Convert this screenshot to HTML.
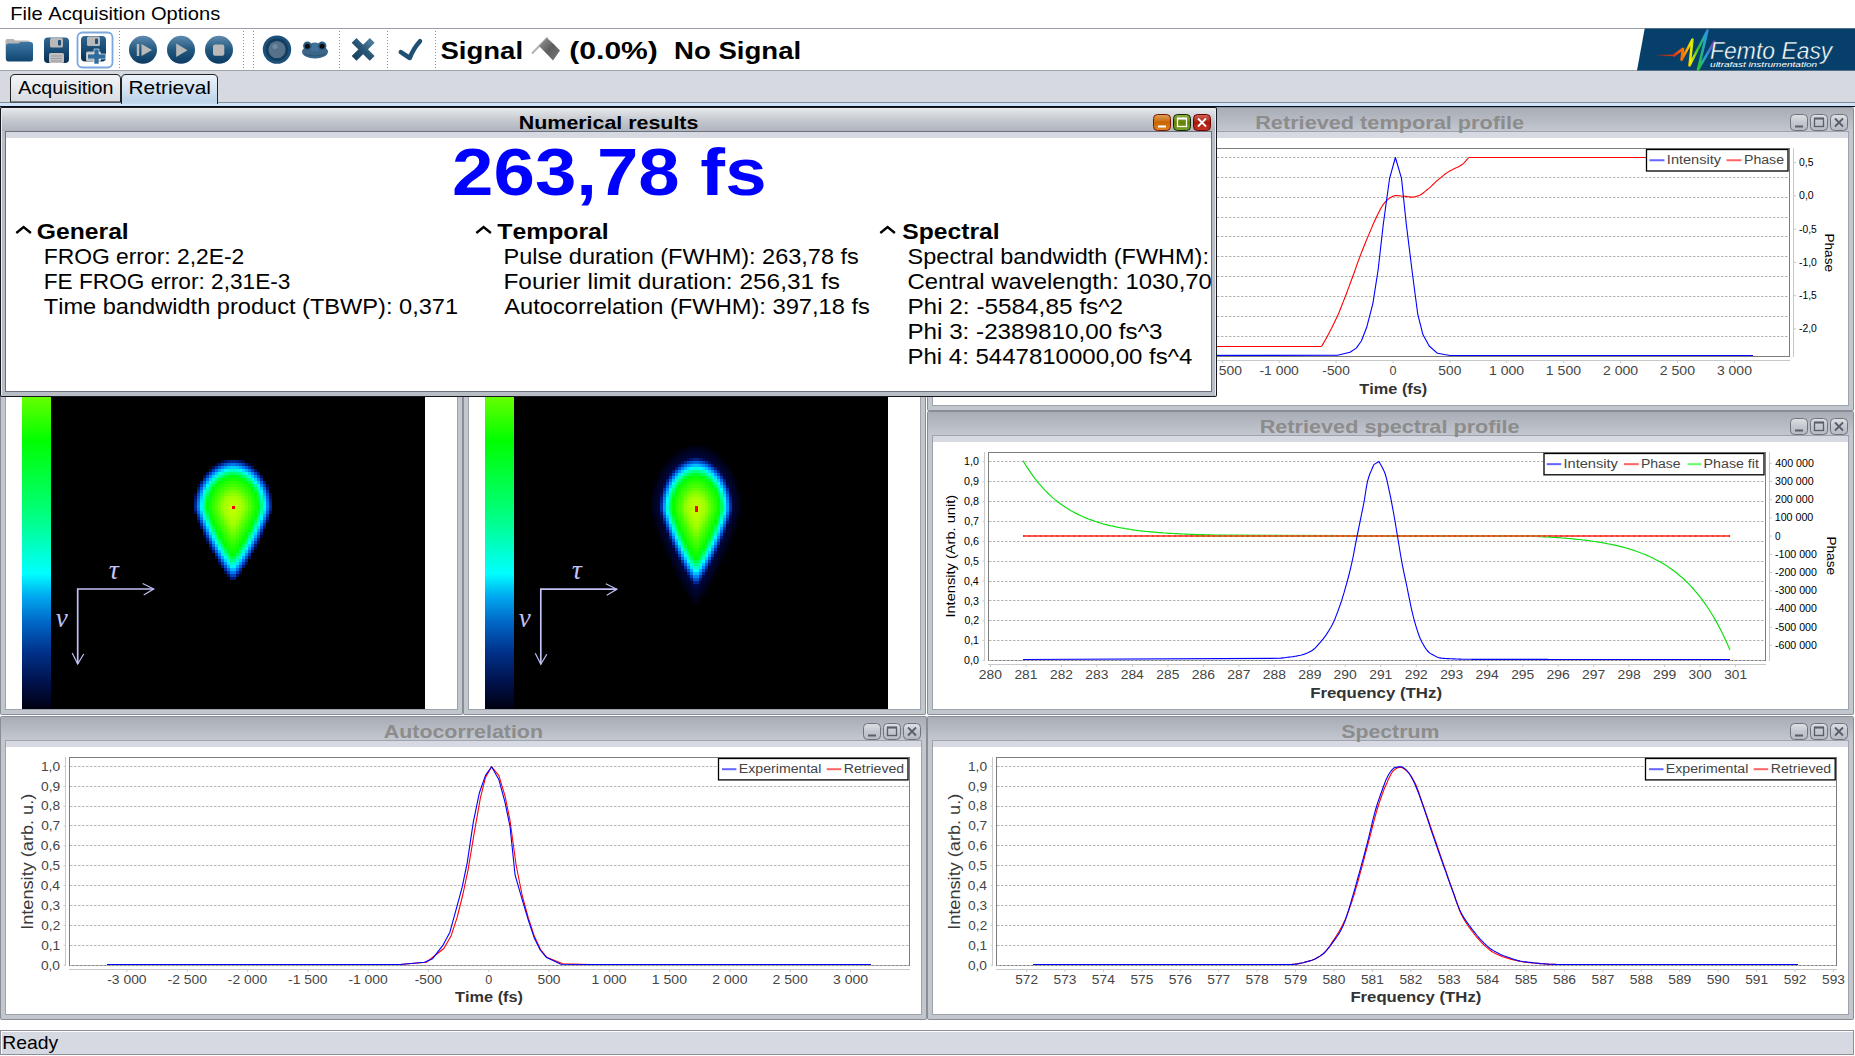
<!DOCTYPE html><html><head><meta charset="utf-8"><title>Femto Easy</title><style>html,body{margin:0;padding:0;background:#fff;overflow:hidden;}svg{display:block;font-family:"Liberation Sans",sans-serif;}text{font-kerning:none;}</style></head><body><svg width="1855" height="1056" viewBox="0 0 1855 1056" font-family="Liberation Sans, sans-serif"><defs><linearGradient id="tInact" x1="0" y1="0" x2="0" y2="1"><stop offset="0" stop-color="#a8adb6"/><stop offset="1" stop-color="#c3c7cf"/></linearGradient><linearGradient id="tAct" x1="0" y1="0" x2="0" y2="1"><stop offset="0" stop-color="#e4e6ea"/><stop offset="0.55" stop-color="#c2c6cd"/><stop offset="1" stop-color="#b0b4bd"/></linearGradient><linearGradient id="btnIn" x1="0" y1="0" x2="0" y2="1"><stop offset="0" stop-color="#dfe1e5"/><stop offset="0.5" stop-color="#c3c7ce"/><stop offset="1" stop-color="#b6bbc3"/></linearGradient><linearGradient id="bOr" x1="0" y1="0" x2="0" y2="1"><stop offset="0" stop-color="#dfa060"/><stop offset="0.5" stop-color="#c96500"/><stop offset="1" stop-color="#e2822a"/></linearGradient><linearGradient id="bGr" x1="0" y1="0" x2="0" y2="1"><stop offset="0" stop-color="#93ae48"/><stop offset="0.5" stop-color="#628204"/><stop offset="1" stop-color="#7f9e2a"/></linearGradient><linearGradient id="bRd" x1="0" y1="0" x2="0" y2="1"><stop offset="0" stop-color="#d2665a"/><stop offset="0.5" stop-color="#a8190a"/><stop offset="1" stop-color="#c8352a"/></linearGradient><linearGradient id="tabU" x1="0" y1="0" x2="0" y2="1"><stop offset="0" stop-color="#f4f5f7"/><stop offset="1" stop-color="#d8dbe1"/></linearGradient><linearGradient id="tabS" x1="0" y1="0" x2="0" y2="1"><stop offset="0" stop-color="#eef4fa"/><stop offset="1" stop-color="#b9d1e8"/></linearGradient><linearGradient id="icoB" x1="0" y1="0" x2="0" y2="1"><stop offset="0" stop-color="#5f8aad"/><stop offset="0.5" stop-color="#22587f"/><stop offset="1" stop-color="#0b3a62"/></linearGradient><linearGradient id="icoF" x1="0" y1="0" x2="0" y2="1"><stop offset="0" stop-color="#3d77a3"/><stop offset="1" stop-color="#0e4670"/></linearGradient><linearGradient id="icoS" x1="0" y1="0" x2="0" y2="1"><stop offset="0" stop-color="#2f6590"/><stop offset="0.5" stop-color="#184c75"/><stop offset="1" stop-color="#062f52"/></linearGradient><linearGradient id="cbar" x1="0" y1="0" x2="0" y2="1"><stop offset="0" stop-color="#66ff00"/><stop offset="0.14" stop-color="#00ff00"/><stop offset="0.38" stop-color="#00ff80"/><stop offset="0.565" stop-color="#00ffff"/><stop offset="0.64" stop-color="#00a8f0"/><stop offset="0.72" stop-color="#0068c8"/><stop offset="0.82" stop-color="#003088"/><stop offset="0.92" stop-color="#001048"/><stop offset="1" stop-color="#000010"/></linearGradient><linearGradient id="xg" x1="1" y1="0" x2="0" y2="1"><stop offset="0" stop-color="#4a7896"/><stop offset="0.5" stop-color="#2a5676"/><stop offset="1" stop-color="#1c4563"/></linearGradient><linearGradient id="flagg" x1="0" y1="0" x2="1" y2="1"><stop offset="0" stop-color="#9a9a9a"/><stop offset="0.5" stop-color="#5e5e5e"/><stop offset="1" stop-color="#7a7a7a"/></linearGradient><linearGradient id="rainbow" x1="0" y1="0" x2="1" y2="0"><stop offset="0" stop-color="#e03010"/><stop offset="0.25" stop-color="#ff8000"/><stop offset="0.42" stop-color="#f0f000"/><stop offset="0.6" stop-color="#30c030"/><stop offset="0.78" stop-color="#20a0e0"/><stop offset="1" stop-color="#9030b0"/></linearGradient><linearGradient id="lead" gradientUnits="userSpaceOnUse" x1="1655" y1="0" x2="1675" y2="0"><stop offset="0" stop-color="#063f69"/><stop offset="0.5" stop-color="#a03020"/><stop offset="1" stop-color="#e04020"/></linearGradient><clipPath id="numclip"><rect x="6" y="138" width="1205" height="253"/></clipPath></defs><rect x="0" y="0" width="1855" height="28" fill="#ffffff"/>
<text x="10.35" y="19.80" font-size="19.08" fill="#000" textLength="209.87" lengthAdjust="spacingAndGlyphs">File Acquisition Options</text>
<rect x="0" y="28" width="1855" height="1" fill="#9b9fa7"/>
<rect x="0" y="29" width="1855" height="41" fill="#ffffff"/>
<rect x="0" y="70" width="1855" height="1" fill="#9ea2aa"/>
<line x1="119.5" y1="31" x2="119.5" y2="68" stroke="#8a8e96" stroke-width="1" stroke-dasharray="1,2"/>
<line x1="243.5" y1="31" x2="243.5" y2="68" stroke="#8a8e96" stroke-width="1" stroke-dasharray="1,2"/>
<line x1="253.5" y1="31" x2="253.5" y2="68" stroke="#8a8e96" stroke-width="1" stroke-dasharray="1,2"/>
<line x1="339.5" y1="31" x2="339.5" y2="68" stroke="#8a8e96" stroke-width="1" stroke-dasharray="1,2"/>
<line x1="387.5" y1="31" x2="387.5" y2="68" stroke="#8a8e96" stroke-width="1" stroke-dasharray="1,2"/>
<line x1="435.5" y1="31" x2="435.5" y2="68" stroke="#8a8e96" stroke-width="1" stroke-dasharray="1,2"/>
<path d="M5.5,41 q0,-2 2,-2 h6 l1.5,1.5 h13 q2,0 2,2 v16 h-24.5 z" fill="#b4b4b4"/>
<path d="M6,46 q0,-2.5 2.5,-2.5 h10 l2,-1.5 h10 q2.5,0 2.5,2.5 v14.5 q0,2.5 -2.5,2.5 h-22 q-2.5,0 -2.5,-2.5 z" fill="url(#icoF)"/>
<rect x="44" y="37.5" width="25" height="25.5" rx="4" fill="url(#icoS)"/>
<rect x="50" y="38.0" width="13" height="9.5" rx="1.5" fill="#b9b9b9"/>
<rect x="58" y="40.0" width="3" height="5.5" rx="1" fill="#1d4f78"/>
<rect x="49" y="53.0" width="15" height="10" rx="1.5" fill="#c0c0c0"/>
<rect x="51" y="55.5" width="11" height="1" fill="#9a9a9a"/>
<rect x="51" y="58.0" width="11" height="1" fill="#9a9a9a"/>
<rect x="51" y="60.5" width="11" height="1" fill="#9a9a9a"/>
<rect x="77.5" y="32.5" width="35" height="35" rx="5" fill="none" stroke="#7aa7dc" stroke-width="1.8"/>
<rect x="81" y="36" width="25" height="25.5" rx="4" fill="url(#icoS)"/>
<rect x="87" y="36.5" width="13" height="9.5" rx="1.5" fill="#b9b9b9"/>
<rect x="95" y="38.5" width="3" height="5.5" rx="1" fill="#1d4f78"/>
<rect x="86" y="51.5" width="15" height="10" rx="1.5" fill="#c0c0c0"/>
<rect x="88" y="54.0" width="11" height="1" fill="#9a9a9a"/>
<rect x="88" y="56.5" width="11" height="1" fill="#9a9a9a"/>
<rect x="88" y="59.0" width="11" height="1" fill="#9a9a9a"/>
<path d="M99,49 v5 h6.5 v5 h-6.5 v5 h-5 v-5 h-6.5 v-5 h6.5 v-5 z" fill="#2f6c9c" stroke="#ffffff" stroke-width="0.6"/>
<circle cx="143" cy="49.8" r="14" fill="url(#icoB)"/>
<circle cx="181" cy="49.8" r="14" fill="url(#icoB)"/>
<circle cx="219" cy="49.8" r="14" fill="url(#icoB)"/>
<rect x="136.8" y="44" width="2.4" height="12" fill="#b9b9b9"/>
<path d="M141.5,44 L152,50 L141.5,56 z" fill="#b9b9b9"/>
<path d="M176.2,43.6 L187.5,50.3 L176.2,57 z" fill="#b9b9b9"/>
<rect x="213" y="44.5" width="11.3" height="11.3" rx="2" fill="#b9b9b9"/>
<circle cx="277" cy="49.6" r="14.2" fill="#1d5078"/>
<circle cx="277" cy="49.6" r="11.2" fill="#123d5e"/>
<circle cx="277" cy="49.6" r="8.6" fill="#56728a"/>
<circle cx="275" cy="46.5" r="2.6" fill="#7f9bb0" opacity="0.6"/>
<ellipse cx="315" cy="51.8" rx="13" ry="6.8" fill="#3b6688"/>
<ellipse cx="314.8" cy="47" rx="6" ry="4.6" fill="#44719a"/>
<circle cx="307.4" cy="45.8" r="4.3" fill="#2c5a7e"/>
<circle cx="322.1" cy="45.8" r="4.3" fill="#2c5a7e"/>
<circle cx="307.4" cy="46.2" r="2.5" fill="#0c0c0c"/>
<circle cx="322.1" cy="46.2" r="2.5" fill="#0c0c0c"/>
<path d="M305,54.5 Q315,57.5 325,54.5" stroke="#2a4f6c" stroke-width="0.8" fill="none"/>
<path d="M356.5,42.8 L369.8,56 M369.8,42.8 L356.5,56" stroke="url(#xg)" stroke-width="6.8" stroke-linecap="square"/>
<path d="M400.8,52.2 L409.8,58 Q413,49 420,41.2" stroke="#1f4f72" stroke-width="4.5" fill="none" stroke-linecap="round" stroke-linejoin="round"/>
<text x="440.51" y="58.50" font-size="24.80" font-weight="bold" fill="#000" textLength="82.54" lengthAdjust="spacingAndGlyphs">Signal</text>
<path d="M532.5,53 L547,38" stroke="#b0b0b0" stroke-width="1.8" stroke-linecap="round"/>
<path d="M539,46 L547,38 Q553,43 560,50.5 L553,60.5 Q547,54 539,46 z" fill="url(#flagg)"/>
<text x="569.30" y="58.60" font-size="24.80" font-weight="bold" fill="#000" textLength="88.60" lengthAdjust="spacingAndGlyphs">(0.0%)</text>
<text x="674.06" y="58.60" font-size="24.80" font-weight="bold" fill="#000" textLength="127.10" lengthAdjust="spacingAndGlyphs">No Signal</text>
<path d="M1644.7,28.5 L1855,28.5 L1855,70.5 L1637,70.5 z" fill="#063f69"/>
<path d="M1655,55.4 L1675,55.4" stroke="url(#lead)" stroke-width="1.4" fill="none"/>
<path d="M1674,55.4 L1683,48.8 L1681.5,59.8 L1692.5,39.5 L1689.5,65.5 L1707.5,30.5 L1698,69.7 L1714.6,41.5" stroke="url(#rainbow)" stroke-width="2.6" fill="none" stroke-linejoin="round" stroke-linecap="round"/>
<text x="1710.12" y="59.20" font-size="23.32" fill="#ffffff" textLength="122.22" lengthAdjust="spacingAndGlyphs" font-style="italic" stroke="#063f69" stroke-width="0.4">Femto Easy</text>
<text x="1710.05" y="67.40" font-size="7.42" fill="#ffffff" textLength="107.10" lengthAdjust="spacingAndGlyphs" font-style="italic">ultrafast instrumentation</text>
<rect x="0" y="71" width="1855" height="31" fill="#d6d9e0"/>
<rect x="0" y="102" width="1855" height="1" fill="#7f8a93"/>
<rect x="0" y="103" width="1855" height="3" fill="#d0e5f9"/>
<rect x="0" y="106" width="1855" height="1" fill="#0a0e1a"/>
<path d="M10.5,102 V79 q0,-4.5 4.5,-4.5 H116 q4.5,0 4.5,4.5 V102 z" fill="url(#tabU)" stroke="#222" stroke-width="1"/>
<path d="M121.5,104 V79 q0,-4.5 4.5,-4.5 H213 q4.5,0 4.5,4.5 V104" fill="url(#tabS)" stroke="#222" stroke-width="1"/>
<rect x="122" y="102" width="95" height="2" fill="#c4d9ee"/>
<text x="18.36" y="94.00" font-size="18.55" fill="#000" textLength="95.12" lengthAdjust="spacingAndGlyphs">Acquisition</text>
<text x="128.49" y="94.00" font-size="18.55" fill="#000" textLength="82.41" lengthAdjust="spacingAndGlyphs">Retrieval</text>
<rect x="0" y="107" width="463" height="608" fill="#888d96" rx="2"/>
<rect x="1" y="108" width="461" height="606" fill="#c2c6cd" rx="1"/>
<rect x="1" y="108" width="461" height="23" fill="url(#tInact)"/>
<rect x="5" y="131" width="453" height="579" fill="#9da2ab"/>
<rect x="6" y="132" width="451" height="6" fill="#d6d9e1"/>
<rect x="6" y="138" width="451" height="571" fill="#ffffff"/>
<rect x="399.5" y="114.5" width="17" height="16" rx="4" fill="url(#btnIn)" stroke="#6e737c" stroke-width="1"/>
<rect x="404" y="125.5" width="8" height="2" fill="#5a5e66"/>
<rect x="419.5" y="114.5" width="17" height="16" rx="4" fill="url(#btnIn)" stroke="#6e737c" stroke-width="1"/>
<rect x="423.5" y="118.5" width="9" height="8" fill="none" stroke="#5a5e66" stroke-width="1.3"/>
<rect x="423" y="117.5" width="10" height="2" fill="#5a5e66"/>
<rect x="439.5" y="114.5" width="17" height="16" rx="4" fill="url(#btnIn)" stroke="#6e737c" stroke-width="1"/>
<path d="M444,118.5 L452,126.5 M452,118.5 L444,126.5" stroke="#5a5e66" stroke-width="1.8" fill="none"/>
<rect x="463" y="107" width="463" height="608" fill="#888d96" rx="2"/>
<rect x="464" y="108" width="461" height="606" fill="#c2c6cd" rx="1"/>
<rect x="464" y="108" width="461" height="23" fill="url(#tInact)"/>
<rect x="468" y="131" width="453" height="579" fill="#9da2ab"/>
<rect x="469" y="132" width="451" height="6" fill="#d6d9e1"/>
<rect x="469" y="138" width="451" height="571" fill="#ffffff"/>
<rect x="862.5" y="114.5" width="17" height="16" rx="4" fill="url(#btnIn)" stroke="#6e737c" stroke-width="1"/>
<rect x="867" y="125.5" width="8" height="2" fill="#5a5e66"/>
<rect x="882.5" y="114.5" width="17" height="16" rx="4" fill="url(#btnIn)" stroke="#6e737c" stroke-width="1"/>
<rect x="886.5" y="118.5" width="9" height="8" fill="none" stroke="#5a5e66" stroke-width="1.3"/>
<rect x="886" y="117.5" width="10" height="2" fill="#5a5e66"/>
<rect x="902.5" y="114.5" width="17" height="16" rx="4" fill="url(#btnIn)" stroke="#6e737c" stroke-width="1"/>
<path d="M907,118.5 L915,126.5 M915,118.5 L907,126.5" stroke="#5a5e66" stroke-width="1.8" fill="none"/>
<rect x="22" y="397" width="29" height="312" fill="url(#cbar)"/>
<rect x="51" y="138" width="374" height="571" fill="#000000"/>
<g shape-rendering="crispEdges"><rect x="221.4" y="459.5" width="3" height="3" fill="#000844"/><rect x="224.4" y="459.5" width="3" height="3" fill="#001266"/><rect x="227.4" y="459.5" width="3" height="3" fill="#001f81"/><rect x="230.4" y="459.5" width="3" height="3" fill="#002790"/><rect x="233.4" y="459.5" width="3" height="3" fill="#002790"/><rect x="236.4" y="459.5" width="3" height="3" fill="#001f81"/><rect x="239.4" y="459.5" width="3" height="3" fill="#001266"/><rect x="242.4" y="459.5" width="3" height="3" fill="#000844"/><rect x="215.4" y="462.5" width="3" height="3" fill="#000742"/><rect x="218.4" y="462.5" width="3" height="3" fill="#001a78"/><rect x="221.4" y="462.5" width="3" height="3" fill="#0035a8"/><rect x="224.4" y="462.5" width="3" height="3" fill="#0050c7"/><rect x="227.4" y="462.5" width="3" height="3" fill="#0066db"/><rect x="230.4" y="462.5" width="3" height="3" fill="#0072e7"/><rect x="233.4" y="462.5" width="3" height="3" fill="#0072e7"/><rect x="236.4" y="462.5" width="3" height="3" fill="#0066db"/><rect x="239.4" y="462.5" width="3" height="3" fill="#0050c7"/><rect x="242.4" y="462.5" width="3" height="3" fill="#0035a8"/><rect x="245.4" y="462.5" width="3" height="3" fill="#001a78"/><rect x="248.4" y="462.5" width="3" height="3" fill="#000742"/><rect x="212.4" y="465.5" width="3" height="3" fill="#000f5e"/><rect x="215.4" y="465.5" width="3" height="3" fill="#0031a0"/><rect x="218.4" y="465.5" width="3" height="3" fill="#005ad0"/><rect x="221.4" y="465.5" width="3" height="3" fill="#0081f4"/><rect x="224.4" y="465.5" width="3" height="3" fill="#00a4ff"/><rect x="227.4" y="465.5" width="3" height="3" fill="#00beff"/><rect x="230.4" y="465.5" width="3" height="3" fill="#00cdff"/><rect x="233.4" y="465.5" width="3" height="3" fill="#00cdff"/><rect x="236.4" y="465.5" width="3" height="3" fill="#00beff"/><rect x="239.4" y="465.5" width="3" height="3" fill="#00a4ff"/><rect x="242.4" y="465.5" width="3" height="3" fill="#0081f4"/><rect x="245.4" y="465.5" width="3" height="3" fill="#005ad0"/><rect x="248.4" y="465.5" width="3" height="3" fill="#0031a0"/><rect x="251.4" y="465.5" width="3" height="3" fill="#000f5e"/><rect x="209.4" y="468.5" width="3" height="3" fill="#00136c"/><rect x="212.4" y="468.5" width="3" height="3" fill="#0040b7"/><rect x="215.4" y="468.5" width="3" height="3" fill="#0076ea"/><rect x="218.4" y="468.5" width="3" height="3" fill="#00aaff"/><rect x="221.4" y="468.5" width="3" height="3" fill="#00daff"/><rect x="224.4" y="468.5" width="3" height="3" fill="#00faf7"/><rect x="227.4" y="468.5" width="3" height="3" fill="#00fbd9"/><rect x="230.4" y="468.5" width="3" height="3" fill="#00fcc8"/><rect x="233.4" y="468.5" width="3" height="3" fill="#00fcc8"/><rect x="236.4" y="468.5" width="3" height="3" fill="#00fbd9"/><rect x="239.4" y="468.5" width="3" height="3" fill="#00faf7"/><rect x="242.4" y="468.5" width="3" height="3" fill="#00daff"/><rect x="245.4" y="468.5" width="3" height="3" fill="#00aaff"/><rect x="248.4" y="468.5" width="3" height="3" fill="#0076ea"/><rect x="251.4" y="468.5" width="3" height="3" fill="#0040b7"/><rect x="254.4" y="468.5" width="3" height="3" fill="#00136c"/><rect x="206.4" y="471.5" width="3" height="3" fill="#00136a"/><rect x="209.4" y="471.5" width="3" height="3" fill="#0046be"/><rect x="212.4" y="471.5" width="3" height="3" fill="#0084f8"/><rect x="215.4" y="471.5" width="3" height="3" fill="#00c6ff"/><rect x="218.4" y="471.5" width="3" height="3" fill="#00faf6"/><rect x="221.4" y="471.5" width="3" height="3" fill="#00fcc1"/><rect x="224.4" y="471.5" width="3" height="3" fill="#00fe96"/><rect x="227.4" y="471.5" width="3" height="3" fill="#00ff77"/><rect x="230.4" y="471.5" width="3" height="3" fill="#00ff66"/><rect x="233.4" y="471.5" width="3" height="3" fill="#00ff66"/><rect x="236.4" y="471.5" width="3" height="3" fill="#00ff77"/><rect x="239.4" y="471.5" width="3" height="3" fill="#00fe96"/><rect x="242.4" y="471.5" width="3" height="3" fill="#00fcc1"/><rect x="245.4" y="471.5" width="3" height="3" fill="#00faf6"/><rect x="248.4" y="471.5" width="3" height="3" fill="#00c6ff"/><rect x="251.4" y="471.5" width="3" height="3" fill="#0084f8"/><rect x="254.4" y="471.5" width="3" height="3" fill="#0046be"/><rect x="257.4" y="471.5" width="3" height="3" fill="#00136a"/><rect x="203.4" y="474.5" width="3" height="3" fill="#000e5a"/><rect x="206.4" y="474.5" width="3" height="3" fill="#0040b8"/><rect x="209.4" y="474.5" width="3" height="3" fill="#0086f9"/><rect x="212.4" y="474.5" width="3" height="3" fill="#00d2ff"/><rect x="215.4" y="474.5" width="3" height="3" fill="#00fbde"/><rect x="218.4" y="474.5" width="3" height="3" fill="#00fe9c"/><rect x="221.4" y="474.5" width="3" height="3" fill="#00ff65"/><rect x="224.4" y="474.5" width="3" height="3" fill="#00ff39"/><rect x="227.4" y="474.5" width="3" height="3" fill="#00ff19"/><rect x="230.4" y="474.5" width="3" height="3" fill="#00ff07"/><rect x="233.4" y="474.5" width="3" height="3" fill="#00ff07"/><rect x="236.4" y="474.5" width="3" height="3" fill="#00ff19"/><rect x="239.4" y="474.5" width="3" height="3" fill="#00ff39"/><rect x="242.4" y="474.5" width="3" height="3" fill="#00ff65"/><rect x="245.4" y="474.5" width="3" height="3" fill="#00fe9c"/><rect x="248.4" y="474.5" width="3" height="3" fill="#00fbde"/><rect x="251.4" y="474.5" width="3" height="3" fill="#00d2ff"/><rect x="254.4" y="474.5" width="3" height="3" fill="#0086f9"/><rect x="257.4" y="474.5" width="3" height="3" fill="#0040b8"/><rect x="260.4" y="474.5" width="3" height="3" fill="#000e5a"/><rect x="203.4" y="477.5" width="3" height="3" fill="#0031a1"/><rect x="206.4" y="477.5" width="3" height="3" fill="#007aee"/><rect x="209.4" y="477.5" width="3" height="3" fill="#00cdff"/><rect x="212.4" y="477.5" width="3" height="3" fill="#00fbd8"/><rect x="215.4" y="477.5" width="3" height="3" fill="#00ff8a"/><rect x="218.4" y="477.5" width="3" height="3" fill="#00ff47"/><rect x="221.4" y="477.5" width="3" height="3" fill="#00ff0e"/><rect x="224.4" y="477.5" width="3" height="3" fill="#07ff00"/><rect x="227.4" y="477.5" width="3" height="3" fill="#10ff00"/><rect x="230.4" y="477.5" width="3" height="3" fill="#14ff00"/><rect x="233.4" y="477.5" width="3" height="3" fill="#14ff00"/><rect x="236.4" y="477.5" width="3" height="3" fill="#10ff00"/><rect x="239.4" y="477.5" width="3" height="3" fill="#07ff00"/><rect x="242.4" y="477.5" width="3" height="3" fill="#00ff0e"/><rect x="245.4" y="477.5" width="3" height="3" fill="#00ff47"/><rect x="248.4" y="477.5" width="3" height="3" fill="#00ff8a"/><rect x="251.4" y="477.5" width="3" height="3" fill="#00fbd8"/><rect x="254.4" y="477.5" width="3" height="3" fill="#00cdff"/><rect x="257.4" y="477.5" width="3" height="3" fill="#007aee"/><rect x="260.4" y="477.5" width="3" height="3" fill="#0031a1"/><rect x="200.4" y="480.5" width="3" height="3" fill="#001a78"/><rect x="203.4" y="480.5" width="3" height="3" fill="#0061d7"/><rect x="206.4" y="480.5" width="3" height="3" fill="#00b8ff"/><rect x="209.4" y="480.5" width="3" height="3" fill="#00fbe4"/><rect x="212.4" y="480.5" width="3" height="3" fill="#00ff8b"/><rect x="215.4" y="480.5" width="3" height="3" fill="#00ff3d"/><rect x="218.4" y="480.5" width="3" height="3" fill="#02ff00"/><rect x="221.4" y="480.5" width="3" height="3" fill="#11ff00"/><rect x="224.4" y="480.5" width="3" height="3" fill="#1dff00"/><rect x="227.4" y="480.5" width="3" height="3" fill="#26ff00"/><rect x="230.4" y="480.5" width="3" height="3" fill="#2bff00"/><rect x="233.4" y="480.5" width="3" height="3" fill="#2bff00"/><rect x="236.4" y="480.5" width="3" height="3" fill="#26ff00"/><rect x="239.4" y="480.5" width="3" height="3" fill="#1dff00"/><rect x="242.4" y="480.5" width="3" height="3" fill="#11ff00"/><rect x="245.4" y="480.5" width="3" height="3" fill="#02ff00"/><rect x="248.4" y="480.5" width="3" height="3" fill="#00ff3d"/><rect x="251.4" y="480.5" width="3" height="3" fill="#00ff8b"/><rect x="254.4" y="480.5" width="3" height="3" fill="#00fbe4"/><rect x="257.4" y="480.5" width="3" height="3" fill="#00b8ff"/><rect x="260.4" y="480.5" width="3" height="3" fill="#0061d7"/><rect x="263.4" y="480.5" width="3" height="3" fill="#001a78"/><rect x="197.4" y="483.5" width="3" height="3" fill="#000742"/><rect x="200.4" y="483.5" width="3" height="3" fill="#003cb4"/><rect x="203.4" y="483.5" width="3" height="3" fill="#0093ff"/><rect x="206.4" y="483.5" width="3" height="3" fill="#00f5ff"/><rect x="209.4" y="483.5" width="3" height="3" fill="#00fea0"/><rect x="212.4" y="483.5" width="3" height="3" fill="#00ff46"/><rect x="215.4" y="483.5" width="3" height="3" fill="#03ff00"/><rect x="218.4" y="483.5" width="3" height="3" fill="#15ff00"/><rect x="221.4" y="483.5" width="3" height="3" fill="#24ff00"/><rect x="224.4" y="483.5" width="3" height="3" fill="#32ff00"/><rect x="227.4" y="483.5" width="3" height="3" fill="#3bff00"/><rect x="230.4" y="483.5" width="3" height="3" fill="#41ff00"/><rect x="233.4" y="483.5" width="3" height="3" fill="#41ff00"/><rect x="236.4" y="483.5" width="3" height="3" fill="#3bff00"/><rect x="239.4" y="483.5" width="3" height="3" fill="#32ff00"/><rect x="242.4" y="483.5" width="3" height="3" fill="#24ff00"/><rect x="245.4" y="483.5" width="3" height="3" fill="#15ff00"/><rect x="248.4" y="483.5" width="3" height="3" fill="#03ff00"/><rect x="251.4" y="483.5" width="3" height="3" fill="#00ff46"/><rect x="254.4" y="483.5" width="3" height="3" fill="#00fea0"/><rect x="257.4" y="483.5" width="3" height="3" fill="#00f5ff"/><rect x="260.4" y="483.5" width="3" height="3" fill="#0093ff"/><rect x="263.4" y="483.5" width="3" height="3" fill="#003cb4"/><rect x="266.4" y="483.5" width="3" height="3" fill="#000742"/><rect x="197.4" y="486.5" width="3" height="3" fill="#001672"/><rect x="200.4" y="486.5" width="3" height="3" fill="#0065da"/><rect x="203.4" y="486.5" width="3" height="3" fill="#00c7ff"/><rect x="206.4" y="486.5" width="3" height="3" fill="#00fcc8"/><rect x="209.4" y="486.5" width="3" height="3" fill="#00ff63"/><rect x="212.4" y="486.5" width="3" height="3" fill="#00ff05"/><rect x="215.4" y="486.5" width="3" height="3" fill="#13ff00"/><rect x="218.4" y="486.5" width="3" height="3" fill="#27ff00"/><rect x="221.4" y="486.5" width="3" height="3" fill="#38ff00"/><rect x="224.4" y="486.5" width="3" height="3" fill="#46ff00"/><rect x="227.4" y="486.5" width="3" height="3" fill="#54ff00"/><rect x="230.4" y="486.5" width="3" height="3" fill="#5cff00"/><rect x="233.4" y="486.5" width="3" height="3" fill="#5cff00"/><rect x="236.4" y="486.5" width="3" height="3" fill="#54ff00"/><rect x="239.4" y="486.5" width="3" height="3" fill="#46ff00"/><rect x="242.4" y="486.5" width="3" height="3" fill="#38ff00"/><rect x="245.4" y="486.5" width="3" height="3" fill="#27ff00"/><rect x="248.4" y="486.5" width="3" height="3" fill="#13ff00"/><rect x="251.4" y="486.5" width="3" height="3" fill="#00ff05"/><rect x="254.4" y="486.5" width="3" height="3" fill="#00ff63"/><rect x="257.4" y="486.5" width="3" height="3" fill="#00fcc8"/><rect x="260.4" y="486.5" width="3" height="3" fill="#00c7ff"/><rect x="263.4" y="486.5" width="3" height="3" fill="#0065da"/><rect x="266.4" y="486.5" width="3" height="3" fill="#001672"/><rect x="197.4" y="489.5" width="3" height="3" fill="#00309f"/><rect x="200.4" y="489.5" width="3" height="3" fill="#0089fc"/><rect x="203.4" y="489.5" width="3" height="3" fill="#00f5ff"/><rect x="206.4" y="489.5" width="3" height="3" fill="#00fe94"/><rect x="209.4" y="489.5" width="3" height="3" fill="#00ff2d"/><rect x="212.4" y="489.5" width="3" height="3" fill="#0cff00"/><rect x="215.4" y="489.5" width="3" height="3" fill="#23ff00"/><rect x="218.4" y="489.5" width="3" height="3" fill="#38ff00"/><rect x="221.4" y="489.5" width="3" height="3" fill="#4bff00"/><rect x="224.4" y="489.5" width="3" height="3" fill="#5fff00"/><rect x="227.4" y="489.5" width="3" height="3" fill="#6eff00"/><rect x="230.4" y="489.5" width="3" height="3" fill="#77ff00"/><rect x="233.4" y="489.5" width="3" height="3" fill="#77ff00"/><rect x="236.4" y="489.5" width="3" height="3" fill="#6eff00"/><rect x="239.4" y="489.5" width="3" height="3" fill="#5fff00"/><rect x="242.4" y="489.5" width="3" height="3" fill="#4bff00"/><rect x="245.4" y="489.5" width="3" height="3" fill="#38ff00"/><rect x="248.4" y="489.5" width="3" height="3" fill="#23ff00"/><rect x="251.4" y="489.5" width="3" height="3" fill="#0cff00"/><rect x="254.4" y="489.5" width="3" height="3" fill="#00ff2d"/><rect x="257.4" y="489.5" width="3" height="3" fill="#00fe94"/><rect x="260.4" y="489.5" width="3" height="3" fill="#00f5ff"/><rect x="263.4" y="489.5" width="3" height="3" fill="#0089fc"/><rect x="266.4" y="489.5" width="3" height="3" fill="#00309f"/><rect x="194.4" y="492.5" width="3" height="3" fill="#000948"/><rect x="197.4" y="492.5" width="3" height="3" fill="#0049c0"/><rect x="200.4" y="492.5" width="3" height="3" fill="#00aeff"/><rect x="203.4" y="492.5" width="3" height="3" fill="#00fbd9"/><rect x="206.4" y="492.5" width="3" height="3" fill="#00ff67"/><rect x="209.4" y="492.5" width="3" height="3" fill="#00ff00"/><rect x="212.4" y="492.5" width="3" height="3" fill="#19ff00"/><rect x="215.4" y="492.5" width="3" height="3" fill="#31ff00"/><rect x="218.4" y="492.5" width="3" height="3" fill="#48ff00"/><rect x="221.4" y="492.5" width="3" height="3" fill="#61ff00"/><rect x="224.4" y="492.5" width="3" height="3" fill="#77ff00"/><rect x="227.4" y="492.5" width="3" height="3" fill="#88ff00"/><rect x="230.4" y="492.5" width="3" height="3" fill="#92ff00"/><rect x="233.4" y="492.5" width="3" height="3" fill="#92ff00"/><rect x="236.4" y="492.5" width="3" height="3" fill="#88ff00"/><rect x="239.4" y="492.5" width="3" height="3" fill="#77ff00"/><rect x="242.4" y="492.5" width="3" height="3" fill="#61ff00"/><rect x="245.4" y="492.5" width="3" height="3" fill="#48ff00"/><rect x="248.4" y="492.5" width="3" height="3" fill="#31ff00"/><rect x="251.4" y="492.5" width="3" height="3" fill="#19ff00"/><rect x="254.4" y="492.5" width="3" height="3" fill="#00ff00"/><rect x="257.4" y="492.5" width="3" height="3" fill="#00ff67"/><rect x="260.4" y="492.5" width="3" height="3" fill="#00fbd9"/><rect x="263.4" y="492.5" width="3" height="3" fill="#00aeff"/><rect x="266.4" y="492.5" width="3" height="3" fill="#0049c0"/><rect x="269.4" y="492.5" width="3" height="3" fill="#000948"/><rect x="194.4" y="495.5" width="3" height="3" fill="#001164"/><rect x="197.4" y="495.5" width="3" height="3" fill="#0061d7"/><rect x="200.4" y="495.5" width="3" height="3" fill="#00cdff"/><rect x="203.4" y="495.5" width="3" height="3" fill="#00fdb6"/><rect x="206.4" y="495.5" width="3" height="3" fill="#00ff43"/><rect x="209.4" y="495.5" width="3" height="3" fill="#0aff00"/><rect x="212.4" y="495.5" width="3" height="3" fill="#24ff00"/><rect x="215.4" y="495.5" width="3" height="3" fill="#3dff00"/><rect x="218.4" y="495.5" width="3" height="3" fill="#58ff00"/><rect x="221.4" y="495.5" width="3" height="3" fill="#74ff00"/><rect x="224.4" y="495.5" width="3" height="3" fill="#8dff00"/><rect x="227.4" y="495.5" width="3" height="3" fill="#a0ff00"/><rect x="230.4" y="495.5" width="3" height="3" fill="#a5ff00"/><rect x="233.4" y="495.5" width="3" height="3" fill="#a5ff00"/><rect x="236.4" y="495.5" width="3" height="3" fill="#a0ff00"/><rect x="239.4" y="495.5" width="3" height="3" fill="#8dff00"/><rect x="242.4" y="495.5" width="3" height="3" fill="#74ff00"/><rect x="245.4" y="495.5" width="3" height="3" fill="#58ff00"/><rect x="248.4" y="495.5" width="3" height="3" fill="#3dff00"/><rect x="251.4" y="495.5" width="3" height="3" fill="#24ff00"/><rect x="254.4" y="495.5" width="3" height="3" fill="#0aff00"/><rect x="257.4" y="495.5" width="3" height="3" fill="#00ff43"/><rect x="260.4" y="495.5" width="3" height="3" fill="#00fdb6"/><rect x="263.4" y="495.5" width="3" height="3" fill="#00cdff"/><rect x="266.4" y="495.5" width="3" height="3" fill="#0061d7"/><rect x="269.4" y="495.5" width="3" height="3" fill="#001164"/><rect x="194.4" y="498.5" width="3" height="3" fill="#001b7a"/><rect x="197.4" y="498.5" width="3" height="3" fill="#0073e8"/><rect x="200.4" y="498.5" width="3" height="3" fill="#00e4ff"/><rect x="203.4" y="498.5" width="3" height="3" fill="#00fe9a"/><rect x="206.4" y="498.5" width="3" height="3" fill="#00ff27"/><rect x="209.4" y="498.5" width="3" height="3" fill="#11ff00"/><rect x="212.4" y="498.5" width="3" height="3" fill="#2cff00"/><rect x="215.4" y="498.5" width="3" height="3" fill="#47ff00"/><rect x="218.4" y="498.5" width="3" height="3" fill="#66ff00"/><rect x="221.4" y="498.5" width="3" height="3" fill="#85ff00"/><rect x="224.4" y="498.5" width="3" height="3" fill="#a0ff00"/><rect x="227.4" y="498.5" width="3" height="3" fill="#aaff00"/><rect x="230.4" y="498.5" width="3" height="3" fill="#b0ff00"/><rect x="233.4" y="498.5" width="3" height="3" fill="#b0ff00"/><rect x="236.4" y="498.5" width="3" height="3" fill="#aaff00"/><rect x="239.4" y="498.5" width="3" height="3" fill="#a0ff00"/><rect x="242.4" y="498.5" width="3" height="3" fill="#85ff00"/><rect x="245.4" y="498.5" width="3" height="3" fill="#66ff00"/><rect x="248.4" y="498.5" width="3" height="3" fill="#47ff00"/><rect x="251.4" y="498.5" width="3" height="3" fill="#2cff00"/><rect x="254.4" y="498.5" width="3" height="3" fill="#11ff00"/><rect x="257.4" y="498.5" width="3" height="3" fill="#00ff27"/><rect x="260.4" y="498.5" width="3" height="3" fill="#00fe9a"/><rect x="263.4" y="498.5" width="3" height="3" fill="#00e4ff"/><rect x="266.4" y="498.5" width="3" height="3" fill="#0073e8"/><rect x="269.4" y="498.5" width="3" height="3" fill="#001b7a"/><rect x="194.4" y="501.5" width="3" height="3" fill="#002389"/><rect x="197.4" y="501.5" width="3" height="3" fill="#0080f4"/><rect x="200.4" y="501.5" width="3" height="3" fill="#00f4ff"/><rect x="203.4" y="501.5" width="3" height="3" fill="#00ff88"/><rect x="206.4" y="501.5" width="3" height="3" fill="#00ff13"/><rect x="209.4" y="501.5" width="3" height="3" fill="#16ff00"/><rect x="212.4" y="501.5" width="3" height="3" fill="#32ff00"/><rect x="215.4" y="501.5" width="3" height="3" fill="#4fff00"/><rect x="218.4" y="501.5" width="3" height="3" fill="#70ff00"/><rect x="221.4" y="501.5" width="3" height="3" fill="#91ff00"/><rect x="224.4" y="501.5" width="3" height="3" fill="#a6ff00"/><rect x="227.4" y="501.5" width="3" height="3" fill="#b2ff00"/><rect x="230.4" y="501.5" width="3" height="3" fill="#baff00"/><rect x="233.4" y="501.5" width="3" height="3" fill="#baff00"/><rect x="236.4" y="501.5" width="3" height="3" fill="#b2ff00"/><rect x="239.4" y="501.5" width="3" height="3" fill="#a6ff00"/><rect x="242.4" y="501.5" width="3" height="3" fill="#91ff00"/><rect x="245.4" y="501.5" width="3" height="3" fill="#70ff00"/><rect x="248.4" y="501.5" width="3" height="3" fill="#4fff00"/><rect x="251.4" y="501.5" width="3" height="3" fill="#32ff00"/><rect x="254.4" y="501.5" width="3" height="3" fill="#16ff00"/><rect x="257.4" y="501.5" width="3" height="3" fill="#00ff13"/><rect x="260.4" y="501.5" width="3" height="3" fill="#00ff88"/><rect x="263.4" y="501.5" width="3" height="3" fill="#00f4ff"/><rect x="266.4" y="501.5" width="3" height="3" fill="#0080f4"/><rect x="269.4" y="501.5" width="3" height="3" fill="#002389"/><rect x="194.4" y="504.5" width="3" height="3" fill="#002891"/><rect x="197.4" y="504.5" width="3" height="3" fill="#0086f9"/><rect x="200.4" y="504.5" width="3" height="3" fill="#00fafb"/><rect x="203.4" y="504.5" width="3" height="3" fill="#00ff7f"/><rect x="206.4" y="504.5" width="3" height="3" fill="#00ff09"/><rect x="209.4" y="504.5" width="3" height="3" fill="#19ff00"/><rect x="212.4" y="504.5" width="3" height="3" fill="#35ff00"/><rect x="215.4" y="504.5" width="3" height="3" fill="#53ff00"/><rect x="218.4" y="504.5" width="3" height="3" fill="#76ff00"/><rect x="221.4" y="504.5" width="3" height="3" fill="#98ff00"/><rect x="224.4" y="504.5" width="3" height="3" fill="#aaff00"/><rect x="227.4" y="504.5" width="3" height="3" fill="#b7ff00"/><rect x="230.4" y="504.5" width="3" height="3" fill="#c4ff00"/><rect x="233.4" y="504.5" width="3" height="3" fill="#c4ff00"/><rect x="236.4" y="504.5" width="3" height="3" fill="#b7ff00"/><rect x="239.4" y="504.5" width="3" height="3" fill="#aaff00"/><rect x="242.4" y="504.5" width="3" height="3" fill="#98ff00"/><rect x="245.4" y="504.5" width="3" height="3" fill="#76ff00"/><rect x="248.4" y="504.5" width="3" height="3" fill="#53ff00"/><rect x="251.4" y="504.5" width="3" height="3" fill="#35ff00"/><rect x="254.4" y="504.5" width="3" height="3" fill="#19ff00"/><rect x="257.4" y="504.5" width="3" height="3" fill="#00ff09"/><rect x="260.4" y="504.5" width="3" height="3" fill="#00ff7f"/><rect x="263.4" y="504.5" width="3" height="3" fill="#00fafb"/><rect x="266.4" y="504.5" width="3" height="3" fill="#0086f9"/><rect x="269.4" y="504.5" width="3" height="3" fill="#002891"/><rect x="194.4" y="507.5" width="3" height="3" fill="#002084"/><rect x="197.4" y="507.5" width="3" height="3" fill="#007cf0"/><rect x="200.4" y="507.5" width="3" height="3" fill="#00f1ff"/><rect x="203.4" y="507.5" width="3" height="3" fill="#00ff8b"/><rect x="206.4" y="507.5" width="3" height="3" fill="#00ff15"/><rect x="209.4" y="507.5" width="3" height="3" fill="#16ff00"/><rect x="212.4" y="507.5" width="3" height="3" fill="#32ff00"/><rect x="215.4" y="507.5" width="3" height="3" fill="#50ff00"/><rect x="218.4" y="507.5" width="3" height="3" fill="#72ff00"/><rect x="221.4" y="507.5" width="3" height="3" fill="#94ff00"/><rect x="224.4" y="507.5" width="3" height="3" fill="#a8ff00"/><rect x="227.4" y="507.5" width="3" height="3" fill="#b6ff00"/><rect x="230.4" y="507.5" width="3" height="3" fill="#c3ff00"/><rect x="233.4" y="507.5" width="3" height="3" fill="#c3ff00"/><rect x="236.4" y="507.5" width="3" height="3" fill="#b6ff00"/><rect x="239.4" y="507.5" width="3" height="3" fill="#a8ff00"/><rect x="242.4" y="507.5" width="3" height="3" fill="#94ff00"/><rect x="245.4" y="507.5" width="3" height="3" fill="#72ff00"/><rect x="248.4" y="507.5" width="3" height="3" fill="#50ff00"/><rect x="251.4" y="507.5" width="3" height="3" fill="#32ff00"/><rect x="254.4" y="507.5" width="3" height="3" fill="#16ff00"/><rect x="257.4" y="507.5" width="3" height="3" fill="#00ff15"/><rect x="260.4" y="507.5" width="3" height="3" fill="#00ff8b"/><rect x="263.4" y="507.5" width="3" height="3" fill="#00f1ff"/><rect x="266.4" y="507.5" width="3" height="3" fill="#007cf0"/><rect x="269.4" y="507.5" width="3" height="3" fill="#002084"/><rect x="194.4" y="510.5" width="3" height="3" fill="#000f5f"/><rect x="197.4" y="510.5" width="3" height="3" fill="#005fd5"/><rect x="200.4" y="510.5" width="3" height="3" fill="#00ceff"/><rect x="203.4" y="510.5" width="3" height="3" fill="#00fdb1"/><rect x="206.4" y="510.5" width="3" height="3" fill="#00ff3a"/><rect x="209.4" y="510.5" width="3" height="3" fill="#0dff00"/><rect x="212.4" y="510.5" width="3" height="3" fill="#29ff00"/><rect x="215.4" y="510.5" width="3" height="3" fill="#45ff00"/><rect x="218.4" y="510.5" width="3" height="3" fill="#66ff00"/><rect x="221.4" y="510.5" width="3" height="3" fill="#87ff00"/><rect x="224.4" y="510.5" width="3" height="3" fill="#a3ff00"/><rect x="227.4" y="510.5" width="3" height="3" fill="#b0ff00"/><rect x="230.4" y="510.5" width="3" height="3" fill="#bdff00"/><rect x="233.4" y="510.5" width="3" height="3" fill="#bdff00"/><rect x="236.4" y="510.5" width="3" height="3" fill="#b0ff00"/><rect x="239.4" y="510.5" width="3" height="3" fill="#a3ff00"/><rect x="242.4" y="510.5" width="3" height="3" fill="#87ff00"/><rect x="245.4" y="510.5" width="3" height="3" fill="#66ff00"/><rect x="248.4" y="510.5" width="3" height="3" fill="#45ff00"/><rect x="251.4" y="510.5" width="3" height="3" fill="#29ff00"/><rect x="254.4" y="510.5" width="3" height="3" fill="#0dff00"/><rect x="257.4" y="510.5" width="3" height="3" fill="#00ff3a"/><rect x="260.4" y="510.5" width="3" height="3" fill="#00fdb1"/><rect x="263.4" y="510.5" width="3" height="3" fill="#00ceff"/><rect x="266.4" y="510.5" width="3" height="3" fill="#005fd5"/><rect x="269.4" y="510.5" width="3" height="3" fill="#000f5f"/><rect x="197.4" y="513.5" width="3" height="3" fill="#003db5"/><rect x="200.4" y="513.5" width="3" height="3" fill="#00a5ff"/><rect x="203.4" y="513.5" width="3" height="3" fill="#00fbdc"/><rect x="206.4" y="513.5" width="3" height="3" fill="#00ff63"/><rect x="209.4" y="513.5" width="3" height="3" fill="#03ff00"/><rect x="212.4" y="513.5" width="3" height="3" fill="#1fff00"/><rect x="215.4" y="513.5" width="3" height="3" fill="#3aff00"/><rect x="218.4" y="513.5" width="3" height="3" fill="#59ff00"/><rect x="221.4" y="513.5" width="3" height="3" fill="#79ff00"/><rect x="224.4" y="513.5" width="3" height="3" fill="#9aff00"/><rect x="227.4" y="513.5" width="3" height="3" fill="#aaff00"/><rect x="230.4" y="513.5" width="3" height="3" fill="#b6ff00"/><rect x="233.4" y="513.5" width="3" height="3" fill="#b6ff00"/><rect x="236.4" y="513.5" width="3" height="3" fill="#aaff00"/><rect x="239.4" y="513.5" width="3" height="3" fill="#9aff00"/><rect x="242.4" y="513.5" width="3" height="3" fill="#79ff00"/><rect x="245.4" y="513.5" width="3" height="3" fill="#59ff00"/><rect x="248.4" y="513.5" width="3" height="3" fill="#3aff00"/><rect x="251.4" y="513.5" width="3" height="3" fill="#1fff00"/><rect x="254.4" y="513.5" width="3" height="3" fill="#03ff00"/><rect x="257.4" y="513.5" width="3" height="3" fill="#00ff63"/><rect x="260.4" y="513.5" width="3" height="3" fill="#00fbdc"/><rect x="263.4" y="513.5" width="3" height="3" fill="#00a5ff"/><rect x="266.4" y="513.5" width="3" height="3" fill="#003db5"/><rect x="197.4" y="516.5" width="3" height="3" fill="#002286"/><rect x="200.4" y="516.5" width="3" height="3" fill="#007df0"/><rect x="203.4" y="516.5" width="3" height="3" fill="#00efff"/><rect x="206.4" y="516.5" width="3" height="3" fill="#00fe90"/><rect x="209.4" y="516.5" width="3" height="3" fill="#00ff1d"/><rect x="212.4" y="516.5" width="3" height="3" fill="#14ff00"/><rect x="215.4" y="516.5" width="3" height="3" fill="#2fff00"/><rect x="218.4" y="516.5" width="3" height="3" fill="#4aff00"/><rect x="221.4" y="516.5" width="3" height="3" fill="#6bff00"/><rect x="224.4" y="516.5" width="3" height="3" fill="#8aff00"/><rect x="227.4" y="516.5" width="3" height="3" fill="#a3ff00"/><rect x="230.4" y="516.5" width="3" height="3" fill="#afff00"/><rect x="233.4" y="516.5" width="3" height="3" fill="#afff00"/><rect x="236.4" y="516.5" width="3" height="3" fill="#a3ff00"/><rect x="239.4" y="516.5" width="3" height="3" fill="#8aff00"/><rect x="242.4" y="516.5" width="3" height="3" fill="#6bff00"/><rect x="245.4" y="516.5" width="3" height="3" fill="#4aff00"/><rect x="248.4" y="516.5" width="3" height="3" fill="#2fff00"/><rect x="251.4" y="516.5" width="3" height="3" fill="#14ff00"/><rect x="254.4" y="516.5" width="3" height="3" fill="#00ff1d"/><rect x="257.4" y="516.5" width="3" height="3" fill="#00fe90"/><rect x="260.4" y="516.5" width="3" height="3" fill="#00efff"/><rect x="263.4" y="516.5" width="3" height="3" fill="#007df0"/><rect x="266.4" y="516.5" width="3" height="3" fill="#002286"/><rect x="197.4" y="519.5" width="3" height="3" fill="#000d56"/><rect x="200.4" y="519.5" width="3" height="3" fill="#0056cc"/><rect x="203.4" y="519.5" width="3" height="3" fill="#00c0ff"/><rect x="206.4" y="519.5" width="3" height="3" fill="#00fcc1"/><rect x="209.4" y="519.5" width="3" height="3" fill="#00ff4c"/><rect x="212.4" y="519.5" width="3" height="3" fill="#08ff00"/><rect x="215.4" y="519.5" width="3" height="3" fill="#23ff00"/><rect x="218.4" y="519.5" width="3" height="3" fill="#3dff00"/><rect x="221.4" y="519.5" width="3" height="3" fill="#5bff00"/><rect x="224.4" y="519.5" width="3" height="3" fill="#7aff00"/><rect x="227.4" y="519.5" width="3" height="3" fill="#98ff00"/><rect x="230.4" y="519.5" width="3" height="3" fill="#a8ff00"/><rect x="233.4" y="519.5" width="3" height="3" fill="#a8ff00"/><rect x="236.4" y="519.5" width="3" height="3" fill="#98ff00"/><rect x="239.4" y="519.5" width="3" height="3" fill="#7aff00"/><rect x="242.4" y="519.5" width="3" height="3" fill="#5bff00"/><rect x="245.4" y="519.5" width="3" height="3" fill="#3dff00"/><rect x="248.4" y="519.5" width="3" height="3" fill="#23ff00"/><rect x="251.4" y="519.5" width="3" height="3" fill="#08ff00"/><rect x="254.4" y="519.5" width="3" height="3" fill="#00ff4c"/><rect x="257.4" y="519.5" width="3" height="3" fill="#00fcc1"/><rect x="260.4" y="519.5" width="3" height="3" fill="#00c0ff"/><rect x="263.4" y="519.5" width="3" height="3" fill="#0056cc"/><rect x="266.4" y="519.5" width="3" height="3" fill="#000d56"/><rect x="200.4" y="522.5" width="3" height="3" fill="#0031a1"/><rect x="203.4" y="522.5" width="3" height="3" fill="#0090ff"/><rect x="206.4" y="522.5" width="3" height="3" fill="#00faf5"/><rect x="209.4" y="522.5" width="3" height="3" fill="#00ff7e"/><rect x="212.4" y="522.5" width="3" height="3" fill="#00ff0e"/><rect x="215.4" y="522.5" width="3" height="3" fill="#17ff00"/><rect x="218.4" y="522.5" width="3" height="3" fill="#31ff00"/><rect x="221.4" y="522.5" width="3" height="3" fill="#4bff00"/><rect x="224.4" y="522.5" width="3" height="3" fill="#6aff00"/><rect x="227.4" y="522.5" width="3" height="3" fill="#87ff00"/><rect x="230.4" y="522.5" width="3" height="3" fill="#a0ff00"/><rect x="233.4" y="522.5" width="3" height="3" fill="#a0ff00"/><rect x="236.4" y="522.5" width="3" height="3" fill="#87ff00"/><rect x="239.4" y="522.5" width="3" height="3" fill="#6aff00"/><rect x="242.4" y="522.5" width="3" height="3" fill="#4bff00"/><rect x="245.4" y="522.5" width="3" height="3" fill="#31ff00"/><rect x="248.4" y="522.5" width="3" height="3" fill="#17ff00"/><rect x="251.4" y="522.5" width="3" height="3" fill="#00ff0e"/><rect x="254.4" y="522.5" width="3" height="3" fill="#00ff7e"/><rect x="257.4" y="522.5" width="3" height="3" fill="#00faf5"/><rect x="260.4" y="522.5" width="3" height="3" fill="#0090ff"/><rect x="263.4" y="522.5" width="3" height="3" fill="#0031a1"/><rect x="200.4" y="525.5" width="3" height="3" fill="#00136b"/><rect x="203.4" y="525.5" width="3" height="3" fill="#0065db"/><rect x="206.4" y="525.5" width="3" height="3" fill="#00d1ff"/><rect x="209.4" y="525.5" width="3" height="3" fill="#00fdb3"/><rect x="212.4" y="525.5" width="3" height="3" fill="#00ff41"/><rect x="215.4" y="525.5" width="3" height="3" fill="#0aff00"/><rect x="218.4" y="525.5" width="3" height="3" fill="#24ff00"/><rect x="221.4" y="525.5" width="3" height="3" fill="#3dff00"/><rect x="224.4" y="525.5" width="3" height="3" fill="#59ff00"/><rect x="227.4" y="525.5" width="3" height="3" fill="#76ff00"/><rect x="230.4" y="525.5" width="3" height="3" fill="#90ff00"/><rect x="233.4" y="525.5" width="3" height="3" fill="#90ff00"/><rect x="236.4" y="525.5" width="3" height="3" fill="#76ff00"/><rect x="239.4" y="525.5" width="3" height="3" fill="#59ff00"/><rect x="242.4" y="525.5" width="3" height="3" fill="#3dff00"/><rect x="245.4" y="525.5" width="3" height="3" fill="#24ff00"/><rect x="248.4" y="525.5" width="3" height="3" fill="#0aff00"/><rect x="251.4" y="525.5" width="3" height="3" fill="#00ff41"/><rect x="254.4" y="525.5" width="3" height="3" fill="#00fdb3"/><rect x="257.4" y="525.5" width="3" height="3" fill="#00d1ff"/><rect x="260.4" y="525.5" width="3" height="3" fill="#0065db"/><rect x="263.4" y="525.5" width="3" height="3" fill="#00136b"/><rect x="203.4" y="528.5" width="3" height="3" fill="#003bb2"/><rect x="206.4" y="528.5" width="3" height="3" fill="#009dff"/><rect x="209.4" y="528.5" width="3" height="3" fill="#00faea"/><rect x="212.4" y="528.5" width="3" height="3" fill="#00ff76"/><rect x="215.4" y="528.5" width="3" height="3" fill="#00ff09"/><rect x="218.4" y="528.5" width="3" height="3" fill="#17ff00"/><rect x="221.4" y="528.5" width="3" height="3" fill="#30ff00"/><rect x="224.4" y="528.5" width="3" height="3" fill="#49ff00"/><rect x="227.4" y="528.5" width="3" height="3" fill="#65ff00"/><rect x="230.4" y="528.5" width="3" height="3" fill="#7eff00"/><rect x="233.4" y="528.5" width="3" height="3" fill="#7eff00"/><rect x="236.4" y="528.5" width="3" height="3" fill="#65ff00"/><rect x="239.4" y="528.5" width="3" height="3" fill="#49ff00"/><rect x="242.4" y="528.5" width="3" height="3" fill="#30ff00"/><rect x="245.4" y="528.5" width="3" height="3" fill="#17ff00"/><rect x="248.4" y="528.5" width="3" height="3" fill="#00ff09"/><rect x="251.4" y="528.5" width="3" height="3" fill="#00ff76"/><rect x="254.4" y="528.5" width="3" height="3" fill="#00faea"/><rect x="257.4" y="528.5" width="3" height="3" fill="#009dff"/><rect x="260.4" y="528.5" width="3" height="3" fill="#003bb2"/><rect x="203.4" y="531.5" width="3" height="3" fill="#001a78"/><rect x="206.4" y="531.5" width="3" height="3" fill="#006ee3"/><rect x="209.4" y="531.5" width="3" height="3" fill="#00d8ff"/><rect x="212.4" y="531.5" width="3" height="3" fill="#00fdae"/><rect x="215.4" y="531.5" width="3" height="3" fill="#00ff40"/><rect x="218.4" y="531.5" width="3" height="3" fill="#09ff00"/><rect x="221.4" y="531.5" width="3" height="3" fill="#22ff00"/><rect x="224.4" y="531.5" width="3" height="3" fill="#3aff00"/><rect x="227.4" y="531.5" width="3" height="3" fill="#53ff00"/><rect x="230.4" y="531.5" width="3" height="3" fill="#6cff00"/><rect x="233.4" y="531.5" width="3" height="3" fill="#6cff00"/><rect x="236.4" y="531.5" width="3" height="3" fill="#53ff00"/><rect x="239.4" y="531.5" width="3" height="3" fill="#3aff00"/><rect x="242.4" y="531.5" width="3" height="3" fill="#22ff00"/><rect x="245.4" y="531.5" width="3" height="3" fill="#09ff00"/><rect x="248.4" y="531.5" width="3" height="3" fill="#00ff40"/><rect x="251.4" y="531.5" width="3" height="3" fill="#00fdae"/><rect x="254.4" y="531.5" width="3" height="3" fill="#00d8ff"/><rect x="257.4" y="531.5" width="3" height="3" fill="#006ee3"/><rect x="260.4" y="531.5" width="3" height="3" fill="#001a78"/><rect x="203.4" y="534.5" width="3" height="3" fill="#000740"/><rect x="206.4" y="534.5" width="3" height="3" fill="#0040b8"/><rect x="209.4" y="534.5" width="3" height="3" fill="#00a2ff"/><rect x="212.4" y="534.5" width="3" height="3" fill="#00fae8"/><rect x="215.4" y="534.5" width="3" height="3" fill="#00ff77"/><rect x="218.4" y="534.5" width="3" height="3" fill="#00ff0e"/><rect x="221.4" y="534.5" width="3" height="3" fill="#14ff00"/><rect x="224.4" y="534.5" width="3" height="3" fill="#2cff00"/><rect x="227.4" y="534.5" width="3" height="3" fill="#43ff00"/><rect x="230.4" y="534.5" width="3" height="3" fill="#5aff00"/><rect x="233.4" y="534.5" width="3" height="3" fill="#5aff00"/><rect x="236.4" y="534.5" width="3" height="3" fill="#43ff00"/><rect x="239.4" y="534.5" width="3" height="3" fill="#2cff00"/><rect x="242.4" y="534.5" width="3" height="3" fill="#14ff00"/><rect x="245.4" y="534.5" width="3" height="3" fill="#00ff0e"/><rect x="248.4" y="534.5" width="3" height="3" fill="#00ff77"/><rect x="251.4" y="534.5" width="3" height="3" fill="#00fae8"/><rect x="254.4" y="534.5" width="3" height="3" fill="#00a2ff"/><rect x="257.4" y="534.5" width="3" height="3" fill="#0040b8"/><rect x="260.4" y="534.5" width="3" height="3" fill="#000740"/><rect x="206.4" y="537.5" width="3" height="3" fill="#001d7e"/><rect x="209.4" y="537.5" width="3" height="3" fill="#0070e5"/><rect x="212.4" y="537.5" width="3" height="3" fill="#00d8ff"/><rect x="215.4" y="537.5" width="3" height="3" fill="#00fdb2"/><rect x="218.4" y="537.5" width="3" height="3" fill="#00ff47"/><rect x="221.4" y="537.5" width="3" height="3" fill="#07ff00"/><rect x="224.4" y="537.5" width="3" height="3" fill="#1eff00"/><rect x="227.4" y="537.5" width="3" height="3" fill="#34ff00"/><rect x="230.4" y="537.5" width="3" height="3" fill="#48ff00"/><rect x="233.4" y="537.5" width="3" height="3" fill="#48ff00"/><rect x="236.4" y="537.5" width="3" height="3" fill="#34ff00"/><rect x="239.4" y="537.5" width="3" height="3" fill="#1eff00"/><rect x="242.4" y="537.5" width="3" height="3" fill="#07ff00"/><rect x="245.4" y="537.5" width="3" height="3" fill="#00ff47"/><rect x="248.4" y="537.5" width="3" height="3" fill="#00fdb2"/><rect x="251.4" y="537.5" width="3" height="3" fill="#00d8ff"/><rect x="254.4" y="537.5" width="3" height="3" fill="#0070e5"/><rect x="257.4" y="537.5" width="3" height="3" fill="#001d7e"/><rect x="206.4" y="540.5" width="3" height="3" fill="#000843"/><rect x="209.4" y="540.5" width="3" height="3" fill="#0041b9"/><rect x="212.4" y="540.5" width="3" height="3" fill="#009fff"/><rect x="215.4" y="540.5" width="3" height="3" fill="#00faed"/><rect x="218.4" y="540.5" width="3" height="3" fill="#00ff81"/><rect x="221.4" y="540.5" width="3" height="3" fill="#00ff1c"/><rect x="224.4" y="540.5" width="3" height="3" fill="#10ff00"/><rect x="227.4" y="540.5" width="3" height="3" fill="#26ff00"/><rect x="230.4" y="540.5" width="3" height="3" fill="#39ff00"/><rect x="233.4" y="540.5" width="3" height="3" fill="#39ff00"/><rect x="236.4" y="540.5" width="3" height="3" fill="#26ff00"/><rect x="239.4" y="540.5" width="3" height="3" fill="#10ff00"/><rect x="242.4" y="540.5" width="3" height="3" fill="#00ff1c"/><rect x="245.4" y="540.5" width="3" height="3" fill="#00ff81"/><rect x="248.4" y="540.5" width="3" height="3" fill="#00faed"/><rect x="251.4" y="540.5" width="3" height="3" fill="#009fff"/><rect x="254.4" y="540.5" width="3" height="3" fill="#0041b9"/><rect x="257.4" y="540.5" width="3" height="3" fill="#000843"/><rect x="209.4" y="543.5" width="3" height="3" fill="#001c7c"/><rect x="212.4" y="543.5" width="3" height="3" fill="#006ce1"/><rect x="215.4" y="543.5" width="3" height="3" fill="#00d0ff"/><rect x="218.4" y="543.5" width="3" height="3" fill="#00fcbd"/><rect x="221.4" y="543.5" width="3" height="3" fill="#00ff57"/><rect x="224.4" y="543.5" width="3" height="3" fill="#02ff00"/><rect x="227.4" y="543.5" width="3" height="3" fill="#17ff00"/><rect x="230.4" y="543.5" width="3" height="3" fill="#2aff00"/><rect x="233.4" y="543.5" width="3" height="3" fill="#2aff00"/><rect x="236.4" y="543.5" width="3" height="3" fill="#17ff00"/><rect x="239.4" y="543.5" width="3" height="3" fill="#02ff00"/><rect x="242.4" y="543.5" width="3" height="3" fill="#00ff57"/><rect x="245.4" y="543.5" width="3" height="3" fill="#00fcbd"/><rect x="248.4" y="543.5" width="3" height="3" fill="#00d0ff"/><rect x="251.4" y="543.5" width="3" height="3" fill="#006ce1"/><rect x="254.4" y="543.5" width="3" height="3" fill="#001c7c"/><rect x="209.4" y="546.5" width="3" height="3" fill="#000740"/><rect x="212.4" y="546.5" width="3" height="3" fill="#003cb4"/><rect x="215.4" y="546.5" width="3" height="3" fill="#0096ff"/><rect x="218.4" y="546.5" width="3" height="3" fill="#00fafb"/><rect x="221.4" y="546.5" width="3" height="3" fill="#00fe92"/><rect x="224.4" y="546.5" width="3" height="3" fill="#00ff33"/><rect x="227.4" y="546.5" width="3" height="3" fill="#09ff00"/><rect x="230.4" y="546.5" width="3" height="3" fill="#1cff00"/><rect x="233.4" y="546.5" width="3" height="3" fill="#1cff00"/><rect x="236.4" y="546.5" width="3" height="3" fill="#09ff00"/><rect x="239.4" y="546.5" width="3" height="3" fill="#00ff33"/><rect x="242.4" y="546.5" width="3" height="3" fill="#00fe92"/><rect x="245.4" y="546.5" width="3" height="3" fill="#00fafb"/><rect x="248.4" y="546.5" width="3" height="3" fill="#0096ff"/><rect x="251.4" y="546.5" width="3" height="3" fill="#003cb4"/><rect x="254.4" y="546.5" width="3" height="3" fill="#000740"/><rect x="212.4" y="549.5" width="3" height="3" fill="#001774"/><rect x="215.4" y="549.5" width="3" height="3" fill="#0063d9"/><rect x="218.4" y="549.5" width="3" height="3" fill="#00c2ff"/><rect x="221.4" y="549.5" width="3" height="3" fill="#00fbd1"/><rect x="224.4" y="549.5" width="3" height="3" fill="#00ff6f"/><rect x="227.4" y="549.5" width="3" height="3" fill="#00ff16"/><rect x="230.4" y="549.5" width="3" height="3" fill="#0dff00"/><rect x="233.4" y="549.5" width="3" height="3" fill="#0dff00"/><rect x="236.4" y="549.5" width="3" height="3" fill="#00ff16"/><rect x="239.4" y="549.5" width="3" height="3" fill="#00ff6f"/><rect x="242.4" y="549.5" width="3" height="3" fill="#00fbd1"/><rect x="245.4" y="549.5" width="3" height="3" fill="#00c2ff"/><rect x="248.4" y="549.5" width="3" height="3" fill="#0063d9"/><rect x="251.4" y="549.5" width="3" height="3" fill="#001774"/><rect x="215.4" y="552.5" width="3" height="3" fill="#0034a6"/><rect x="218.4" y="552.5" width="3" height="3" fill="#0087fa"/><rect x="221.4" y="552.5" width="3" height="3" fill="#00e9ff"/><rect x="224.4" y="552.5" width="3" height="3" fill="#00fdad"/><rect x="227.4" y="552.5" width="3" height="3" fill="#00ff53"/><rect x="230.4" y="552.5" width="3" height="3" fill="#00ff05"/><rect x="233.4" y="552.5" width="3" height="3" fill="#00ff05"/><rect x="236.4" y="552.5" width="3" height="3" fill="#00ff53"/><rect x="239.4" y="552.5" width="3" height="3" fill="#00fdad"/><rect x="242.4" y="552.5" width="3" height="3" fill="#00e9ff"/><rect x="245.4" y="552.5" width="3" height="3" fill="#0087fa"/><rect x="248.4" y="552.5" width="3" height="3" fill="#0034a6"/><rect x="215.4" y="555.5" width="3" height="3" fill="#001165"/><rect x="218.4" y="555.5" width="3" height="3" fill="#0055cb"/><rect x="221.4" y="555.5" width="3" height="3" fill="#00acff"/><rect x="224.4" y="555.5" width="3" height="3" fill="#00faed"/><rect x="227.4" y="555.5" width="3" height="3" fill="#00fe91"/><rect x="230.4" y="555.5" width="3" height="3" fill="#00ff43"/><rect x="233.4" y="555.5" width="3" height="3" fill="#00ff43"/><rect x="236.4" y="555.5" width="3" height="3" fill="#00fe91"/><rect x="239.4" y="555.5" width="3" height="3" fill="#00faed"/><rect x="242.4" y="555.5" width="3" height="3" fill="#00acff"/><rect x="245.4" y="555.5" width="3" height="3" fill="#0055cb"/><rect x="248.4" y="555.5" width="3" height="3" fill="#001165"/><rect x="218.4" y="558.5" width="3" height="3" fill="#002892"/><rect x="221.4" y="558.5" width="3" height="3" fill="#0074e8"/><rect x="224.4" y="558.5" width="3" height="3" fill="#00cdff"/><rect x="227.4" y="558.5" width="3" height="3" fill="#00fbd2"/><rect x="230.4" y="558.5" width="3" height="3" fill="#00ff81"/><rect x="233.4" y="558.5" width="3" height="3" fill="#00ff81"/><rect x="236.4" y="558.5" width="3" height="3" fill="#00fbd2"/><rect x="239.4" y="558.5" width="3" height="3" fill="#00cdff"/><rect x="242.4" y="558.5" width="3" height="3" fill="#0074e8"/><rect x="245.4" y="558.5" width="3" height="3" fill="#002892"/><rect x="218.4" y="561.5" width="3" height="3" fill="#000b50"/><rect x="221.4" y="561.5" width="3" height="3" fill="#0040b8"/><rect x="224.4" y="561.5" width="3" height="3" fill="#008fff"/><rect x="227.4" y="561.5" width="3" height="3" fill="#00e6ff"/><rect x="230.4" y="561.5" width="3" height="3" fill="#00fcc3"/><rect x="233.4" y="561.5" width="3" height="3" fill="#00fcc3"/><rect x="236.4" y="561.5" width="3" height="3" fill="#00e6ff"/><rect x="239.4" y="561.5" width="3" height="3" fill="#008fff"/><rect x="242.4" y="561.5" width="3" height="3" fill="#0040b8"/><rect x="245.4" y="561.5" width="3" height="3" fill="#000b50"/><rect x="221.4" y="564.5" width="3" height="3" fill="#001876"/><rect x="224.4" y="564.5" width="3" height="3" fill="#005ad0"/><rect x="227.4" y="564.5" width="3" height="3" fill="#00a7ff"/><rect x="230.4" y="564.5" width="3" height="3" fill="#00f4ff"/><rect x="233.4" y="564.5" width="3" height="3" fill="#00f4ff"/><rect x="236.4" y="564.5" width="3" height="3" fill="#00a7ff"/><rect x="239.4" y="564.5" width="3" height="3" fill="#005ad0"/><rect x="242.4" y="564.5" width="3" height="3" fill="#001876"/><rect x="224.4" y="567.5" width="3" height="3" fill="#002b97"/><rect x="227.4" y="567.5" width="3" height="3" fill="#006ee3"/><rect x="230.4" y="567.5" width="3" height="3" fill="#00b5ff"/><rect x="233.4" y="567.5" width="3" height="3" fill="#00b5ff"/><rect x="236.4" y="567.5" width="3" height="3" fill="#006ee3"/><rect x="239.4" y="567.5" width="3" height="3" fill="#002b97"/><rect x="224.4" y="570.5" width="3" height="3" fill="#000c53"/><rect x="227.4" y="570.5" width="3" height="3" fill="#003ab0"/><rect x="230.4" y="570.5" width="3" height="3" fill="#0079ed"/><rect x="233.4" y="570.5" width="3" height="3" fill="#0079ed"/><rect x="236.4" y="570.5" width="3" height="3" fill="#003ab0"/><rect x="239.4" y="570.5" width="3" height="3" fill="#000c53"/><rect x="227.4" y="573.5" width="3" height="3" fill="#00136b"/><rect x="230.4" y="573.5" width="3" height="3" fill="#0043bb"/><rect x="233.4" y="573.5" width="3" height="3" fill="#0043bb"/><rect x="236.4" y="573.5" width="3" height="3" fill="#00136b"/><rect x="230.4" y="576.5" width="3" height="3" fill="#001978"/><rect x="233.4" y="576.5" width="3" height="3" fill="#001978"/></g>
<rect x="232" y="506" width="3" height="3" fill="#ff0000"/>
<path d="M77.7,664 V589 H153.7" stroke="#c2c2f6" stroke-width="1.7" fill="none"/>
<path d="M142.7,583.5 L153.7,589 L143.7,595" stroke="#c2c2f6" stroke-width="1.2" fill="none"/>
<path d="M72.2,653 L77.7,664 L83.7,654" stroke="#c2c2f6" stroke-width="1.2" fill="none"/>
<text x="108.7" y="578.5" font-family="Liberation Serif" font-style="italic" font-size="28" fill="#c2c2f6">τ</text>
<text x="55.7" y="626.5" font-family="Liberation Serif" font-style="italic" font-size="27" fill="#c2c2f6">ν</text>
<rect x="485" y="397" width="29" height="312" fill="url(#cbar)"/>
<rect x="514" y="138" width="374" height="571" fill="#000000"/>
<g shape-rendering="crispEdges"><rect x="684.4" y="445.9" width="3" height="3" fill="#00000c"/><rect x="687.4" y="445.9" width="3" height="3" fill="#000110"/><rect x="690.4" y="445.9" width="3" height="3" fill="#000113"/><rect x="693.4" y="445.9" width="3" height="3" fill="#000115"/><rect x="696.4" y="445.9" width="3" height="3" fill="#000115"/><rect x="699.4" y="445.9" width="3" height="3" fill="#000113"/><rect x="702.4" y="445.9" width="3" height="3" fill="#000110"/><rect x="705.4" y="445.9" width="3" height="3" fill="#00000c"/><rect x="678.4" y="448.9" width="3" height="3" fill="#00000c"/><rect x="681.4" y="448.9" width="3" height="3" fill="#000112"/><rect x="684.4" y="448.9" width="3" height="3" fill="#000118"/><rect x="687.4" y="448.9" width="3" height="3" fill="#00021c"/><rect x="690.4" y="448.9" width="3" height="3" fill="#00021f"/><rect x="693.4" y="448.9" width="3" height="3" fill="#000221"/><rect x="696.4" y="448.9" width="3" height="3" fill="#000221"/><rect x="699.4" y="448.9" width="3" height="3" fill="#00021f"/><rect x="702.4" y="448.9" width="3" height="3" fill="#00021c"/><rect x="705.4" y="448.9" width="3" height="3" fill="#000118"/><rect x="708.4" y="448.9" width="3" height="3" fill="#000112"/><rect x="711.4" y="448.9" width="3" height="3" fill="#00000c"/><rect x="675.4" y="451.9" width="3" height="3" fill="#00000f"/><rect x="678.4" y="451.9" width="3" height="3" fill="#000117"/><rect x="681.4" y="451.9" width="3" height="3" fill="#00021e"/><rect x="684.4" y="451.9" width="3" height="3" fill="#000323"/><rect x="687.4" y="451.9" width="3" height="3" fill="#000328"/><rect x="690.4" y="451.9" width="3" height="3" fill="#00042b"/><rect x="693.4" y="451.9" width="3" height="3" fill="#00042d"/><rect x="696.4" y="451.9" width="3" height="3" fill="#00042d"/><rect x="699.4" y="451.9" width="3" height="3" fill="#00042b"/><rect x="702.4" y="451.9" width="3" height="3" fill="#000328"/><rect x="705.4" y="451.9" width="3" height="3" fill="#000323"/><rect x="708.4" y="451.9" width="3" height="3" fill="#00021e"/><rect x="711.4" y="451.9" width="3" height="3" fill="#000117"/><rect x="714.4" y="451.9" width="3" height="3" fill="#00000f"/><rect x="672.4" y="454.9" width="3" height="3" fill="#000111"/><rect x="675.4" y="454.9" width="3" height="3" fill="#00021a"/><rect x="678.4" y="454.9" width="3" height="3" fill="#000322"/><rect x="681.4" y="454.9" width="3" height="3" fill="#000329"/><rect x="684.4" y="454.9" width="3" height="3" fill="#00042f"/><rect x="687.4" y="454.9" width="3" height="3" fill="#000534"/><rect x="690.4" y="454.9" width="3" height="3" fill="#000537"/><rect x="693.4" y="454.9" width="3" height="3" fill="#000539"/><rect x="696.4" y="454.9" width="3" height="3" fill="#000539"/><rect x="699.4" y="454.9" width="3" height="3" fill="#000537"/><rect x="702.4" y="454.9" width="3" height="3" fill="#000534"/><rect x="705.4" y="454.9" width="3" height="3" fill="#00042f"/><rect x="708.4" y="454.9" width="3" height="3" fill="#000329"/><rect x="711.4" y="454.9" width="3" height="3" fill="#000322"/><rect x="714.4" y="454.9" width="3" height="3" fill="#00021a"/><rect x="717.4" y="454.9" width="3" height="3" fill="#000111"/><rect x="669.4" y="457.9" width="3" height="3" fill="#000112"/><rect x="672.4" y="457.9" width="3" height="3" fill="#00021c"/><rect x="675.4" y="457.9" width="3" height="3" fill="#000325"/><rect x="678.4" y="457.9" width="3" height="3" fill="#00042d"/><rect x="681.4" y="457.9" width="3" height="3" fill="#000534"/><rect x="684.4" y="457.9" width="3" height="3" fill="#00053a"/><rect x="687.4" y="457.9" width="3" height="3" fill="#000e5a"/><rect x="690.4" y="457.9" width="3" height="3" fill="#001977"/><rect x="693.4" y="457.9" width="3" height="3" fill="#002388"/><rect x="696.4" y="457.9" width="3" height="3" fill="#002388"/><rect x="699.4" y="457.9" width="3" height="3" fill="#001977"/><rect x="702.4" y="457.9" width="3" height="3" fill="#000e5a"/><rect x="705.4" y="457.9" width="3" height="3" fill="#00053a"/><rect x="708.4" y="457.9" width="3" height="3" fill="#000534"/><rect x="711.4" y="457.9" width="3" height="3" fill="#00042d"/><rect x="714.4" y="457.9" width="3" height="3" fill="#000325"/><rect x="717.4" y="457.9" width="3" height="3" fill="#00021c"/><rect x="720.4" y="457.9" width="3" height="3" fill="#000112"/><rect x="666.4" y="460.9" width="3" height="3" fill="#000111"/><rect x="669.4" y="460.9" width="3" height="3" fill="#00021c"/><rect x="672.4" y="460.9" width="3" height="3" fill="#000326"/><rect x="675.4" y="460.9" width="3" height="3" fill="#00042f"/><rect x="678.4" y="460.9" width="3" height="3" fill="#000538"/><rect x="681.4" y="460.9" width="3" height="3" fill="#000e5b"/><rect x="684.4" y="460.9" width="3" height="3" fill="#002790"/><rect x="687.4" y="460.9" width="3" height="3" fill="#0042b9"/><rect x="690.4" y="460.9" width="3" height="3" fill="#005ad0"/><rect x="693.4" y="460.9" width="3" height="3" fill="#0068dd"/><rect x="696.4" y="460.9" width="3" height="3" fill="#0068dd"/><rect x="699.4" y="460.9" width="3" height="3" fill="#005ad0"/><rect x="702.4" y="460.9" width="3" height="3" fill="#0042b9"/><rect x="705.4" y="460.9" width="3" height="3" fill="#002790"/><rect x="708.4" y="460.9" width="3" height="3" fill="#000e5b"/><rect x="711.4" y="460.9" width="3" height="3" fill="#000538"/><rect x="714.4" y="460.9" width="3" height="3" fill="#00042f"/><rect x="717.4" y="460.9" width="3" height="3" fill="#000326"/><rect x="720.4" y="460.9" width="3" height="3" fill="#00021c"/><rect x="723.4" y="460.9" width="3" height="3" fill="#000111"/><rect x="663.4" y="463.9" width="3" height="3" fill="#00000e"/><rect x="666.4" y="463.9" width="3" height="3" fill="#00021a"/><rect x="669.4" y="463.9" width="3" height="3" fill="#000325"/><rect x="672.4" y="463.9" width="3" height="3" fill="#000430"/><rect x="675.4" y="463.9" width="3" height="3" fill="#00053a"/><rect x="678.4" y="463.9" width="3" height="3" fill="#001774"/><rect x="681.4" y="463.9" width="3" height="3" fill="#003eb6"/><rect x="684.4" y="463.9" width="3" height="3" fill="#0069df"/><rect x="687.4" y="463.9" width="3" height="3" fill="#008dff"/><rect x="690.4" y="463.9" width="3" height="3" fill="#00abff"/><rect x="693.4" y="463.9" width="3" height="3" fill="#00bcff"/><rect x="696.4" y="463.9" width="3" height="3" fill="#00bcff"/><rect x="699.4" y="463.9" width="3" height="3" fill="#00abff"/><rect x="702.4" y="463.9" width="3" height="3" fill="#008dff"/><rect x="705.4" y="463.9" width="3" height="3" fill="#0069df"/><rect x="708.4" y="463.9" width="3" height="3" fill="#003eb6"/><rect x="711.4" y="463.9" width="3" height="3" fill="#001774"/><rect x="714.4" y="463.9" width="3" height="3" fill="#00053a"/><rect x="717.4" y="463.9" width="3" height="3" fill="#000430"/><rect x="720.4" y="463.9" width="3" height="3" fill="#000325"/><rect x="723.4" y="463.9" width="3" height="3" fill="#00021a"/><rect x="726.4" y="463.9" width="3" height="3" fill="#00000e"/><rect x="660.4" y="466.9" width="3" height="3" fill="#00000a"/><rect x="663.4" y="466.9" width="3" height="3" fill="#000117"/><rect x="666.4" y="466.9" width="3" height="3" fill="#000323"/><rect x="669.4" y="466.9" width="3" height="3" fill="#00042f"/><rect x="672.4" y="466.9" width="3" height="3" fill="#00053a"/><rect x="675.4" y="466.9" width="3" height="3" fill="#001d7f"/><rect x="678.4" y="466.9" width="3" height="3" fill="#004fc6"/><rect x="681.4" y="466.9" width="3" height="3" fill="#0084f8"/><rect x="684.4" y="466.9" width="3" height="3" fill="#00b9ff"/><rect x="687.4" y="466.9" width="3" height="3" fill="#00e4ff"/><rect x="690.4" y="466.9" width="3" height="3" fill="#00faf3"/><rect x="693.4" y="466.9" width="3" height="3" fill="#00fbe0"/><rect x="696.4" y="466.9" width="3" height="3" fill="#00fbe0"/><rect x="699.4" y="466.9" width="3" height="3" fill="#00faf3"/><rect x="702.4" y="466.9" width="3" height="3" fill="#00e4ff"/><rect x="705.4" y="466.9" width="3" height="3" fill="#00b9ff"/><rect x="708.4" y="466.9" width="3" height="3" fill="#0084f8"/><rect x="711.4" y="466.9" width="3" height="3" fill="#004fc6"/><rect x="714.4" y="466.9" width="3" height="3" fill="#001d7f"/><rect x="717.4" y="466.9" width="3" height="3" fill="#00053a"/><rect x="720.4" y="466.9" width="3" height="3" fill="#00042f"/><rect x="723.4" y="466.9" width="3" height="3" fill="#000323"/><rect x="726.4" y="466.9" width="3" height="3" fill="#000117"/><rect x="729.4" y="466.9" width="3" height="3" fill="#00000a"/><rect x="660.4" y="469.9" width="3" height="3" fill="#000112"/><rect x="663.4" y="469.9" width="3" height="3" fill="#00021f"/><rect x="666.4" y="469.9" width="3" height="3" fill="#00042b"/><rect x="669.4" y="469.9" width="3" height="3" fill="#000538"/><rect x="672.4" y="469.9" width="3" height="3" fill="#001a79"/><rect x="675.4" y="469.9" width="3" height="3" fill="#0053ca"/><rect x="678.4" y="469.9" width="3" height="3" fill="#0093ff"/><rect x="681.4" y="469.9" width="3" height="3" fill="#00d5ff"/><rect x="684.4" y="469.9" width="3" height="3" fill="#00fae9"/><rect x="687.4" y="469.9" width="3" height="3" fill="#00fdb9"/><rect x="690.4" y="469.9" width="3" height="3" fill="#00fe96"/><rect x="693.4" y="469.9" width="3" height="3" fill="#00ff82"/><rect x="696.4" y="469.9" width="3" height="3" fill="#00ff82"/><rect x="699.4" y="469.9" width="3" height="3" fill="#00fe96"/><rect x="702.4" y="469.9" width="3" height="3" fill="#00fdb9"/><rect x="705.4" y="469.9" width="3" height="3" fill="#00fae9"/><rect x="708.4" y="469.9" width="3" height="3" fill="#00d5ff"/><rect x="711.4" y="469.9" width="3" height="3" fill="#0093ff"/><rect x="714.4" y="469.9" width="3" height="3" fill="#0053ca"/><rect x="717.4" y="469.9" width="3" height="3" fill="#001a79"/><rect x="720.4" y="469.9" width="3" height="3" fill="#000538"/><rect x="723.4" y="469.9" width="3" height="3" fill="#00042b"/><rect x="726.4" y="469.9" width="3" height="3" fill="#00021f"/><rect x="729.4" y="469.9" width="3" height="3" fill="#000112"/><rect x="657.4" y="472.9" width="3" height="3" fill="#00000b"/><rect x="660.4" y="472.9" width="3" height="3" fill="#000219"/><rect x="663.4" y="472.9" width="3" height="3" fill="#000327"/><rect x="666.4" y="472.9" width="3" height="3" fill="#000534"/><rect x="669.4" y="472.9" width="3" height="3" fill="#001062"/><rect x="672.4" y="472.9" width="3" height="3" fill="#004ac1"/><rect x="675.4" y="472.9" width="3" height="3" fill="#0092ff"/><rect x="678.4" y="472.9" width="3" height="3" fill="#00e0ff"/><rect x="681.4" y="472.9" width="3" height="3" fill="#00fcd0"/><rect x="684.4" y="472.9" width="3" height="3" fill="#00fe91"/><rect x="687.4" y="472.9" width="3" height="3" fill="#00ff61"/><rect x="690.4" y="472.9" width="3" height="3" fill="#00ff3d"/><rect x="693.4" y="472.9" width="3" height="3" fill="#00ff28"/><rect x="696.4" y="472.9" width="3" height="3" fill="#00ff28"/><rect x="699.4" y="472.9" width="3" height="3" fill="#00ff3d"/><rect x="702.4" y="472.9" width="3" height="3" fill="#00ff61"/><rect x="705.4" y="472.9" width="3" height="3" fill="#00fe91"/><rect x="708.4" y="472.9" width="3" height="3" fill="#00fcd0"/><rect x="711.4" y="472.9" width="3" height="3" fill="#00e0ff"/><rect x="714.4" y="472.9" width="3" height="3" fill="#0092ff"/><rect x="717.4" y="472.9" width="3" height="3" fill="#004ac1"/><rect x="720.4" y="472.9" width="3" height="3" fill="#001062"/><rect x="723.4" y="472.9" width="3" height="3" fill="#000534"/><rect x="726.4" y="472.9" width="3" height="3" fill="#000327"/><rect x="729.4" y="472.9" width="3" height="3" fill="#000219"/><rect x="732.4" y="472.9" width="3" height="3" fill="#00000b"/><rect x="657.4" y="475.9" width="3" height="3" fill="#000112"/><rect x="660.4" y="475.9" width="3" height="3" fill="#000220"/><rect x="663.4" y="475.9" width="3" height="3" fill="#00042e"/><rect x="666.4" y="475.9" width="3" height="3" fill="#00063d"/><rect x="669.4" y="475.9" width="3" height="3" fill="#0035a9"/><rect x="672.4" y="475.9" width="3" height="3" fill="#0083f6"/><rect x="675.4" y="475.9" width="3" height="3" fill="#00daff"/><rect x="678.4" y="475.9" width="3" height="3" fill="#00fcca"/><rect x="681.4" y="475.9" width="3" height="3" fill="#00ff7e"/><rect x="684.4" y="475.9" width="3" height="3" fill="#00ff3f"/><rect x="687.4" y="475.9" width="3" height="3" fill="#00ff0b"/><rect x="690.4" y="475.9" width="3" height="3" fill="#06ff00"/><rect x="693.4" y="475.9" width="3" height="3" fill="#0bff00"/><rect x="696.4" y="475.9" width="3" height="3" fill="#0bff00"/><rect x="699.4" y="475.9" width="3" height="3" fill="#06ff00"/><rect x="702.4" y="475.9" width="3" height="3" fill="#00ff0b"/><rect x="705.4" y="475.9" width="3" height="3" fill="#00ff3f"/><rect x="708.4" y="475.9" width="3" height="3" fill="#00ff7e"/><rect x="711.4" y="475.9" width="3" height="3" fill="#00fcca"/><rect x="714.4" y="475.9" width="3" height="3" fill="#00daff"/><rect x="717.4" y="475.9" width="3" height="3" fill="#0083f6"/><rect x="720.4" y="475.9" width="3" height="3" fill="#0035a9"/><rect x="723.4" y="475.9" width="3" height="3" fill="#00063d"/><rect x="726.4" y="475.9" width="3" height="3" fill="#00042e"/><rect x="729.4" y="475.9" width="3" height="3" fill="#000220"/><rect x="732.4" y="475.9" width="3" height="3" fill="#000112"/><rect x="657.4" y="478.9" width="3" height="3" fill="#000118"/><rect x="660.4" y="478.9" width="3" height="3" fill="#000327"/><rect x="663.4" y="478.9" width="3" height="3" fill="#000535"/><rect x="666.4" y="478.9" width="3" height="3" fill="#001b7a"/><rect x="669.4" y="478.9" width="3" height="3" fill="#0066dc"/><rect x="672.4" y="478.9" width="3" height="3" fill="#00c2ff"/><rect x="675.4" y="478.9" width="3" height="3" fill="#00fbd8"/><rect x="678.4" y="478.9" width="3" height="3" fill="#00ff7f"/><rect x="681.4" y="478.9" width="3" height="3" fill="#00ff32"/><rect x="684.4" y="478.9" width="3" height="3" fill="#04ff00"/><rect x="687.4" y="478.9" width="3" height="3" fill="#11ff00"/><rect x="690.4" y="478.9" width="3" height="3" fill="#1bff00"/><rect x="693.4" y="478.9" width="3" height="3" fill="#20ff00"/><rect x="696.4" y="478.9" width="3" height="3" fill="#20ff00"/><rect x="699.4" y="478.9" width="3" height="3" fill="#1bff00"/><rect x="702.4" y="478.9" width="3" height="3" fill="#11ff00"/><rect x="705.4" y="478.9" width="3" height="3" fill="#04ff00"/><rect x="708.4" y="478.9" width="3" height="3" fill="#00ff32"/><rect x="711.4" y="478.9" width="3" height="3" fill="#00ff7f"/><rect x="714.4" y="478.9" width="3" height="3" fill="#00fbd8"/><rect x="717.4" y="478.9" width="3" height="3" fill="#00c2ff"/><rect x="720.4" y="478.9" width="3" height="3" fill="#0066dc"/><rect x="723.4" y="478.9" width="3" height="3" fill="#001b7a"/><rect x="726.4" y="478.9" width="3" height="3" fill="#000535"/><rect x="729.4" y="478.9" width="3" height="3" fill="#000327"/><rect x="732.4" y="478.9" width="3" height="3" fill="#000118"/><rect x="654.4" y="481.9" width="3" height="3" fill="#00000f"/><rect x="657.4" y="481.9" width="3" height="3" fill="#00021e"/><rect x="660.4" y="481.9" width="3" height="3" fill="#00042d"/><rect x="663.4" y="481.9" width="3" height="3" fill="#00063e"/><rect x="666.4" y="481.9" width="3" height="3" fill="#003db5"/><rect x="669.4" y="481.9" width="3" height="3" fill="#0099ff"/><rect x="672.4" y="481.9" width="3" height="3" fill="#00faf9"/><rect x="675.4" y="481.9" width="3" height="3" fill="#00fe93"/><rect x="678.4" y="481.9" width="3" height="3" fill="#00ff39"/><rect x="681.4" y="481.9" width="3" height="3" fill="#05ff00"/><rect x="684.4" y="481.9" width="3" height="3" fill="#16ff00"/><rect x="687.4" y="481.9" width="3" height="3" fill="#25ff00"/><rect x="690.4" y="481.9" width="3" height="3" fill="#2fff00"/><rect x="693.4" y="481.9" width="3" height="3" fill="#35ff00"/><rect x="696.4" y="481.9" width="3" height="3" fill="#35ff00"/><rect x="699.4" y="481.9" width="3" height="3" fill="#2fff00"/><rect x="702.4" y="481.9" width="3" height="3" fill="#25ff00"/><rect x="705.4" y="481.9" width="3" height="3" fill="#16ff00"/><rect x="708.4" y="481.9" width="3" height="3" fill="#05ff00"/><rect x="711.4" y="481.9" width="3" height="3" fill="#00ff39"/><rect x="714.4" y="481.9" width="3" height="3" fill="#00fe93"/><rect x="717.4" y="481.9" width="3" height="3" fill="#00faf9"/><rect x="720.4" y="481.9" width="3" height="3" fill="#0099ff"/><rect x="723.4" y="481.9" width="3" height="3" fill="#003db5"/><rect x="726.4" y="481.9" width="3" height="3" fill="#00063e"/><rect x="729.4" y="481.9" width="3" height="3" fill="#00042d"/><rect x="732.4" y="481.9" width="3" height="3" fill="#00021e"/><rect x="735.4" y="481.9" width="3" height="3" fill="#00000f"/><rect x="654.4" y="484.9" width="3" height="3" fill="#000114"/><rect x="657.4" y="484.9" width="3" height="3" fill="#000323"/><rect x="660.4" y="484.9" width="3" height="3" fill="#000433"/><rect x="663.4" y="484.9" width="3" height="3" fill="#00146f"/><rect x="666.4" y="484.9" width="3" height="3" fill="#0067dc"/><rect x="669.4" y="484.9" width="3" height="3" fill="#00ceff"/><rect x="672.4" y="484.9" width="3" height="3" fill="#00fcbd"/><rect x="675.4" y="484.9" width="3" height="3" fill="#00ff56"/><rect x="678.4" y="484.9" width="3" height="3" fill="#02ff00"/><rect x="681.4" y="484.9" width="3" height="3" fill="#16ff00"/><rect x="684.4" y="484.9" width="3" height="3" fill="#29ff00"/><rect x="687.4" y="484.9" width="3" height="3" fill="#38ff00"/><rect x="690.4" y="484.9" width="3" height="3" fill="#44ff00"/><rect x="693.4" y="484.9" width="3" height="3" fill="#4cff00"/><rect x="696.4" y="484.9" width="3" height="3" fill="#4cff00"/><rect x="699.4" y="484.9" width="3" height="3" fill="#44ff00"/><rect x="702.4" y="484.9" width="3" height="3" fill="#38ff00"/><rect x="705.4" y="484.9" width="3" height="3" fill="#29ff00"/><rect x="708.4" y="484.9" width="3" height="3" fill="#16ff00"/><rect x="711.4" y="484.9" width="3" height="3" fill="#02ff00"/><rect x="714.4" y="484.9" width="3" height="3" fill="#00ff56"/><rect x="717.4" y="484.9" width="3" height="3" fill="#00fcbd"/><rect x="720.4" y="484.9" width="3" height="3" fill="#00ceff"/><rect x="723.4" y="484.9" width="3" height="3" fill="#0067dc"/><rect x="726.4" y="484.9" width="3" height="3" fill="#00146f"/><rect x="729.4" y="484.9" width="3" height="3" fill="#000433"/><rect x="732.4" y="484.9" width="3" height="3" fill="#000323"/><rect x="735.4" y="484.9" width="3" height="3" fill="#000114"/><rect x="654.4" y="487.9" width="3" height="3" fill="#000118"/><rect x="657.4" y="487.9" width="3" height="3" fill="#000328"/><rect x="660.4" y="487.9" width="3" height="3" fill="#000538"/><rect x="663.4" y="487.9" width="3" height="3" fill="#002f9d"/><rect x="666.4" y="487.9" width="3" height="3" fill="#008dff"/><rect x="669.4" y="487.9" width="3" height="3" fill="#00faf9"/><rect x="672.4" y="487.9" width="3" height="3" fill="#00ff86"/><rect x="675.4" y="487.9" width="3" height="3" fill="#00ff1d"/><rect x="678.4" y="487.9" width="3" height="3" fill="#10ff00"/><rect x="681.4" y="487.9" width="3" height="3" fill="#26ff00"/><rect x="684.4" y="487.9" width="3" height="3" fill="#3aff00"/><rect x="687.4" y="487.9" width="3" height="3" fill="#4cff00"/><rect x="690.4" y="487.9" width="3" height="3" fill="#5cff00"/><rect x="693.4" y="487.9" width="3" height="3" fill="#66ff00"/><rect x="696.4" y="487.9" width="3" height="3" fill="#66ff00"/><rect x="699.4" y="487.9" width="3" height="3" fill="#5cff00"/><rect x="702.4" y="487.9" width="3" height="3" fill="#4cff00"/><rect x="705.4" y="487.9" width="3" height="3" fill="#3aff00"/><rect x="708.4" y="487.9" width="3" height="3" fill="#26ff00"/><rect x="711.4" y="487.9" width="3" height="3" fill="#10ff00"/><rect x="714.4" y="487.9" width="3" height="3" fill="#00ff1d"/><rect x="717.4" y="487.9" width="3" height="3" fill="#00ff86"/><rect x="720.4" y="487.9" width="3" height="3" fill="#00faf9"/><rect x="723.4" y="487.9" width="3" height="3" fill="#008dff"/><rect x="726.4" y="487.9" width="3" height="3" fill="#002f9d"/><rect x="729.4" y="487.9" width="3" height="3" fill="#000538"/><rect x="732.4" y="487.9" width="3" height="3" fill="#000328"/><rect x="735.4" y="487.9" width="3" height="3" fill="#000118"/><rect x="651.4" y="490.9" width="3" height="3" fill="#00000c"/><rect x="654.4" y="490.9" width="3" height="3" fill="#00021c"/><rect x="657.4" y="490.9" width="3" height="3" fill="#00042c"/><rect x="660.4" y="490.9" width="3" height="3" fill="#000742"/><rect x="663.4" y="490.9" width="3" height="3" fill="#0049c1"/><rect x="666.4" y="490.9" width="3" height="3" fill="#00b5ff"/><rect x="669.4" y="490.9" width="3" height="3" fill="#00fccc"/><rect x="672.4" y="490.9" width="3" height="3" fill="#00ff57"/><rect x="675.4" y="490.9" width="3" height="3" fill="#05ff00"/><rect x="678.4" y="490.9" width="3" height="3" fill="#1eff00"/><rect x="681.4" y="490.9" width="3" height="3" fill="#36ff00"/><rect x="684.4" y="490.9" width="3" height="3" fill="#4cff00"/><rect x="687.4" y="490.9" width="3" height="3" fill="#63ff00"/><rect x="690.4" y="490.9" width="3" height="3" fill="#75ff00"/><rect x="693.4" y="490.9" width="3" height="3" fill="#7fff00"/><rect x="696.4" y="490.9" width="3" height="3" fill="#7fff00"/><rect x="699.4" y="490.9" width="3" height="3" fill="#75ff00"/><rect x="702.4" y="490.9" width="3" height="3" fill="#63ff00"/><rect x="705.4" y="490.9" width="3" height="3" fill="#4cff00"/><rect x="708.4" y="490.9" width="3" height="3" fill="#36ff00"/><rect x="711.4" y="490.9" width="3" height="3" fill="#1eff00"/><rect x="714.4" y="490.9" width="3" height="3" fill="#05ff00"/><rect x="717.4" y="490.9" width="3" height="3" fill="#00ff57"/><rect x="720.4" y="490.9" width="3" height="3" fill="#00fccc"/><rect x="723.4" y="490.9" width="3" height="3" fill="#00b5ff"/><rect x="726.4" y="490.9" width="3" height="3" fill="#0049c1"/><rect x="729.4" y="490.9" width="3" height="3" fill="#000742"/><rect x="732.4" y="490.9" width="3" height="3" fill="#00042c"/><rect x="735.4" y="490.9" width="3" height="3" fill="#00021c"/><rect x="738.4" y="490.9" width="3" height="3" fill="#00000c"/><rect x="651.4" y="493.9" width="3" height="3" fill="#00000f"/><rect x="654.4" y="493.9" width="3" height="3" fill="#00021f"/><rect x="657.4" y="493.9" width="3" height="3" fill="#000430"/><rect x="660.4" y="493.9" width="3" height="3" fill="#001061"/><rect x="663.4" y="493.9" width="3" height="3" fill="#0064d9"/><rect x="666.4" y="493.9" width="3" height="3" fill="#00d7ff"/><rect x="669.4" y="493.9" width="3" height="3" fill="#00fda5"/><rect x="672.4" y="493.9" width="3" height="3" fill="#00ff2e"/><rect x="675.4" y="493.9" width="3" height="3" fill="#10ff00"/><rect x="678.4" y="493.9" width="3" height="3" fill="#2aff00"/><rect x="681.4" y="493.9" width="3" height="3" fill="#43ff00"/><rect x="684.4" y="493.9" width="3" height="3" fill="#5fff00"/><rect x="687.4" y="493.9" width="3" height="3" fill="#79ff00"/><rect x="690.4" y="493.9" width="3" height="3" fill="#8dff00"/><rect x="693.4" y="493.9" width="3" height="3" fill="#99ff00"/><rect x="696.4" y="493.9" width="3" height="3" fill="#99ff00"/><rect x="699.4" y="493.9" width="3" height="3" fill="#8dff00"/><rect x="702.4" y="493.9" width="3" height="3" fill="#79ff00"/><rect x="705.4" y="493.9" width="3" height="3" fill="#5fff00"/><rect x="708.4" y="493.9" width="3" height="3" fill="#43ff00"/><rect x="711.4" y="493.9" width="3" height="3" fill="#2aff00"/><rect x="714.4" y="493.9" width="3" height="3" fill="#10ff00"/><rect x="717.4" y="493.9" width="3" height="3" fill="#00ff2e"/><rect x="720.4" y="493.9" width="3" height="3" fill="#00fda5"/><rect x="723.4" y="493.9" width="3" height="3" fill="#00d7ff"/><rect x="726.4" y="493.9" width="3" height="3" fill="#0064d9"/><rect x="729.4" y="493.9" width="3" height="3" fill="#001061"/><rect x="732.4" y="493.9" width="3" height="3" fill="#000430"/><rect x="735.4" y="493.9" width="3" height="3" fill="#00021f"/><rect x="738.4" y="493.9" width="3" height="3" fill="#00000f"/><rect x="651.4" y="496.9" width="3" height="3" fill="#000111"/><rect x="654.4" y="496.9" width="3" height="3" fill="#000322"/><rect x="657.4" y="496.9" width="3" height="3" fill="#000433"/><rect x="660.4" y="496.9" width="3" height="3" fill="#001b7a"/><rect x="663.4" y="496.9" width="3" height="3" fill="#007aee"/><rect x="666.4" y="496.9" width="3" height="3" fill="#00f3ff"/><rect x="669.4" y="496.9" width="3" height="3" fill="#00ff85"/><rect x="672.4" y="496.9" width="3" height="3" fill="#00ff0c"/><rect x="675.4" y="496.9" width="3" height="3" fill="#19ff00"/><rect x="678.4" y="496.9" width="3" height="3" fill="#34ff00"/><rect x="681.4" y="496.9" width="3" height="3" fill="#51ff00"/><rect x="684.4" y="496.9" width="3" height="3" fill="#70ff00"/><rect x="687.4" y="496.9" width="3" height="3" fill="#8dff00"/><rect x="690.4" y="496.9" width="3" height="3" fill="#a1ff00"/><rect x="693.4" y="496.9" width="3" height="3" fill="#a7ff00"/><rect x="696.4" y="496.9" width="3" height="3" fill="#a7ff00"/><rect x="699.4" y="496.9" width="3" height="3" fill="#a1ff00"/><rect x="702.4" y="496.9" width="3" height="3" fill="#8dff00"/><rect x="705.4" y="496.9" width="3" height="3" fill="#70ff00"/><rect x="708.4" y="496.9" width="3" height="3" fill="#51ff00"/><rect x="711.4" y="496.9" width="3" height="3" fill="#34ff00"/><rect x="714.4" y="496.9" width="3" height="3" fill="#19ff00"/><rect x="717.4" y="496.9" width="3" height="3" fill="#00ff0c"/><rect x="720.4" y="496.9" width="3" height="3" fill="#00ff85"/><rect x="723.4" y="496.9" width="3" height="3" fill="#00f3ff"/><rect x="726.4" y="496.9" width="3" height="3" fill="#007aee"/><rect x="729.4" y="496.9" width="3" height="3" fill="#001b7a"/><rect x="732.4" y="496.9" width="3" height="3" fill="#000433"/><rect x="735.4" y="496.9" width="3" height="3" fill="#000322"/><rect x="738.4" y="496.9" width="3" height="3" fill="#000111"/><rect x="651.4" y="499.9" width="3" height="3" fill="#000113"/><rect x="654.4" y="499.9" width="3" height="3" fill="#000324"/><rect x="657.4" y="499.9" width="3" height="3" fill="#000535"/><rect x="660.4" y="499.9" width="3" height="3" fill="#00268e"/><rect x="663.4" y="499.9" width="3" height="3" fill="#008bfe"/><rect x="666.4" y="499.9" width="3" height="3" fill="#00faef"/><rect x="669.4" y="499.9" width="3" height="3" fill="#00ff6d"/><rect x="672.4" y="499.9" width="3" height="3" fill="#03ff00"/><rect x="675.4" y="499.9" width="3" height="3" fill="#20ff00"/><rect x="678.4" y="499.9" width="3" height="3" fill="#3dff00"/><rect x="681.4" y="499.9" width="3" height="3" fill="#5dff00"/><rect x="684.4" y="499.9" width="3" height="3" fill="#7fff00"/><rect x="687.4" y="499.9" width="3" height="3" fill="#9eff00"/><rect x="690.4" y="499.9" width="3" height="3" fill="#aaff00"/><rect x="693.4" y="499.9" width="3" height="3" fill="#b1ff00"/><rect x="696.4" y="499.9" width="3" height="3" fill="#b1ff00"/><rect x="699.4" y="499.9" width="3" height="3" fill="#aaff00"/><rect x="702.4" y="499.9" width="3" height="3" fill="#9eff00"/><rect x="705.4" y="499.9" width="3" height="3" fill="#7fff00"/><rect x="708.4" y="499.9" width="3" height="3" fill="#5dff00"/><rect x="711.4" y="499.9" width="3" height="3" fill="#3dff00"/><rect x="714.4" y="499.9" width="3" height="3" fill="#20ff00"/><rect x="717.4" y="499.9" width="3" height="3" fill="#03ff00"/><rect x="720.4" y="499.9" width="3" height="3" fill="#00ff6d"/><rect x="723.4" y="499.9" width="3" height="3" fill="#00faef"/><rect x="726.4" y="499.9" width="3" height="3" fill="#008bfe"/><rect x="729.4" y="499.9" width="3" height="3" fill="#00268e"/><rect x="732.4" y="499.9" width="3" height="3" fill="#000535"/><rect x="735.4" y="499.9" width="3" height="3" fill="#000324"/><rect x="738.4" y="499.9" width="3" height="3" fill="#000113"/><rect x="651.4" y="502.9" width="3" height="3" fill="#000114"/><rect x="654.4" y="502.9" width="3" height="3" fill="#000325"/><rect x="657.4" y="502.9" width="3" height="3" fill="#000536"/><rect x="660.4" y="502.9" width="3" height="3" fill="#002e9c"/><rect x="663.4" y="502.9" width="3" height="3" fill="#0098ff"/><rect x="666.4" y="502.9" width="3" height="3" fill="#00fbdf"/><rect x="669.4" y="502.9" width="3" height="3" fill="#00ff5d"/><rect x="672.4" y="502.9" width="3" height="3" fill="#07ff00"/><rect x="675.4" y="502.9" width="3" height="3" fill="#25ff00"/><rect x="678.4" y="502.9" width="3" height="3" fill="#42ff00"/><rect x="681.4" y="502.9" width="3" height="3" fill="#66ff00"/><rect x="684.4" y="502.9" width="3" height="3" fill="#89ff00"/><rect x="687.4" y="502.9" width="3" height="3" fill="#a4ff00"/><rect x="690.4" y="502.9" width="3" height="3" fill="#b1ff00"/><rect x="693.4" y="502.9" width="3" height="3" fill="#bbff00"/><rect x="696.4" y="502.9" width="3" height="3" fill="#bbff00"/><rect x="699.4" y="502.9" width="3" height="3" fill="#b1ff00"/><rect x="702.4" y="502.9" width="3" height="3" fill="#a4ff00"/><rect x="705.4" y="502.9" width="3" height="3" fill="#89ff00"/><rect x="708.4" y="502.9" width="3" height="3" fill="#66ff00"/><rect x="711.4" y="502.9" width="3" height="3" fill="#42ff00"/><rect x="714.4" y="502.9" width="3" height="3" fill="#25ff00"/><rect x="717.4" y="502.9" width="3" height="3" fill="#07ff00"/><rect x="720.4" y="502.9" width="3" height="3" fill="#00ff5d"/><rect x="723.4" y="502.9" width="3" height="3" fill="#00fbdf"/><rect x="726.4" y="502.9" width="3" height="3" fill="#0098ff"/><rect x="729.4" y="502.9" width="3" height="3" fill="#002e9c"/><rect x="732.4" y="502.9" width="3" height="3" fill="#000536"/><rect x="735.4" y="502.9" width="3" height="3" fill="#000325"/><rect x="738.4" y="502.9" width="3" height="3" fill="#000114"/><rect x="651.4" y="505.9" width="3" height="3" fill="#000115"/><rect x="654.4" y="505.9" width="3" height="3" fill="#000326"/><rect x="657.4" y="505.9" width="3" height="3" fill="#000537"/><rect x="660.4" y="505.9" width="3" height="3" fill="#0032a3"/><rect x="663.4" y="505.9" width="3" height="3" fill="#009eff"/><rect x="666.4" y="505.9" width="3" height="3" fill="#00fbd8"/><rect x="669.4" y="505.9" width="3" height="3" fill="#00ff55"/><rect x="672.4" y="505.9" width="3" height="3" fill="#09ff00"/><rect x="675.4" y="505.9" width="3" height="3" fill="#27ff00"/><rect x="678.4" y="505.9" width="3" height="3" fill="#45ff00"/><rect x="681.4" y="505.9" width="3" height="3" fill="#6aff00"/><rect x="684.4" y="505.9" width="3" height="3" fill="#8fff00"/><rect x="687.4" y="505.9" width="3" height="3" fill="#a7ff00"/><rect x="690.4" y="505.9" width="3" height="3" fill="#b6ff00"/><rect x="693.4" y="505.9" width="3" height="3" fill="#c3ff00"/><rect x="696.4" y="505.9" width="3" height="3" fill="#c3ff00"/><rect x="699.4" y="505.9" width="3" height="3" fill="#b6ff00"/><rect x="702.4" y="505.9" width="3" height="3" fill="#a7ff00"/><rect x="705.4" y="505.9" width="3" height="3" fill="#8fff00"/><rect x="708.4" y="505.9" width="3" height="3" fill="#6aff00"/><rect x="711.4" y="505.9" width="3" height="3" fill="#45ff00"/><rect x="714.4" y="505.9" width="3" height="3" fill="#27ff00"/><rect x="717.4" y="505.9" width="3" height="3" fill="#09ff00"/><rect x="720.4" y="505.9" width="3" height="3" fill="#00ff55"/><rect x="723.4" y="505.9" width="3" height="3" fill="#00fbd8"/><rect x="726.4" y="505.9" width="3" height="3" fill="#009eff"/><rect x="729.4" y="505.9" width="3" height="3" fill="#0032a3"/><rect x="732.4" y="505.9" width="3" height="3" fill="#000537"/><rect x="735.4" y="505.9" width="3" height="3" fill="#000326"/><rect x="738.4" y="505.9" width="3" height="3" fill="#000115"/><rect x="651.4" y="508.9" width="3" height="3" fill="#000114"/><rect x="654.4" y="508.9" width="3" height="3" fill="#000325"/><rect x="657.4" y="508.9" width="3" height="3" fill="#000536"/><rect x="660.4" y="508.9" width="3" height="3" fill="#002b97"/><rect x="663.4" y="508.9" width="3" height="3" fill="#0093ff"/><rect x="666.4" y="508.9" width="3" height="3" fill="#00fbe3"/><rect x="669.4" y="508.9" width="3" height="3" fill="#00ff60"/><rect x="672.4" y="508.9" width="3" height="3" fill="#07ff00"/><rect x="675.4" y="508.9" width="3" height="3" fill="#25ff00"/><rect x="678.4" y="508.9" width="3" height="3" fill="#43ff00"/><rect x="681.4" y="508.9" width="3" height="3" fill="#67ff00"/><rect x="684.4" y="508.9" width="3" height="3" fill="#8bff00"/><rect x="687.4" y="508.9" width="3" height="3" fill="#a6ff00"/><rect x="690.4" y="508.9" width="3" height="3" fill="#b4ff00"/><rect x="693.4" y="508.9" width="3" height="3" fill="#c3ff00"/><rect x="696.4" y="508.9" width="3" height="3" fill="#c3ff00"/><rect x="699.4" y="508.9" width="3" height="3" fill="#b4ff00"/><rect x="702.4" y="508.9" width="3" height="3" fill="#a6ff00"/><rect x="705.4" y="508.9" width="3" height="3" fill="#8bff00"/><rect x="708.4" y="508.9" width="3" height="3" fill="#67ff00"/><rect x="711.4" y="508.9" width="3" height="3" fill="#43ff00"/><rect x="714.4" y="508.9" width="3" height="3" fill="#25ff00"/><rect x="717.4" y="508.9" width="3" height="3" fill="#07ff00"/><rect x="720.4" y="508.9" width="3" height="3" fill="#00ff60"/><rect x="723.4" y="508.9" width="3" height="3" fill="#00fbe3"/><rect x="726.4" y="508.9" width="3" height="3" fill="#0093ff"/><rect x="729.4" y="508.9" width="3" height="3" fill="#002b97"/><rect x="732.4" y="508.9" width="3" height="3" fill="#000536"/><rect x="735.4" y="508.9" width="3" height="3" fill="#000325"/><rect x="738.4" y="508.9" width="3" height="3" fill="#000114"/><rect x="651.4" y="511.9" width="3" height="3" fill="#000010"/><rect x="654.4" y="511.9" width="3" height="3" fill="#000221"/><rect x="657.4" y="511.9" width="3" height="3" fill="#000432"/><rect x="660.4" y="511.9" width="3" height="3" fill="#001773"/><rect x="663.4" y="511.9" width="3" height="3" fill="#0077eb"/><rect x="666.4" y="511.9" width="3" height="3" fill="#00f3ff"/><rect x="669.4" y="511.9" width="3" height="3" fill="#00ff81"/><rect x="672.4" y="511.9" width="3" height="3" fill="#00ff03"/><rect x="675.4" y="511.9" width="3" height="3" fill="#1cff00"/><rect x="678.4" y="511.9" width="3" height="3" fill="#3aff00"/><rect x="681.4" y="511.9" width="3" height="3" fill="#5cff00"/><rect x="684.4" y="511.9" width="3" height="3" fill="#80ff00"/><rect x="687.4" y="511.9" width="3" height="3" fill="#a1ff00"/><rect x="690.4" y="511.9" width="3" height="3" fill="#afff00"/><rect x="693.4" y="511.9" width="3" height="3" fill="#bdff00"/><rect x="696.4" y="511.9" width="3" height="3" fill="#bdff00"/><rect x="699.4" y="511.9" width="3" height="3" fill="#afff00"/><rect x="702.4" y="511.9" width="3" height="3" fill="#a1ff00"/><rect x="705.4" y="511.9" width="3" height="3" fill="#80ff00"/><rect x="708.4" y="511.9" width="3" height="3" fill="#5cff00"/><rect x="711.4" y="511.9" width="3" height="3" fill="#3aff00"/><rect x="714.4" y="511.9" width="3" height="3" fill="#1cff00"/><rect x="717.4" y="511.9" width="3" height="3" fill="#00ff03"/><rect x="720.4" y="511.9" width="3" height="3" fill="#00ff81"/><rect x="723.4" y="511.9" width="3" height="3" fill="#00f3ff"/><rect x="726.4" y="511.9" width="3" height="3" fill="#0077eb"/><rect x="729.4" y="511.9" width="3" height="3" fill="#001773"/><rect x="732.4" y="511.9" width="3" height="3" fill="#000432"/><rect x="735.4" y="511.9" width="3" height="3" fill="#000221"/><rect x="738.4" y="511.9" width="3" height="3" fill="#000010"/><rect x="651.4" y="514.9" width="3" height="3" fill="#00000b"/><rect x="654.4" y="514.9" width="3" height="3" fill="#00021c"/><rect x="657.4" y="514.9" width="3" height="3" fill="#00042d"/><rect x="660.4" y="514.9" width="3" height="3" fill="#000a4c"/><rect x="663.4" y="514.9" width="3" height="3" fill="#0057ce"/><rect x="666.4" y="514.9" width="3" height="3" fill="#00cdff"/><rect x="669.4" y="514.9" width="3" height="3" fill="#00fda9"/><rect x="672.4" y="514.9" width="3" height="3" fill="#00ff2a"/><rect x="675.4" y="514.9" width="3" height="3" fill="#13ff00"/><rect x="678.4" y="514.9" width="3" height="3" fill="#30ff00"/><rect x="681.4" y="514.9" width="3" height="3" fill="#4fff00"/><rect x="684.4" y="514.9" width="3" height="3" fill="#73ff00"/><rect x="687.4" y="514.9" width="3" height="3" fill="#96ff00"/><rect x="690.4" y="514.9" width="3" height="3" fill="#a9ff00"/><rect x="693.4" y="514.9" width="3" height="3" fill="#b6ff00"/><rect x="696.4" y="514.9" width="3" height="3" fill="#b6ff00"/><rect x="699.4" y="514.9" width="3" height="3" fill="#a9ff00"/><rect x="702.4" y="514.9" width="3" height="3" fill="#96ff00"/><rect x="705.4" y="514.9" width="3" height="3" fill="#73ff00"/><rect x="708.4" y="514.9" width="3" height="3" fill="#4fff00"/><rect x="711.4" y="514.9" width="3" height="3" fill="#30ff00"/><rect x="714.4" y="514.9" width="3" height="3" fill="#13ff00"/><rect x="717.4" y="514.9" width="3" height="3" fill="#00ff2a"/><rect x="720.4" y="514.9" width="3" height="3" fill="#00fda9"/><rect x="723.4" y="514.9" width="3" height="3" fill="#00cdff"/><rect x="726.4" y="514.9" width="3" height="3" fill="#0057ce"/><rect x="729.4" y="514.9" width="3" height="3" fill="#000a4c"/><rect x="732.4" y="514.9" width="3" height="3" fill="#00042d"/><rect x="735.4" y="514.9" width="3" height="3" fill="#00021c"/><rect x="738.4" y="514.9" width="3" height="3" fill="#00000b"/><rect x="654.4" y="517.9" width="3" height="3" fill="#000117"/><rect x="657.4" y="517.9" width="3" height="3" fill="#000328"/><rect x="660.4" y="517.9" width="3" height="3" fill="#000538"/><rect x="663.4" y="517.9" width="3" height="3" fill="#0037ab"/><rect x="666.4" y="517.9" width="3" height="3" fill="#00a4ff"/><rect x="669.4" y="517.9" width="3" height="3" fill="#00fbd4"/><rect x="672.4" y="517.9" width="3" height="3" fill="#00ff54"/><rect x="675.4" y="517.9" width="3" height="3" fill="#09ff00"/><rect x="678.4" y="517.9" width="3" height="3" fill="#26ff00"/><rect x="681.4" y="517.9" width="3" height="3" fill="#43ff00"/><rect x="684.4" y="517.9" width="3" height="3" fill="#65ff00"/><rect x="687.4" y="517.9" width="3" height="3" fill="#88ff00"/><rect x="690.4" y="517.9" width="3" height="3" fill="#a3ff00"/><rect x="693.4" y="517.9" width="3" height="3" fill="#b0ff00"/><rect x="696.4" y="517.9" width="3" height="3" fill="#b0ff00"/><rect x="699.4" y="517.9" width="3" height="3" fill="#a3ff00"/><rect x="702.4" y="517.9" width="3" height="3" fill="#88ff00"/><rect x="705.4" y="517.9" width="3" height="3" fill="#65ff00"/><rect x="708.4" y="517.9" width="3" height="3" fill="#43ff00"/><rect x="711.4" y="517.9" width="3" height="3" fill="#26ff00"/><rect x="714.4" y="517.9" width="3" height="3" fill="#09ff00"/><rect x="717.4" y="517.9" width="3" height="3" fill="#00ff54"/><rect x="720.4" y="517.9" width="3" height="3" fill="#00fbd4"/><rect x="723.4" y="517.9" width="3" height="3" fill="#00a4ff"/><rect x="726.4" y="517.9" width="3" height="3" fill="#0037ab"/><rect x="729.4" y="517.9" width="3" height="3" fill="#000538"/><rect x="732.4" y="517.9" width="3" height="3" fill="#000328"/><rect x="735.4" y="517.9" width="3" height="3" fill="#000117"/><rect x="654.4" y="520.9" width="3" height="3" fill="#000112"/><rect x="657.4" y="520.9" width="3" height="3" fill="#000322"/><rect x="660.4" y="520.9" width="3" height="3" fill="#000533"/><rect x="663.4" y="520.9" width="3" height="3" fill="#001c7d"/><rect x="666.4" y="520.9" width="3" height="3" fill="#007cf0"/><rect x="669.4" y="520.9" width="3" height="3" fill="#00f6ff"/><rect x="672.4" y="520.9" width="3" height="3" fill="#00ff81"/><rect x="675.4" y="520.9" width="3" height="3" fill="#00ff06"/><rect x="678.4" y="520.9" width="3" height="3" fill="#1bff00"/><rect x="681.4" y="520.9" width="3" height="3" fill="#37ff00"/><rect x="684.4" y="520.9" width="3" height="3" fill="#57ff00"/><rect x="687.4" y="520.9" width="3" height="3" fill="#79ff00"/><rect x="690.4" y="520.9" width="3" height="3" fill="#99ff00"/><rect x="693.4" y="520.9" width="3" height="3" fill="#a9ff00"/><rect x="696.4" y="520.9" width="3" height="3" fill="#a9ff00"/><rect x="699.4" y="520.9" width="3" height="3" fill="#99ff00"/><rect x="702.4" y="520.9" width="3" height="3" fill="#79ff00"/><rect x="705.4" y="520.9" width="3" height="3" fill="#57ff00"/><rect x="708.4" y="520.9" width="3" height="3" fill="#37ff00"/><rect x="711.4" y="520.9" width="3" height="3" fill="#1bff00"/><rect x="714.4" y="520.9" width="3" height="3" fill="#00ff06"/><rect x="717.4" y="520.9" width="3" height="3" fill="#00ff81"/><rect x="720.4" y="520.9" width="3" height="3" fill="#00f6ff"/><rect x="723.4" y="520.9" width="3" height="3" fill="#007cf0"/><rect x="726.4" y="520.9" width="3" height="3" fill="#001c7d"/><rect x="729.4" y="520.9" width="3" height="3" fill="#000533"/><rect x="732.4" y="520.9" width="3" height="3" fill="#000322"/><rect x="735.4" y="520.9" width="3" height="3" fill="#000112"/><rect x="654.4" y="523.9" width="3" height="3" fill="#00000c"/><rect x="657.4" y="523.9" width="3" height="3" fill="#00021d"/><rect x="660.4" y="523.9" width="3" height="3" fill="#00042d"/><rect x="663.4" y="523.9" width="3" height="3" fill="#000b4d"/><rect x="666.4" y="523.9" width="3" height="3" fill="#0056cd"/><rect x="669.4" y="523.9" width="3" height="3" fill="#00c9ff"/><rect x="672.4" y="523.9" width="3" height="3" fill="#00fdb0"/><rect x="675.4" y="523.9" width="3" height="3" fill="#00ff35"/><rect x="678.4" y="523.9" width="3" height="3" fill="#0fff00"/><rect x="681.4" y="523.9" width="3" height="3" fill="#2cff00"/><rect x="684.4" y="523.9" width="3" height="3" fill="#48ff00"/><rect x="687.4" y="523.9" width="3" height="3" fill="#69ff00"/><rect x="690.4" y="523.9" width="3" height="3" fill="#89ff00"/><rect x="693.4" y="523.9" width="3" height="3" fill="#a2ff00"/><rect x="696.4" y="523.9" width="3" height="3" fill="#a2ff00"/><rect x="699.4" y="523.9" width="3" height="3" fill="#89ff00"/><rect x="702.4" y="523.9" width="3" height="3" fill="#69ff00"/><rect x="705.4" y="523.9" width="3" height="3" fill="#48ff00"/><rect x="708.4" y="523.9" width="3" height="3" fill="#2cff00"/><rect x="711.4" y="523.9" width="3" height="3" fill="#0fff00"/><rect x="714.4" y="523.9" width="3" height="3" fill="#00ff35"/><rect x="717.4" y="523.9" width="3" height="3" fill="#00fdb0"/><rect x="720.4" y="523.9" width="3" height="3" fill="#00c9ff"/><rect x="723.4" y="523.9" width="3" height="3" fill="#0056cd"/><rect x="726.4" y="523.9" width="3" height="3" fill="#000b4d"/><rect x="729.4" y="523.9" width="3" height="3" fill="#00042d"/><rect x="732.4" y="523.9" width="3" height="3" fill="#00021d"/><rect x="735.4" y="523.9" width="3" height="3" fill="#00000c"/><rect x="657.4" y="526.9" width="3" height="3" fill="#000117"/><rect x="660.4" y="526.9" width="3" height="3" fill="#000327"/><rect x="663.4" y="526.9" width="3" height="3" fill="#000538"/><rect x="666.4" y="526.9" width="3" height="3" fill="#0032a4"/><rect x="669.4" y="526.9" width="3" height="3" fill="#009aff"/><rect x="672.4" y="526.9" width="3" height="3" fill="#00fbe2"/><rect x="675.4" y="526.9" width="3" height="3" fill="#00ff65"/><rect x="678.4" y="526.9" width="3" height="3" fill="#04ff00"/><rect x="681.4" y="526.9" width="3" height="3" fill="#20ff00"/><rect x="684.4" y="526.9" width="3" height="3" fill="#3bff00"/><rect x="687.4" y="526.9" width="3" height="3" fill="#5aff00"/><rect x="690.4" y="526.9" width="3" height="3" fill="#79ff00"/><rect x="693.4" y="526.9" width="3" height="3" fill="#96ff00"/><rect x="696.4" y="526.9" width="3" height="3" fill="#96ff00"/><rect x="699.4" y="526.9" width="3" height="3" fill="#79ff00"/><rect x="702.4" y="526.9" width="3" height="3" fill="#5aff00"/><rect x="705.4" y="526.9" width="3" height="3" fill="#3bff00"/><rect x="708.4" y="526.9" width="3" height="3" fill="#20ff00"/><rect x="711.4" y="526.9" width="3" height="3" fill="#04ff00"/><rect x="714.4" y="526.9" width="3" height="3" fill="#00ff65"/><rect x="717.4" y="526.9" width="3" height="3" fill="#00fbe2"/><rect x="720.4" y="526.9" width="3" height="3" fill="#009aff"/><rect x="723.4" y="526.9" width="3" height="3" fill="#0032a4"/><rect x="726.4" y="526.9" width="3" height="3" fill="#000538"/><rect x="729.4" y="526.9" width="3" height="3" fill="#000327"/><rect x="732.4" y="526.9" width="3" height="3" fill="#000117"/><rect x="657.4" y="529.9" width="3" height="3" fill="#000111"/><rect x="660.4" y="529.9" width="3" height="3" fill="#000221"/><rect x="663.4" y="529.9" width="3" height="3" fill="#000432"/><rect x="666.4" y="529.9" width="3" height="3" fill="#00146f"/><rect x="669.4" y="529.9" width="3" height="3" fill="#006fe4"/><rect x="672.4" y="529.9" width="3" height="3" fill="#00e4ff"/><rect x="675.4" y="529.9" width="3" height="3" fill="#00fe96"/><rect x="678.4" y="529.9" width="3" height="3" fill="#00ff1f"/><rect x="681.4" y="529.9" width="3" height="3" fill="#14ff00"/><rect x="684.4" y="529.9" width="3" height="3" fill="#2fff00"/><rect x="687.4" y="529.9" width="3" height="3" fill="#4aff00"/><rect x="690.4" y="529.9" width="3" height="3" fill="#69ff00"/><rect x="693.4" y="529.9" width="3" height="3" fill="#85ff00"/><rect x="696.4" y="529.9" width="3" height="3" fill="#85ff00"/><rect x="699.4" y="529.9" width="3" height="3" fill="#69ff00"/><rect x="702.4" y="529.9" width="3" height="3" fill="#4aff00"/><rect x="705.4" y="529.9" width="3" height="3" fill="#2fff00"/><rect x="708.4" y="529.9" width="3" height="3" fill="#14ff00"/><rect x="711.4" y="529.9" width="3" height="3" fill="#00ff1f"/><rect x="714.4" y="529.9" width="3" height="3" fill="#00fe96"/><rect x="717.4" y="529.9" width="3" height="3" fill="#00e4ff"/><rect x="720.4" y="529.9" width="3" height="3" fill="#006fe4"/><rect x="723.4" y="529.9" width="3" height="3" fill="#00146f"/><rect x="726.4" y="529.9" width="3" height="3" fill="#000432"/><rect x="729.4" y="529.9" width="3" height="3" fill="#000221"/><rect x="732.4" y="529.9" width="3" height="3" fill="#000111"/><rect x="657.4" y="532.9" width="3" height="3" fill="#00000b"/><rect x="660.4" y="532.9" width="3" height="3" fill="#00021b"/><rect x="663.4" y="532.9" width="3" height="3" fill="#00042b"/><rect x="666.4" y="532.9" width="3" height="3" fill="#00063c"/><rect x="669.4" y="532.9" width="3" height="3" fill="#0046bd"/><rect x="672.4" y="532.9" width="3" height="3" fill="#00b3ff"/><rect x="675.4" y="532.9" width="3" height="3" fill="#00fccb"/><rect x="678.4" y="532.9" width="3" height="3" fill="#00ff52"/><rect x="681.4" y="532.9" width="3" height="3" fill="#07ff00"/><rect x="684.4" y="532.9" width="3" height="3" fill="#22ff00"/><rect x="687.4" y="532.9" width="3" height="3" fill="#3cff00"/><rect x="690.4" y="532.9" width="3" height="3" fill="#59ff00"/><rect x="693.4" y="532.9" width="3" height="3" fill="#74ff00"/><rect x="696.4" y="532.9" width="3" height="3" fill="#74ff00"/><rect x="699.4" y="532.9" width="3" height="3" fill="#59ff00"/><rect x="702.4" y="532.9" width="3" height="3" fill="#3cff00"/><rect x="705.4" y="532.9" width="3" height="3" fill="#22ff00"/><rect x="708.4" y="532.9" width="3" height="3" fill="#07ff00"/><rect x="711.4" y="532.9" width="3" height="3" fill="#00ff52"/><rect x="714.4" y="532.9" width="3" height="3" fill="#00fccb"/><rect x="717.4" y="532.9" width="3" height="3" fill="#00b3ff"/><rect x="720.4" y="532.9" width="3" height="3" fill="#0046bd"/><rect x="723.4" y="532.9" width="3" height="3" fill="#00063c"/><rect x="726.4" y="532.9" width="3" height="3" fill="#00042b"/><rect x="729.4" y="532.9" width="3" height="3" fill="#00021b"/><rect x="732.4" y="532.9" width="3" height="3" fill="#00000b"/><rect x="660.4" y="535.9" width="3" height="3" fill="#000115"/><rect x="663.4" y="535.9" width="3" height="3" fill="#000325"/><rect x="666.4" y="535.9" width="3" height="3" fill="#000535"/><rect x="669.4" y="535.9" width="3" height="3" fill="#00248a"/><rect x="672.4" y="535.9" width="3" height="3" fill="#0082f6"/><rect x="675.4" y="535.9" width="3" height="3" fill="#00f7ff"/><rect x="678.4" y="535.9" width="3" height="3" fill="#00ff86"/><rect x="681.4" y="535.9" width="3" height="3" fill="#00ff13"/><rect x="684.4" y="535.9" width="3" height="3" fill="#15ff00"/><rect x="687.4" y="535.9" width="3" height="3" fill="#2fff00"/><rect x="690.4" y="535.9" width="3" height="3" fill="#48ff00"/><rect x="693.4" y="535.9" width="3" height="3" fill="#63ff00"/><rect x="696.4" y="535.9" width="3" height="3" fill="#63ff00"/><rect x="699.4" y="535.9" width="3" height="3" fill="#48ff00"/><rect x="702.4" y="535.9" width="3" height="3" fill="#2fff00"/><rect x="705.4" y="535.9" width="3" height="3" fill="#15ff00"/><rect x="708.4" y="535.9" width="3" height="3" fill="#00ff13"/><rect x="711.4" y="535.9" width="3" height="3" fill="#00ff86"/><rect x="714.4" y="535.9" width="3" height="3" fill="#00f7ff"/><rect x="717.4" y="535.9" width="3" height="3" fill="#0082f6"/><rect x="720.4" y="535.9" width="3" height="3" fill="#00248a"/><rect x="723.4" y="535.9" width="3" height="3" fill="#000535"/><rect x="726.4" y="535.9" width="3" height="3" fill="#000325"/><rect x="729.4" y="535.9" width="3" height="3" fill="#000115"/><rect x="660.4" y="538.9" width="3" height="3" fill="#00000e"/><rect x="663.4" y="538.9" width="3" height="3" fill="#00021f"/><rect x="666.4" y="538.9" width="3" height="3" fill="#00042f"/><rect x="669.4" y="538.9" width="3" height="3" fill="#000c54"/><rect x="672.4" y="538.9" width="3" height="3" fill="#0057cd"/><rect x="675.4" y="538.9" width="3" height="3" fill="#00c4ff"/><rect x="678.4" y="538.9" width="3" height="3" fill="#00fcbd"/><rect x="681.4" y="538.9" width="3" height="3" fill="#00ff48"/><rect x="684.4" y="538.9" width="3" height="3" fill="#09ff00"/><rect x="687.4" y="538.9" width="3" height="3" fill="#22ff00"/><rect x="690.4" y="538.9" width="3" height="3" fill="#3aff00"/><rect x="693.4" y="538.9" width="3" height="3" fill="#52ff00"/><rect x="696.4" y="538.9" width="3" height="3" fill="#52ff00"/><rect x="699.4" y="538.9" width="3" height="3" fill="#3aff00"/><rect x="702.4" y="538.9" width="3" height="3" fill="#22ff00"/><rect x="705.4" y="538.9" width="3" height="3" fill="#09ff00"/><rect x="708.4" y="538.9" width="3" height="3" fill="#00ff48"/><rect x="711.4" y="538.9" width="3" height="3" fill="#00fcbd"/><rect x="714.4" y="538.9" width="3" height="3" fill="#00c4ff"/><rect x="717.4" y="538.9" width="3" height="3" fill="#0057cd"/><rect x="720.4" y="538.9" width="3" height="3" fill="#000c54"/><rect x="723.4" y="538.9" width="3" height="3" fill="#00042f"/><rect x="726.4" y="538.9" width="3" height="3" fill="#00021f"/><rect x="729.4" y="538.9" width="3" height="3" fill="#00000e"/><rect x="663.4" y="541.9" width="3" height="3" fill="#000118"/><rect x="666.4" y="541.9" width="3" height="3" fill="#000328"/><rect x="669.4" y="541.9" width="3" height="3" fill="#000538"/><rect x="672.4" y="541.9" width="3" height="3" fill="#002f9e"/><rect x="675.4" y="541.9" width="3" height="3" fill="#008fff"/><rect x="678.4" y="541.9" width="3" height="3" fill="#00faf4"/><rect x="681.4" y="541.9" width="3" height="3" fill="#00ff7e"/><rect x="684.4" y="541.9" width="3" height="3" fill="#00ff10"/><rect x="687.4" y="541.9" width="3" height="3" fill="#15ff00"/><rect x="690.4" y="541.9" width="3" height="3" fill="#2dff00"/><rect x="693.4" y="541.9" width="3" height="3" fill="#42ff00"/><rect x="696.4" y="541.9" width="3" height="3" fill="#42ff00"/><rect x="699.4" y="541.9" width="3" height="3" fill="#2dff00"/><rect x="702.4" y="541.9" width="3" height="3" fill="#15ff00"/><rect x="705.4" y="541.9" width="3" height="3" fill="#00ff10"/><rect x="708.4" y="541.9" width="3" height="3" fill="#00ff7e"/><rect x="711.4" y="541.9" width="3" height="3" fill="#00faf4"/><rect x="714.4" y="541.9" width="3" height="3" fill="#008fff"/><rect x="717.4" y="541.9" width="3" height="3" fill="#002f9e"/><rect x="720.4" y="541.9" width="3" height="3" fill="#000538"/><rect x="723.4" y="541.9" width="3" height="3" fill="#000328"/><rect x="726.4" y="541.9" width="3" height="3" fill="#000118"/><rect x="663.4" y="544.9" width="3" height="3" fill="#000111"/><rect x="666.4" y="544.9" width="3" height="3" fill="#000221"/><rect x="669.4" y="544.9" width="3" height="3" fill="#000431"/><rect x="672.4" y="544.9" width="3" height="3" fill="#001164"/><rect x="675.4" y="544.9" width="3" height="3" fill="#0062d7"/><rect x="678.4" y="544.9" width="3" height="3" fill="#00cdff"/><rect x="681.4" y="544.9" width="3" height="3" fill="#00fdb7"/><rect x="684.4" y="544.9" width="3" height="3" fill="#00ff47"/><rect x="687.4" y="544.9" width="3" height="3" fill="#07ff00"/><rect x="690.4" y="544.9" width="3" height="3" fill="#1fff00"/><rect x="693.4" y="544.9" width="3" height="3" fill="#34ff00"/><rect x="696.4" y="544.9" width="3" height="3" fill="#34ff00"/><rect x="699.4" y="544.9" width="3" height="3" fill="#1fff00"/><rect x="702.4" y="544.9" width="3" height="3" fill="#07ff00"/><rect x="705.4" y="544.9" width="3" height="3" fill="#00ff47"/><rect x="708.4" y="544.9" width="3" height="3" fill="#00fdb7"/><rect x="711.4" y="544.9" width="3" height="3" fill="#00cdff"/><rect x="714.4" y="544.9" width="3" height="3" fill="#0062d7"/><rect x="717.4" y="544.9" width="3" height="3" fill="#001164"/><rect x="720.4" y="544.9" width="3" height="3" fill="#000431"/><rect x="723.4" y="544.9" width="3" height="3" fill="#000221"/><rect x="726.4" y="544.9" width="3" height="3" fill="#000111"/><rect x="663.4" y="547.9" width="3" height="3" fill="#00000b"/><rect x="666.4" y="547.9" width="3" height="3" fill="#00021b"/><rect x="669.4" y="547.9" width="3" height="3" fill="#00032a"/><rect x="672.4" y="547.9" width="3" height="3" fill="#00053a"/><rect x="675.4" y="547.9" width="3" height="3" fill="#0036aa"/><rect x="678.4" y="547.9" width="3" height="3" fill="#0097ff"/><rect x="681.4" y="547.9" width="3" height="3" fill="#00faf0"/><rect x="684.4" y="547.9" width="3" height="3" fill="#00ff7f"/><rect x="687.4" y="547.9" width="3" height="3" fill="#00ff16"/><rect x="690.4" y="547.9" width="3" height="3" fill="#11ff00"/><rect x="693.4" y="547.9" width="3" height="3" fill="#26ff00"/><rect x="696.4" y="547.9" width="3" height="3" fill="#26ff00"/><rect x="699.4" y="547.9" width="3" height="3" fill="#11ff00"/><rect x="702.4" y="547.9" width="3" height="3" fill="#00ff16"/><rect x="705.4" y="547.9" width="3" height="3" fill="#00ff7f"/><rect x="708.4" y="547.9" width="3" height="3" fill="#00faf0"/><rect x="711.4" y="547.9" width="3" height="3" fill="#0097ff"/><rect x="714.4" y="547.9" width="3" height="3" fill="#0036aa"/><rect x="717.4" y="547.9" width="3" height="3" fill="#00053a"/><rect x="720.4" y="547.9" width="3" height="3" fill="#00032a"/><rect x="723.4" y="547.9" width="3" height="3" fill="#00021b"/><rect x="726.4" y="547.9" width="3" height="3" fill="#00000b"/><rect x="666.4" y="550.9" width="3" height="3" fill="#000114"/><rect x="669.4" y="550.9" width="3" height="3" fill="#000323"/><rect x="672.4" y="550.9" width="3" height="3" fill="#000433"/><rect x="675.4" y="550.9" width="3" height="3" fill="#00146f"/><rect x="678.4" y="550.9" width="3" height="3" fill="#0067dd"/><rect x="681.4" y="550.9" width="3" height="3" fill="#00d0ff"/><rect x="684.4" y="550.9" width="3" height="3" fill="#00fdb9"/><rect x="687.4" y="550.9" width="3" height="3" fill="#00ff4f"/><rect x="690.4" y="550.9" width="3" height="3" fill="#04ff00"/><rect x="693.4" y="550.9" width="3" height="3" fill="#18ff00"/><rect x="696.4" y="550.9" width="3" height="3" fill="#18ff00"/><rect x="699.4" y="550.9" width="3" height="3" fill="#04ff00"/><rect x="702.4" y="550.9" width="3" height="3" fill="#00ff4f"/><rect x="705.4" y="550.9" width="3" height="3" fill="#00fdb9"/><rect x="708.4" y="550.9" width="3" height="3" fill="#00d0ff"/><rect x="711.4" y="550.9" width="3" height="3" fill="#0067dd"/><rect x="714.4" y="550.9" width="3" height="3" fill="#00146f"/><rect x="717.4" y="550.9" width="3" height="3" fill="#000433"/><rect x="720.4" y="550.9" width="3" height="3" fill="#000323"/><rect x="723.4" y="550.9" width="3" height="3" fill="#000114"/><rect x="666.4" y="553.9" width="3" height="3" fill="#00000d"/><rect x="669.4" y="553.9" width="3" height="3" fill="#00021c"/><rect x="672.4" y="553.9" width="3" height="3" fill="#00042c"/><rect x="675.4" y="553.9" width="3" height="3" fill="#00053b"/><rect x="678.4" y="553.9" width="3" height="3" fill="#0039b0"/><rect x="681.4" y="553.9" width="3" height="3" fill="#0098ff"/><rect x="684.4" y="553.9" width="3" height="3" fill="#00faf4"/><rect x="687.4" y="553.9" width="3" height="3" fill="#00ff88"/><rect x="690.4" y="553.9" width="3" height="3" fill="#00ff27"/><rect x="693.4" y="553.9" width="3" height="3" fill="#0bff00"/><rect x="696.4" y="553.9" width="3" height="3" fill="#0bff00"/><rect x="699.4" y="553.9" width="3" height="3" fill="#00ff27"/><rect x="702.4" y="553.9" width="3" height="3" fill="#00ff88"/><rect x="705.4" y="553.9" width="3" height="3" fill="#00faf4"/><rect x="708.4" y="553.9" width="3" height="3" fill="#0098ff"/><rect x="711.4" y="553.9" width="3" height="3" fill="#0039b0"/><rect x="714.4" y="553.9" width="3" height="3" fill="#00053b"/><rect x="717.4" y="553.9" width="3" height="3" fill="#00042c"/><rect x="720.4" y="553.9" width="3" height="3" fill="#00021c"/><rect x="723.4" y="553.9" width="3" height="3" fill="#00000d"/><rect x="669.4" y="556.9" width="3" height="3" fill="#000115"/><rect x="672.4" y="556.9" width="3" height="3" fill="#000325"/><rect x="675.4" y="556.9" width="3" height="3" fill="#000534"/><rect x="678.4" y="556.9" width="3" height="3" fill="#001673"/><rect x="681.4" y="556.9" width="3" height="3" fill="#0067dc"/><rect x="684.4" y="556.9" width="3" height="3" fill="#00cbff"/><rect x="687.4" y="556.9" width="3" height="3" fill="#00fcc4"/><rect x="690.4" y="556.9" width="3" height="3" fill="#00ff61"/><rect x="693.4" y="556.9" width="3" height="3" fill="#00ff0c"/><rect x="696.4" y="556.9" width="3" height="3" fill="#00ff0c"/><rect x="699.4" y="556.9" width="3" height="3" fill="#00ff61"/><rect x="702.4" y="556.9" width="3" height="3" fill="#00fcc4"/><rect x="705.4" y="556.9" width="3" height="3" fill="#00cbff"/><rect x="708.4" y="556.9" width="3" height="3" fill="#0067dc"/><rect x="711.4" y="556.9" width="3" height="3" fill="#001673"/><rect x="714.4" y="556.9" width="3" height="3" fill="#000534"/><rect x="717.4" y="556.9" width="3" height="3" fill="#000325"/><rect x="720.4" y="556.9" width="3" height="3" fill="#000115"/><rect x="669.4" y="559.9" width="3" height="3" fill="#00000e"/><rect x="672.4" y="559.9" width="3" height="3" fill="#00021d"/><rect x="675.4" y="559.9" width="3" height="3" fill="#00042c"/><rect x="678.4" y="559.9" width="3" height="3" fill="#00053b"/><rect x="681.4" y="559.9" width="3" height="3" fill="#0038ae"/><rect x="684.4" y="559.9" width="3" height="3" fill="#0092ff"/><rect x="687.4" y="559.9" width="3" height="3" fill="#00f8ff"/><rect x="690.4" y="559.9" width="3" height="3" fill="#00fe9c"/><rect x="693.4" y="559.9" width="3" height="3" fill="#00ff46"/><rect x="696.4" y="559.9" width="3" height="3" fill="#00ff46"/><rect x="699.4" y="559.9" width="3" height="3" fill="#00fe9c"/><rect x="702.4" y="559.9" width="3" height="3" fill="#00f8ff"/><rect x="705.4" y="559.9" width="3" height="3" fill="#0092ff"/><rect x="708.4" y="559.9" width="3" height="3" fill="#0038ae"/><rect x="711.4" y="559.9" width="3" height="3" fill="#00053b"/><rect x="714.4" y="559.9" width="3" height="3" fill="#00042c"/><rect x="717.4" y="559.9" width="3" height="3" fill="#00021d"/><rect x="720.4" y="559.9" width="3" height="3" fill="#00000e"/><rect x="672.4" y="562.9" width="3" height="3" fill="#000116"/><rect x="675.4" y="562.9" width="3" height="3" fill="#000325"/><rect x="678.4" y="562.9" width="3" height="3" fill="#000534"/><rect x="681.4" y="562.9" width="3" height="3" fill="#001570"/><rect x="684.4" y="562.9" width="3" height="3" fill="#0061d7"/><rect x="687.4" y="562.9" width="3" height="3" fill="#00beff"/><rect x="690.4" y="562.9" width="3" height="3" fill="#00fbd9"/><rect x="693.4" y="562.9" width="3" height="3" fill="#00ff81"/><rect x="696.4" y="562.9" width="3" height="3" fill="#00ff81"/><rect x="699.4" y="562.9" width="3" height="3" fill="#00fbd9"/><rect x="702.4" y="562.9" width="3" height="3" fill="#00beff"/><rect x="705.4" y="562.9" width="3" height="3" fill="#0061d7"/><rect x="708.4" y="562.9" width="3" height="3" fill="#001570"/><rect x="711.4" y="562.9" width="3" height="3" fill="#000534"/><rect x="714.4" y="562.9" width="3" height="3" fill="#000325"/><rect x="717.4" y="562.9" width="3" height="3" fill="#000116"/><rect x="672.4" y="565.9" width="3" height="3" fill="#00000f"/><rect x="675.4" y="565.9" width="3" height="3" fill="#00021e"/><rect x="678.4" y="565.9" width="3" height="3" fill="#00042c"/><rect x="681.4" y="565.9" width="3" height="3" fill="#00053b"/><rect x="684.4" y="565.9" width="3" height="3" fill="#0033a5"/><rect x="687.4" y="565.9" width="3" height="3" fill="#0085f9"/><rect x="690.4" y="565.9" width="3" height="3" fill="#00e3ff"/><rect x="693.4" y="565.9" width="3" height="3" fill="#00fcbf"/><rect x="696.4" y="565.9" width="3" height="3" fill="#00fcbf"/><rect x="699.4" y="565.9" width="3" height="3" fill="#00e3ff"/><rect x="702.4" y="565.9" width="3" height="3" fill="#0085f9"/><rect x="705.4" y="565.9" width="3" height="3" fill="#0033a5"/><rect x="708.4" y="565.9" width="3" height="3" fill="#00053b"/><rect x="711.4" y="565.9" width="3" height="3" fill="#00042c"/><rect x="714.4" y="565.9" width="3" height="3" fill="#00021e"/><rect x="717.4" y="565.9" width="3" height="3" fill="#00000f"/><rect x="675.4" y="568.9" width="3" height="3" fill="#000116"/><rect x="678.4" y="568.9" width="3" height="3" fill="#000325"/><rect x="681.4" y="568.9" width="3" height="3" fill="#000533"/><rect x="684.4" y="568.9" width="3" height="3" fill="#001166"/><rect x="687.4" y="568.9" width="3" height="3" fill="#0054cb"/><rect x="690.4" y="568.9" width="3" height="3" fill="#00a8ff"/><rect x="693.4" y="568.9" width="3" height="3" fill="#00fafd"/><rect x="696.4" y="568.9" width="3" height="3" fill="#00fafd"/><rect x="699.4" y="568.9" width="3" height="3" fill="#00a8ff"/><rect x="702.4" y="568.9" width="3" height="3" fill="#0054cb"/><rect x="705.4" y="568.9" width="3" height="3" fill="#001166"/><rect x="708.4" y="568.9" width="3" height="3" fill="#000533"/><rect x="711.4" y="568.9" width="3" height="3" fill="#000325"/><rect x="714.4" y="568.9" width="3" height="3" fill="#000116"/><rect x="675.4" y="571.9" width="3" height="3" fill="#00000f"/><rect x="678.4" y="571.9" width="3" height="3" fill="#00021d"/><rect x="681.4" y="571.9" width="3" height="3" fill="#00042c"/><rect x="684.4" y="571.9" width="3" height="3" fill="#000539"/><rect x="687.4" y="571.9" width="3" height="3" fill="#002993"/><rect x="690.4" y="571.9" width="3" height="3" fill="#0072e6"/><rect x="693.4" y="571.9" width="3" height="3" fill="#00c0ff"/><rect x="696.4" y="571.9" width="3" height="3" fill="#00c0ff"/><rect x="699.4" y="571.9" width="3" height="3" fill="#0072e6"/><rect x="702.4" y="571.9" width="3" height="3" fill="#002993"/><rect x="705.4" y="571.9" width="3" height="3" fill="#000539"/><rect x="708.4" y="571.9" width="3" height="3" fill="#00042c"/><rect x="711.4" y="571.9" width="3" height="3" fill="#00021d"/><rect x="714.4" y="571.9" width="3" height="3" fill="#00000f"/><rect x="678.4" y="574.9" width="3" height="3" fill="#000116"/><rect x="681.4" y="574.9" width="3" height="3" fill="#000324"/><rect x="684.4" y="574.9" width="3" height="3" fill="#000432"/><rect x="687.4" y="574.9" width="3" height="3" fill="#000c54"/><rect x="690.4" y="574.9" width="3" height="3" fill="#0040b8"/><rect x="693.4" y="574.9" width="3" height="3" fill="#0085f9"/><rect x="696.4" y="574.9" width="3" height="3" fill="#0085f9"/><rect x="699.4" y="574.9" width="3" height="3" fill="#0040b8"/><rect x="702.4" y="574.9" width="3" height="3" fill="#000c54"/><rect x="705.4" y="574.9" width="3" height="3" fill="#000432"/><rect x="708.4" y="574.9" width="3" height="3" fill="#000324"/><rect x="711.4" y="574.9" width="3" height="3" fill="#000116"/><rect x="678.4" y="577.9" width="3" height="3" fill="#00000f"/><rect x="681.4" y="577.9" width="3" height="3" fill="#00021c"/><rect x="684.4" y="577.9" width="3" height="3" fill="#00032a"/><rect x="687.4" y="577.9" width="3" height="3" fill="#000537"/><rect x="690.4" y="577.9" width="3" height="3" fill="#001978"/><rect x="693.4" y="577.9" width="3" height="3" fill="#0053c9"/><rect x="696.4" y="577.9" width="3" height="3" fill="#0053c9"/><rect x="699.4" y="577.9" width="3" height="3" fill="#001978"/><rect x="702.4" y="577.9" width="3" height="3" fill="#000537"/><rect x="705.4" y="577.9" width="3" height="3" fill="#00032a"/><rect x="708.4" y="577.9" width="3" height="3" fill="#00021c"/><rect x="711.4" y="577.9" width="3" height="3" fill="#00000f"/><rect x="681.4" y="580.9" width="3" height="3" fill="#000115"/><rect x="684.4" y="580.9" width="3" height="3" fill="#000322"/><rect x="687.4" y="580.9" width="3" height="3" fill="#00042f"/><rect x="690.4" y="580.9" width="3" height="3" fill="#00053b"/><rect x="693.4" y="580.9" width="3" height="3" fill="#002790"/><rect x="696.4" y="580.9" width="3" height="3" fill="#002790"/><rect x="699.4" y="580.9" width="3" height="3" fill="#00053b"/><rect x="702.4" y="580.9" width="3" height="3" fill="#00042f"/><rect x="705.4" y="580.9" width="3" height="3" fill="#000322"/><rect x="708.4" y="580.9" width="3" height="3" fill="#000115"/><rect x="681.4" y="583.9" width="3" height="3" fill="#00000d"/><rect x="684.4" y="583.9" width="3" height="3" fill="#00021b"/><rect x="687.4" y="583.9" width="3" height="3" fill="#000327"/><rect x="690.4" y="583.9" width="3" height="3" fill="#000533"/><rect x="693.4" y="583.9" width="3" height="3" fill="#000b4f"/><rect x="696.4" y="583.9" width="3" height="3" fill="#000b4f"/><rect x="699.4" y="583.9" width="3" height="3" fill="#000533"/><rect x="702.4" y="583.9" width="3" height="3" fill="#000327"/><rect x="705.4" y="583.9" width="3" height="3" fill="#00021b"/><rect x="708.4" y="583.9" width="3" height="3" fill="#00000d"/><rect x="684.4" y="586.9" width="3" height="3" fill="#000113"/><rect x="687.4" y="586.9" width="3" height="3" fill="#000220"/><rect x="690.4" y="586.9" width="3" height="3" fill="#00042c"/><rect x="693.4" y="586.9" width="3" height="3" fill="#000536"/><rect x="696.4" y="586.9" width="3" height="3" fill="#000536"/><rect x="699.4" y="586.9" width="3" height="3" fill="#00042c"/><rect x="702.4" y="586.9" width="3" height="3" fill="#000220"/><rect x="705.4" y="586.9" width="3" height="3" fill="#000113"/><rect x="684.4" y="589.9" width="3" height="3" fill="#00000b"/><rect x="687.4" y="589.9" width="3" height="3" fill="#000118"/><rect x="690.4" y="589.9" width="3" height="3" fill="#000324"/><rect x="693.4" y="589.9" width="3" height="3" fill="#00042e"/><rect x="696.4" y="589.9" width="3" height="3" fill="#00042e"/><rect x="699.4" y="589.9" width="3" height="3" fill="#000324"/><rect x="702.4" y="589.9" width="3" height="3" fill="#000118"/><rect x="705.4" y="589.9" width="3" height="3" fill="#00000b"/><rect x="687.4" y="592.9" width="3" height="3" fill="#000010"/><rect x="690.4" y="592.9" width="3" height="3" fill="#00021c"/><rect x="693.4" y="592.9" width="3" height="3" fill="#000326"/><rect x="696.4" y="592.9" width="3" height="3" fill="#000326"/><rect x="699.4" y="592.9" width="3" height="3" fill="#00021c"/><rect x="702.4" y="592.9" width="3" height="3" fill="#000010"/><rect x="690.4" y="595.9" width="3" height="3" fill="#000114"/><rect x="693.4" y="595.9" width="3" height="3" fill="#00021e"/><rect x="696.4" y="595.9" width="3" height="3" fill="#00021e"/><rect x="699.4" y="595.9" width="3" height="3" fill="#000114"/><rect x="690.4" y="598.9" width="3" height="3" fill="#00000c"/><rect x="693.4" y="598.9" width="3" height="3" fill="#000117"/><rect x="696.4" y="598.9" width="3" height="3" fill="#000117"/><rect x="699.4" y="598.9" width="3" height="3" fill="#00000c"/><rect x="693.4" y="601.9" width="3" height="3" fill="#00000f"/><rect x="696.4" y="601.9" width="3" height="3" fill="#00000f"/></g>
<rect x="695" y="506" width="3" height="6" fill="#ff0000"/>
<path d="M540.8,664.2 V589.2 H616.8" stroke="#c2c2f6" stroke-width="1.7" fill="none"/>
<path d="M605.8,583.7 L616.8,589.2 L606.8,595.2" stroke="#c2c2f6" stroke-width="1.2" fill="none"/>
<path d="M535.3,653.2 L540.8,664.2 L546.8,654.2" stroke="#c2c2f6" stroke-width="1.2" fill="none"/>
<text x="571.8" y="578.7" font-family="Liberation Serif" font-style="italic" font-size="28" fill="#c2c2f6">τ</text>
<text x="518.8" y="626.7" font-family="Liberation Serif" font-style="italic" font-size="27" fill="#c2c2f6">ν</text>
<rect x="927" y="107" width="927" height="304" fill="#888d96" rx="2"/>
<rect x="928" y="108" width="925" height="302" fill="#c2c6cd" rx="1"/>
<rect x="928" y="108" width="925" height="23" fill="url(#tInact)"/>
<rect x="932" y="131" width="917" height="275" fill="#9da2ab"/>
<rect x="933" y="132" width="915" height="6" fill="#d6d9e1"/>
<rect x="933" y="138" width="915" height="267" fill="#ffffff"/>
<text x="1255.21" y="128.80" font-size="19.08" font-weight="bold" fill="#8c8c8c" textLength="268.88" lengthAdjust="spacingAndGlyphs">Retrieved temporal profile</text>
<rect x="1790.5" y="114.5" width="17" height="16" rx="4" fill="url(#btnIn)" stroke="#6e737c" stroke-width="1"/>
<rect x="1795" y="125.5" width="8" height="2" fill="#5a5e66"/>
<rect x="1810.5" y="114.5" width="17" height="16" rx="4" fill="url(#btnIn)" stroke="#6e737c" stroke-width="1"/>
<rect x="1814.5" y="118.5" width="9" height="8" fill="none" stroke="#5a5e66" stroke-width="1.3"/>
<rect x="1814" y="117.5" width="10" height="2" fill="#5a5e66"/>
<rect x="1830.5" y="114.5" width="17" height="16" rx="4" fill="url(#btnIn)" stroke="#6e737c" stroke-width="1"/>
<path d="M1835,118.5 L1843,126.5 M1843,118.5 L1835,126.5" stroke="#5a5e66" stroke-width="1.8" fill="none"/>
<rect x="927" y="411" width="927" height="304" fill="#888d96" rx="2"/>
<rect x="928" y="412" width="925" height="302" fill="#c2c6cd" rx="1"/>
<rect x="928" y="412" width="925" height="23" fill="url(#tInact)"/>
<rect x="932" y="435" width="917" height="275" fill="#9da2ab"/>
<rect x="933" y="436" width="915" height="6" fill="#d6d9e1"/>
<rect x="933" y="442" width="915" height="267" fill="#ffffff"/>
<text x="1259.71" y="432.80" font-size="19.08" font-weight="bold" fill="#8c8c8c" textLength="259.87" lengthAdjust="spacingAndGlyphs">Retrieved spectral profile</text>
<rect x="1790.5" y="418.5" width="17" height="16" rx="4" fill="url(#btnIn)" stroke="#6e737c" stroke-width="1"/>
<rect x="1795" y="429.5" width="8" height="2" fill="#5a5e66"/>
<rect x="1810.5" y="418.5" width="17" height="16" rx="4" fill="url(#btnIn)" stroke="#6e737c" stroke-width="1"/>
<rect x="1814.5" y="422.5" width="9" height="8" fill="none" stroke="#5a5e66" stroke-width="1.3"/>
<rect x="1814" y="421.5" width="10" height="2" fill="#5a5e66"/>
<rect x="1830.5" y="418.5" width="17" height="16" rx="4" fill="url(#btnIn)" stroke="#6e737c" stroke-width="1"/>
<path d="M1835,422.5 L1843,430.5 M1843,422.5 L1835,430.5" stroke="#5a5e66" stroke-width="1.8" fill="none"/>
<rect x="0" y="716" width="927" height="304" fill="#888d96" rx="2"/>
<rect x="1" y="717" width="925" height="302" fill="#c2c6cd" rx="1"/>
<rect x="1" y="717" width="925" height="23" fill="url(#tInact)"/>
<rect x="5" y="740" width="917" height="275" fill="#9da2ab"/>
<rect x="6" y="741" width="915" height="6" fill="#d6d9e1"/>
<rect x="6" y="747" width="915" height="267" fill="#ffffff"/>
<text x="383.81" y="737.80" font-size="19.08" font-weight="bold" fill="#8c8c8c" textLength="159.18" lengthAdjust="spacingAndGlyphs">Autocorrelation</text>
<rect x="863.5" y="723.5" width="17" height="16" rx="4" fill="url(#btnIn)" stroke="#6e737c" stroke-width="1"/>
<rect x="868" y="734.5" width="8" height="2" fill="#5a5e66"/>
<rect x="883.5" y="723.5" width="17" height="16" rx="4" fill="url(#btnIn)" stroke="#6e737c" stroke-width="1"/>
<rect x="887.5" y="727.5" width="9" height="8" fill="none" stroke="#5a5e66" stroke-width="1.3"/>
<rect x="887" y="726.5" width="10" height="2" fill="#5a5e66"/>
<rect x="903.5" y="723.5" width="17" height="16" rx="4" fill="url(#btnIn)" stroke="#6e737c" stroke-width="1"/>
<path d="M908,727.5 L916,735.5 M916,727.5 L908,735.5" stroke="#5a5e66" stroke-width="1.8" fill="none"/>
<rect x="927" y="716" width="927" height="304" fill="#888d96" rx="2"/>
<rect x="928" y="717" width="925" height="302" fill="#c2c6cd" rx="1"/>
<rect x="928" y="717" width="925" height="23" fill="url(#tInact)"/>
<rect x="932" y="740" width="917" height="275" fill="#9da2ab"/>
<rect x="933" y="741" width="915" height="6" fill="#d6d9e1"/>
<rect x="933" y="747" width="915" height="267" fill="#ffffff"/>
<text x="1341.37" y="737.80" font-size="19.08" font-weight="bold" fill="#8c8c8c" textLength="97.97" lengthAdjust="spacingAndGlyphs">Spectrum</text>
<rect x="1790.5" y="723.5" width="17" height="16" rx="4" fill="url(#btnIn)" stroke="#6e737c" stroke-width="1"/>
<rect x="1795" y="734.5" width="8" height="2" fill="#5a5e66"/>
<rect x="1810.5" y="723.5" width="17" height="16" rx="4" fill="url(#btnIn)" stroke="#6e737c" stroke-width="1"/>
<rect x="1814.5" y="727.5" width="9" height="8" fill="none" stroke="#5a5e66" stroke-width="1.3"/>
<rect x="1814" y="726.5" width="10" height="2" fill="#5a5e66"/>
<rect x="1830.5" y="723.5" width="17" height="16" rx="4" fill="url(#btnIn)" stroke="#6e737c" stroke-width="1"/>
<path d="M1835,727.5 L1843,735.5 M1843,727.5 L1835,735.5" stroke="#5a5e66" stroke-width="1.8" fill="none"/>
<rect x="1000.5" y="148.5" width="789" height="208" fill="#ffffff" stroke="#7c7c7c" stroke-width="1"/>
<line x1="1001" y1="336.5" x2="1789" y2="336.5" stroke="#b4b4b4" stroke-width="1" stroke-dasharray="2.5,1.5"/>
<line x1="1001" y1="316.5" x2="1789" y2="316.5" stroke="#b4b4b4" stroke-width="1" stroke-dasharray="2.5,1.5"/>
<line x1="1001" y1="296.5" x2="1789" y2="296.5" stroke="#b4b4b4" stroke-width="1" stroke-dasharray="2.5,1.5"/>
<line x1="1001" y1="276.5" x2="1789" y2="276.5" stroke="#b4b4b4" stroke-width="1" stroke-dasharray="2.5,1.5"/>
<line x1="1001" y1="256.5" x2="1789" y2="256.5" stroke="#b4b4b4" stroke-width="1" stroke-dasharray="2.5,1.5"/>
<line x1="1001" y1="236.5" x2="1789" y2="236.5" stroke="#b4b4b4" stroke-width="1" stroke-dasharray="2.5,1.5"/>
<line x1="1001" y1="217.5" x2="1789" y2="217.5" stroke="#b4b4b4" stroke-width="1" stroke-dasharray="2.5,1.5"/>
<line x1="1001" y1="197.5" x2="1789" y2="197.5" stroke="#b4b4b4" stroke-width="1" stroke-dasharray="2.5,1.5"/>
<line x1="1001" y1="177.5" x2="1789" y2="177.5" stroke="#b4b4b4" stroke-width="1" stroke-dasharray="2.5,1.5"/>
<line x1="1001" y1="157.5" x2="1789" y2="157.5" stroke="#b4b4b4" stroke-width="1" stroke-dasharray="2.5,1.5"/>
<line x1="1000" y1="360.5" x2="1790" y2="360.5" stroke="#c8c8c8" stroke-width="1"/>
<line x1="1222.3" y1="360.5" x2="1222.3" y2="363.0" stroke="#c8c8c8" stroke-width="1"/>
<text x="1202.56" y="374.70" font-size="12.72" fill="#444444" textLength="39.41" lengthAdjust="spacingAndGlyphs">-1 500</text>
<line x1="1279.2" y1="360.5" x2="1279.2" y2="363.0" stroke="#c8c8c8" stroke-width="1"/>
<text x="1259.46" y="374.70" font-size="12.72" fill="#444444" textLength="39.41" lengthAdjust="spacingAndGlyphs">-1 000</text>
<line x1="1336.1" y1="360.5" x2="1336.1" y2="363.0" stroke="#c8c8c8" stroke-width="1"/>
<text x="1322.37" y="374.70" font-size="12.72" fill="#444444" textLength="27.39" lengthAdjust="spacingAndGlyphs">-500</text>
<line x1="1393.0" y1="360.5" x2="1393.0" y2="363.0" stroke="#c8c8c8" stroke-width="1"/>
<text x="1389.48" y="374.70" font-size="12.72" fill="#444444" textLength="7.04" lengthAdjust="spacingAndGlyphs">0</text>
<line x1="1449.9" y1="360.5" x2="1449.9" y2="363.0" stroke="#c8c8c8" stroke-width="1"/>
<text x="1438.39" y="374.70" font-size="12.72" fill="#444444" textLength="23.00" lengthAdjust="spacingAndGlyphs">500</text>
<line x1="1506.8" y1="360.5" x2="1506.8" y2="363.0" stroke="#c8c8c8" stroke-width="1"/>
<text x="1488.97" y="374.70" font-size="12.72" fill="#444444" textLength="35.14" lengthAdjust="spacingAndGlyphs">1 000</text>
<line x1="1563.7" y1="360.5" x2="1563.7" y2="363.0" stroke="#c8c8c8" stroke-width="1"/>
<text x="1545.87" y="374.70" font-size="12.72" fill="#444444" textLength="35.14" lengthAdjust="spacingAndGlyphs">1 500</text>
<line x1="1620.6" y1="360.5" x2="1620.6" y2="363.0" stroke="#c8c8c8" stroke-width="1"/>
<text x="1602.91" y="374.70" font-size="12.72" fill="#444444" textLength="35.22" lengthAdjust="spacingAndGlyphs">2 000</text>
<line x1="1677.5" y1="360.5" x2="1677.5" y2="363.0" stroke="#c8c8c8" stroke-width="1"/>
<text x="1659.81" y="374.70" font-size="12.72" fill="#444444" textLength="35.22" lengthAdjust="spacingAndGlyphs">2 500</text>
<line x1="1734.4" y1="360.5" x2="1734.4" y2="363.0" stroke="#c8c8c8" stroke-width="1"/>
<text x="1716.91" y="374.70" font-size="12.72" fill="#444444" textLength="35.00" lengthAdjust="spacingAndGlyphs">3 000</text>
<line x1="1793.5" y1="148" x2="1793.5" y2="357" stroke="#c8c8c8" stroke-width="1"/>
<line x1="1793.5" y1="162.6" x2="1796.0" y2="162.6" stroke="#c8c8c8" stroke-width="1"/>
<text x="1799.09" y="166.06" font-size="10.07" fill="#000" textLength="14.43" lengthAdjust="spacingAndGlyphs">0,5</text>
<line x1="1793.5" y1="195.8" x2="1796.0" y2="195.8" stroke="#c8c8c8" stroke-width="1"/>
<text x="1799.09" y="199.31" font-size="10.07" fill="#000" textLength="14.61" lengthAdjust="spacingAndGlyphs">0,0</text>
<line x1="1793.5" y1="229.1" x2="1796.0" y2="229.1" stroke="#c8c8c8" stroke-width="1"/>
<text x="1799.05" y="232.56" font-size="10.07" fill="#000" textLength="17.63" lengthAdjust="spacingAndGlyphs">-0,5</text>
<line x1="1793.5" y1="262.4" x2="1796.0" y2="262.4" stroke="#c8c8c8" stroke-width="1"/>
<text x="1799.04" y="265.81" font-size="10.07" fill="#000" textLength="17.81" lengthAdjust="spacingAndGlyphs">-1,0</text>
<line x1="1793.5" y1="295.6" x2="1796.0" y2="295.6" stroke="#c8c8c8" stroke-width="1"/>
<text x="1799.05" y="299.06" font-size="10.07" fill="#000" textLength="17.63" lengthAdjust="spacingAndGlyphs">-1,5</text>
<line x1="1793.5" y1="328.9" x2="1796.0" y2="328.9" stroke="#c8c8c8" stroke-width="1"/>
<text x="1799.04" y="332.31" font-size="10.07" fill="#000" textLength="17.81" lengthAdjust="spacingAndGlyphs">-2,0</text>
<text x="1359.34" y="393.80" font-size="14.31" font-weight="bold" fill="#333333" textLength="67.94" lengthAdjust="spacingAndGlyphs">Time (fs)</text>
<g transform="translate(1829.00,253.00) rotate(90)"><text x="-19.51" y="4.50" font-size="13.25" fill="#000" textLength="38.52" lengthAdjust="spacingAndGlyphs">Phase</text></g>
<path d="M1001.0,346.5 L1321.5,346.5" fill="none" stroke="#ff0000" stroke-width="1.1" stroke-linejoin="round"/>
<path d="M1321.5,346.5 L1322.9,344.1 L1324.3,341.7 L1325.7,339.2 L1327.1,336.7 L1328.6,333.9 L1330.1,331.1 L1331.6,328.2 L1333.0,325.3 L1334.5,322.2 L1336.0,319.1 L1337.5,315.8 L1339.0,312.5 L1340.4,309.0 L1341.9,305.3 L1343.3,301.6 L1344.8,297.8 L1346.3,294.0 L1347.7,290.1 L1349.2,286.1 L1350.6,282.2 L1352.1,278.3 L1353.5,274.5 L1354.9,270.7 L1356.2,266.8 L1357.6,262.9 L1359.0,259.1 L1360.4,255.4 L1361.8,251.8 L1363.2,248.2 L1364.6,244.7 L1366.0,241.3 L1367.4,237.9 L1368.8,234.6 L1370.2,231.3 L1371.6,228.1 L1372.9,224.8 L1374.3,221.7 L1375.7,218.7 L1377.1,215.8 L1378.3,213.3 L1379.6,210.8 L1380.8,208.4 L1382.1,206.2 L1383.3,204.4 L1384.6,202.8 L1385.8,201.4 L1387.1,200.1 L1388.3,199.0 L1389.6,198.1 L1390.8,197.4 L1392.1,196.7 L1393.3,196.1 L1394.6,195.7 L1395.8,195.6 L1397.2,195.6 L1398.6,195.7 L1400.0,195.9 L1401.4,196.0 L1402.8,196.2 L1404.2,196.3 L1405.6,196.4 L1407.0,196.6 L1408.3,196.8 L1409.7,196.9 L1411.1,197.1 L1412.5,197.1 L1413.8,197.0 L1415.0,196.8 L1416.3,196.4 L1417.5,196.0 L1418.8,195.6 L1420.2,195.0 L1421.6,194.2 L1422.9,193.2 L1424.3,192.1 L1425.7,190.9 L1427.1,189.8 L1428.6,188.6 L1430.1,187.3 L1431.6,185.9 L1433.0,184.5 L1434.5,183.1 L1436.0,181.7 L1437.5,180.4 L1439.0,179.1 L1440.5,177.9 L1442.0,176.6 L1443.4,175.4 L1444.9,174.2 L1446.4,173.1 L1447.9,172.1 L1449.4,171.2 L1450.8,170.4 L1452.3,169.7 L1453.7,169.0 L1455.2,168.3 L1456.7,167.6 L1458.1,166.9 L1459.6,166.1 L1461.0,165.2 L1462.5,164.2 L1463.8,163.1 L1465.0,161.8 L1466.3,160.4 L1467.5,158.9 L1468.8,157.5" fill="none" stroke="#ff0000" stroke-width="1.1" stroke-linejoin="round"/>
<path d="M1468.8,157.5 L1753.0,157.5" fill="none" stroke="#ff0000" stroke-width="1.1" stroke-linejoin="round"/>
<path d="M1001.0,355.5 L1337.5,355.3 L1350.0,352.3 L1356.3,348.1 L1361.5,340.8 L1366.7,327.3 L1372.9,303.3 L1378.1,270.0 L1383.3,224.2 L1389.6,178.3 L1395.4,157.5 L1401.5,178.3 L1406.3,224.2 L1412.5,274.2 L1417.7,313.8 L1422.9,334.6 L1429.2,346.0 L1437.5,353.3 L1450.0,355.5 L1753.0,355.5" fill="none" stroke="#0000ff" stroke-width="1.1" stroke-linejoin="round"/>
<rect x="1646.5" y="149.5" width="141.5" height="21.5" fill="#ffffff" stroke="#000" stroke-width="1.3"/>
<line x1="1649.5" y1="160.25" x2="1664.5" y2="160.25" stroke="#6464ff" stroke-width="2"/>
<text x="1666.86" y="163.80" font-size="13.25" fill="#444444" textLength="54.17" lengthAdjust="spacingAndGlyphs">Intensity</text>
<line x1="1726.5" y1="160.25" x2="1741.5" y2="160.25" stroke="#ff6464" stroke-width="2"/>
<text x="1744.04" y="163.80" font-size="13.25" fill="#444444" textLength="39.98" lengthAdjust="spacingAndGlyphs">Phase</text>
<rect x="988.5" y="452.5" width="777" height="208" fill="#ffffff" stroke="#7c7c7c" stroke-width="1"/>
<line x1="989" y1="660.5" x2="1765" y2="660.5" stroke="#b4b4b4" stroke-width="1" stroke-dasharray="2.5,1.5"/>
<line x1="989" y1="640.5" x2="1765" y2="640.5" stroke="#b4b4b4" stroke-width="1" stroke-dasharray="2.5,1.5"/>
<line x1="989" y1="620.5" x2="1765" y2="620.5" stroke="#b4b4b4" stroke-width="1" stroke-dasharray="2.5,1.5"/>
<line x1="989" y1="600.5" x2="1765" y2="600.5" stroke="#b4b4b4" stroke-width="1" stroke-dasharray="2.5,1.5"/>
<line x1="989" y1="581.5" x2="1765" y2="581.5" stroke="#b4b4b4" stroke-width="1" stroke-dasharray="2.5,1.5"/>
<line x1="989" y1="561.5" x2="1765" y2="561.5" stroke="#b4b4b4" stroke-width="1" stroke-dasharray="2.5,1.5"/>
<line x1="989" y1="541.5" x2="1765" y2="541.5" stroke="#b4b4b4" stroke-width="1" stroke-dasharray="2.5,1.5"/>
<line x1="989" y1="521.5" x2="1765" y2="521.5" stroke="#b4b4b4" stroke-width="1" stroke-dasharray="2.5,1.5"/>
<line x1="989" y1="501.5" x2="1765" y2="501.5" stroke="#b4b4b4" stroke-width="1" stroke-dasharray="2.5,1.5"/>
<line x1="989" y1="481.5" x2="1765" y2="481.5" stroke="#b4b4b4" stroke-width="1" stroke-dasharray="2.5,1.5"/>
<line x1="989" y1="461.5" x2="1765" y2="461.5" stroke="#b4b4b4" stroke-width="1" stroke-dasharray="2.5,1.5"/>
<line x1="984.5" y1="452" x2="984.5" y2="661" stroke="#c8c8c8" stroke-width="1"/>
<line x1="982.5" y1="660.5" x2="984.5" y2="660.5" stroke="#c8c8c8" stroke-width="1"/>
<text x="964.04" y="664.14" font-size="10.60" fill="#000" textLength="14.88" lengthAdjust="spacingAndGlyphs">0,0</text>
<line x1="982.5" y1="640.6" x2="984.5" y2="640.6" stroke="#c8c8c8" stroke-width="1"/>
<text x="964.31" y="644.27" font-size="10.60" fill="#000" textLength="14.71" lengthAdjust="spacingAndGlyphs">0,1</text>
<line x1="982.5" y1="620.8" x2="984.5" y2="620.8" stroke="#c8c8c8" stroke-width="1"/>
<text x="964.39" y="624.40" font-size="10.60" fill="#000" textLength="14.64" lengthAdjust="spacingAndGlyphs">0,2</text>
<line x1="982.5" y1="600.9" x2="984.5" y2="600.9" stroke="#c8c8c8" stroke-width="1"/>
<text x="964.18" y="604.53" font-size="10.60" fill="#000" textLength="14.79" lengthAdjust="spacingAndGlyphs">0,3</text>
<line x1="982.5" y1="581.0" x2="984.5" y2="581.0" stroke="#c8c8c8" stroke-width="1"/>
<text x="963.94" y="584.66" font-size="10.60" fill="#000" textLength="14.87" lengthAdjust="spacingAndGlyphs">0,4</text>
<line x1="982.5" y1="561.1" x2="984.5" y2="561.1" stroke="#c8c8c8" stroke-width="1"/>
<text x="964.26" y="564.79" font-size="10.60" fill="#000" textLength="14.69" lengthAdjust="spacingAndGlyphs">0,5</text>
<line x1="982.5" y1="541.3" x2="984.5" y2="541.3" stroke="#c8c8c8" stroke-width="1"/>
<text x="964.01" y="544.92" font-size="10.60" fill="#000" textLength="14.97" lengthAdjust="spacingAndGlyphs">0,6</text>
<line x1="982.5" y1="521.4" x2="984.5" y2="521.4" stroke="#c8c8c8" stroke-width="1"/>
<text x="964.24" y="525.05" font-size="10.60" fill="#000" textLength="14.80" lengthAdjust="spacingAndGlyphs">0,7</text>
<line x1="982.5" y1="501.5" x2="984.5" y2="501.5" stroke="#c8c8c8" stroke-width="1"/>
<text x="964.06" y="505.18" font-size="10.60" fill="#000" textLength="14.90" lengthAdjust="spacingAndGlyphs">0,8</text>
<line x1="982.5" y1="481.7" x2="984.5" y2="481.7" stroke="#c8c8c8" stroke-width="1"/>
<text x="964.08" y="485.31" font-size="10.60" fill="#000" textLength="14.93" lengthAdjust="spacingAndGlyphs">0,9</text>
<line x1="982.5" y1="461.8" x2="984.5" y2="461.8" stroke="#c8c8c8" stroke-width="1"/>
<text x="964.09" y="465.44" font-size="10.60" fill="#000" textLength="14.83" lengthAdjust="spacingAndGlyphs">1,0</text>
<line x1="988" y1="664.5" x2="1766" y2="664.5" stroke="#c8c8c8" stroke-width="1"/>
<line x1="990.5" y1="664.5" x2="990.5" y2="667.0" stroke="#c8c8c8" stroke-width="1"/>
<text x="978.82" y="678.90" font-size="12.72" fill="#444444" textLength="23.20" lengthAdjust="spacingAndGlyphs">280</text>
<line x1="1026.0" y1="664.5" x2="1026.0" y2="667.0" stroke="#c8c8c8" stroke-width="1"/>
<text x="1014.46" y="678.90" font-size="12.72" fill="#444444" textLength="23.02" lengthAdjust="spacingAndGlyphs">281</text>
<line x1="1061.5" y1="664.5" x2="1061.5" y2="667.0" stroke="#c8c8c8" stroke-width="1"/>
<text x="1049.99" y="678.90" font-size="12.72" fill="#444444" textLength="22.94" lengthAdjust="spacingAndGlyphs">282</text>
<line x1="1096.9" y1="664.5" x2="1096.9" y2="667.0" stroke="#c8c8c8" stroke-width="1"/>
<text x="1085.35" y="678.90" font-size="12.72" fill="#444444" textLength="23.10" lengthAdjust="spacingAndGlyphs">283</text>
<line x1="1132.4" y1="664.5" x2="1132.4" y2="667.0" stroke="#c8c8c8" stroke-width="1"/>
<text x="1120.68" y="678.90" font-size="12.72" fill="#444444" textLength="23.19" lengthAdjust="spacingAndGlyphs">284</text>
<line x1="1167.9" y1="664.5" x2="1167.9" y2="667.0" stroke="#c8c8c8" stroke-width="1"/>
<text x="1156.35" y="678.90" font-size="12.72" fill="#444444" textLength="22.98" lengthAdjust="spacingAndGlyphs">285</text>
<line x1="1203.4" y1="664.5" x2="1203.4" y2="667.0" stroke="#c8c8c8" stroke-width="1"/>
<text x="1191.68" y="678.90" font-size="12.72" fill="#444444" textLength="23.32" lengthAdjust="spacingAndGlyphs">286</text>
<line x1="1238.9" y1="664.5" x2="1238.9" y2="667.0" stroke="#c8c8c8" stroke-width="1"/>
<text x="1227.30" y="678.90" font-size="12.72" fill="#444444" textLength="23.12" lengthAdjust="spacingAndGlyphs">287</text>
<line x1="1274.3" y1="664.5" x2="1274.3" y2="667.0" stroke="#c8c8c8" stroke-width="1"/>
<text x="1262.67" y="678.90" font-size="12.72" fill="#444444" textLength="23.24" lengthAdjust="spacingAndGlyphs">288</text>
<line x1="1309.8" y1="664.5" x2="1309.8" y2="667.0" stroke="#c8c8c8" stroke-width="1"/>
<text x="1298.16" y="678.90" font-size="12.72" fill="#444444" textLength="23.27" lengthAdjust="spacingAndGlyphs">289</text>
<line x1="1345.3" y1="664.5" x2="1345.3" y2="667.0" stroke="#c8c8c8" stroke-width="1"/>
<text x="1333.62" y="678.90" font-size="12.72" fill="#444444" textLength="23.20" lengthAdjust="spacingAndGlyphs">290</text>
<line x1="1380.8" y1="664.5" x2="1380.8" y2="667.0" stroke="#c8c8c8" stroke-width="1"/>
<text x="1369.26" y="678.90" font-size="12.72" fill="#444444" textLength="23.02" lengthAdjust="spacingAndGlyphs">291</text>
<line x1="1416.3" y1="664.5" x2="1416.3" y2="667.0" stroke="#c8c8c8" stroke-width="1"/>
<text x="1404.79" y="678.90" font-size="12.72" fill="#444444" textLength="22.94" lengthAdjust="spacingAndGlyphs">292</text>
<line x1="1451.7" y1="664.5" x2="1451.7" y2="667.0" stroke="#c8c8c8" stroke-width="1"/>
<text x="1440.15" y="678.90" font-size="12.72" fill="#444444" textLength="23.10" lengthAdjust="spacingAndGlyphs">293</text>
<line x1="1487.2" y1="664.5" x2="1487.2" y2="667.0" stroke="#c8c8c8" stroke-width="1"/>
<text x="1475.48" y="678.90" font-size="12.72" fill="#444444" textLength="23.19" lengthAdjust="spacingAndGlyphs">294</text>
<line x1="1522.7" y1="664.5" x2="1522.7" y2="667.0" stroke="#c8c8c8" stroke-width="1"/>
<text x="1511.15" y="678.90" font-size="12.72" fill="#444444" textLength="22.98" lengthAdjust="spacingAndGlyphs">295</text>
<line x1="1558.2" y1="664.5" x2="1558.2" y2="667.0" stroke="#c8c8c8" stroke-width="1"/>
<text x="1546.48" y="678.90" font-size="12.72" fill="#444444" textLength="23.32" lengthAdjust="spacingAndGlyphs">296</text>
<line x1="1593.7" y1="664.5" x2="1593.7" y2="667.0" stroke="#c8c8c8" stroke-width="1"/>
<text x="1582.10" y="678.90" font-size="12.72" fill="#444444" textLength="23.12" lengthAdjust="spacingAndGlyphs">297</text>
<line x1="1629.1" y1="664.5" x2="1629.1" y2="667.0" stroke="#c8c8c8" stroke-width="1"/>
<text x="1617.47" y="678.90" font-size="12.72" fill="#444444" textLength="23.24" lengthAdjust="spacingAndGlyphs">298</text>
<line x1="1664.6" y1="664.5" x2="1664.6" y2="667.0" stroke="#c8c8c8" stroke-width="1"/>
<text x="1652.96" y="678.90" font-size="12.72" fill="#444444" textLength="23.27" lengthAdjust="spacingAndGlyphs">299</text>
<line x1="1700.1" y1="664.5" x2="1700.1" y2="667.0" stroke="#c8c8c8" stroke-width="1"/>
<text x="1688.61" y="678.90" font-size="12.72" fill="#444444" textLength="22.99" lengthAdjust="spacingAndGlyphs">300</text>
<line x1="1735.6" y1="664.5" x2="1735.6" y2="667.0" stroke="#c8c8c8" stroke-width="1"/>
<text x="1724.25" y="678.90" font-size="12.72" fill="#444444" textLength="22.80" lengthAdjust="spacingAndGlyphs">301</text>
<line x1="1769.5" y1="452" x2="1769.5" y2="661" stroke="#c8c8c8" stroke-width="1"/>
<line x1="1769.5" y1="463.3" x2="1772.0" y2="463.3" stroke="#c8c8c8" stroke-width="1"/>
<text x="1775.25" y="466.76" font-size="10.07" fill="#000" textLength="38.61" lengthAdjust="spacingAndGlyphs">400 000</text>
<line x1="1769.5" y1="481.5" x2="1772.0" y2="481.5" stroke="#c8c8c8" stroke-width="1"/>
<text x="1775.09" y="484.96" font-size="10.07" fill="#000" textLength="38.51" lengthAdjust="spacingAndGlyphs">300 000</text>
<line x1="1769.5" y1="499.7" x2="1772.0" y2="499.7" stroke="#c8c8c8" stroke-width="1"/>
<text x="1774.96" y="503.16" font-size="10.07" fill="#000" textLength="38.67" lengthAdjust="spacingAndGlyphs">200 000</text>
<line x1="1769.5" y1="517.9" x2="1772.0" y2="517.9" stroke="#c8c8c8" stroke-width="1"/>
<text x="1774.69" y="521.36" font-size="10.07" fill="#000" textLength="38.60" lengthAdjust="spacingAndGlyphs">100 000</text>
<line x1="1769.5" y1="536.1" x2="1772.0" y2="536.1" stroke="#c8c8c8" stroke-width="1"/>
<text x="1775.11" y="539.56" font-size="10.07" fill="#000" textLength="5.57" lengthAdjust="spacingAndGlyphs">0</text>
<line x1="1769.5" y1="554.3" x2="1772.0" y2="554.3" stroke="#c8c8c8" stroke-width="1"/>
<text x="1775.03" y="557.76" font-size="10.07" fill="#000" textLength="41.83" lengthAdjust="spacingAndGlyphs">-100 000</text>
<line x1="1769.5" y1="572.5" x2="1772.0" y2="572.5" stroke="#c8c8c8" stroke-width="1"/>
<text x="1775.03" y="575.96" font-size="10.07" fill="#000" textLength="41.83" lengthAdjust="spacingAndGlyphs">-200 000</text>
<line x1="1769.5" y1="590.7" x2="1772.0" y2="590.7" stroke="#c8c8c8" stroke-width="1"/>
<text x="1775.03" y="594.16" font-size="10.07" fill="#000" textLength="41.83" lengthAdjust="spacingAndGlyphs">-300 000</text>
<line x1="1769.5" y1="608.9" x2="1772.0" y2="608.9" stroke="#c8c8c8" stroke-width="1"/>
<text x="1775.03" y="612.36" font-size="10.07" fill="#000" textLength="41.83" lengthAdjust="spacingAndGlyphs">-400 000</text>
<line x1="1769.5" y1="627.1" x2="1772.0" y2="627.1" stroke="#c8c8c8" stroke-width="1"/>
<text x="1775.03" y="630.56" font-size="10.07" fill="#000" textLength="41.83" lengthAdjust="spacingAndGlyphs">-500 000</text>
<line x1="1769.5" y1="645.3" x2="1772.0" y2="645.3" stroke="#c8c8c8" stroke-width="1"/>
<text x="1775.03" y="648.76" font-size="10.07" fill="#000" textLength="41.83" lengthAdjust="spacingAndGlyphs">-600 000</text>
<g transform="translate(950.50,556.00) rotate(-90)"><text x="-61.64" y="4.50" font-size="13.25" fill="#000" textLength="122.83" lengthAdjust="spacingAndGlyphs">Intensity (Arb. unit)</text></g>
<text x="1310.17" y="697.80" font-size="15.05" font-weight="bold" fill="#333333" textLength="131.86" lengthAdjust="spacingAndGlyphs">Frequency (THz)</text>
<g transform="translate(1831.00,556.00) rotate(90)"><text x="-19.51" y="4.50" font-size="13.25" fill="#000" textLength="38.52" lengthAdjust="spacingAndGlyphs">Phase</text></g>
<path d="M1023.0,536.0 L1730.0,536.0" fill="none" stroke="#ff5a5a" stroke-width="2.0" stroke-linejoin="round"/>
<path d="M1023.0,460.6 L1025.0,464.0 L1027.0,467.2 L1029.0,470.2 L1031.0,473.1 L1033.0,475.9 L1035.0,478.6 L1037.0,481.1 L1039.0,483.6 L1041.0,485.9 L1043.0,488.1 L1045.0,490.3 L1047.0,492.3 L1049.0,494.2 L1051.0,496.1 L1053.0,497.9 L1055.0,499.6 L1057.0,501.2 L1059.0,502.7 L1061.0,504.2 L1063.0,505.6 L1065.0,507.0 L1067.0,508.3 L1069.0,509.5 L1071.0,510.7 L1073.0,511.8 L1075.0,512.9 L1077.0,513.9 L1079.0,514.9 L1081.0,515.8 L1083.0,516.7 L1085.0,517.6 L1087.0,518.4 L1089.0,519.2 L1091.0,519.9 L1093.0,520.6 L1095.0,521.3 L1097.0,522.0 L1099.0,522.6 L1101.0,523.2 L1103.0,523.8 L1105.0,524.3 L1107.0,524.8 L1109.0,525.3 L1111.0,525.8 L1113.0,526.2 L1115.0,526.7 L1117.0,527.1 L1119.0,527.5 L1121.0,527.9 L1123.0,528.2 L1125.0,528.6 L1127.0,528.9 L1129.0,529.2 L1131.0,529.5 L1133.0,529.8 L1135.0,530.1 L1137.0,530.3 L1139.0,530.6 L1141.0,530.8 L1143.0,531.1 L1145.0,531.3 L1147.0,531.5 L1149.0,531.7 L1151.0,531.9 L1153.0,532.1 L1155.0,532.2 L1157.0,532.4 L1159.0,532.6 L1161.0,532.7 L1163.0,532.9 L1165.0,533.0 L1167.0,533.1 L1169.0,533.3 L1171.0,533.4 L1173.0,533.5 L1175.0,533.6 L1177.0,533.7 L1179.0,533.8 L1181.0,533.9 L1183.0,534.0 L1185.0,534.1 L1187.0,534.2 L1189.0,534.3 L1191.0,534.3 L1193.0,534.4 L1195.0,534.5 L1197.0,534.6 L1199.0,534.6 L1201.0,534.7 L1203.0,534.7 L1205.0,534.8 L1207.0,534.8 L1209.0,534.9 L1211.0,534.9 L1213.0,535.0 L1215.0,535.0 L1217.0,535.1 L1219.0,535.1 L1221.0,535.2 L1223.0,535.2 L1525.0,536.0 L1527.0,536.1 L1529.0,536.1 L1531.0,536.2 L1533.0,536.3 L1535.0,536.4 L1537.0,536.5 L1539.0,536.6 L1541.0,536.7 L1543.0,536.8 L1545.0,536.9 L1547.0,537.0 L1549.0,537.1 L1551.0,537.2 L1553.0,537.3 L1555.0,537.5 L1557.0,537.6 L1559.0,537.7 L1561.0,537.9 L1563.0,538.0 L1565.0,538.2 L1567.0,538.4 L1569.0,538.5 L1571.0,538.7 L1573.0,538.9 L1575.0,539.1 L1577.0,539.3 L1579.0,539.5 L1581.0,539.7 L1583.0,540.0 L1585.0,540.2 L1587.0,540.4 L1589.0,540.7 L1591.0,541.0 L1593.0,541.3 L1595.0,541.5 L1597.0,541.9 L1599.0,542.2 L1601.0,542.5 L1603.0,542.8 L1605.0,543.2 L1607.0,543.6 L1609.0,544.0 L1611.0,544.4 L1613.0,544.8 L1615.0,545.2 L1617.0,545.7 L1619.0,546.2 L1621.0,546.7 L1623.0,547.2 L1625.0,547.7 L1627.0,548.3 L1629.0,548.9 L1631.0,549.5 L1633.0,550.1 L1635.0,550.8 L1637.0,551.5 L1639.0,552.2 L1641.0,553.0 L1643.0,553.7 L1645.0,554.5 L1647.0,555.4 L1649.0,556.3 L1651.0,557.2 L1653.0,558.2 L1655.0,559.2 L1657.0,560.2 L1659.0,561.3 L1661.0,562.4 L1663.0,563.6 L1665.0,564.8 L1667.0,566.1 L1669.0,567.4 L1671.0,568.8 L1673.0,570.3 L1675.0,571.8 L1677.0,573.3 L1679.0,575.0 L1681.0,576.7 L1683.0,578.4 L1685.0,580.3 L1687.0,582.2 L1689.0,584.2 L1691.0,586.3 L1693.0,588.5 L1695.0,590.8 L1697.0,593.1 L1699.0,595.6 L1701.0,598.2 L1703.0,600.8 L1705.0,603.6 L1707.0,606.5 L1709.0,609.5 L1711.0,612.7 L1713.0,616.0 L1715.0,619.4 L1717.0,622.9 L1719.0,626.6 L1721.0,630.5 L1723.0,634.5 L1725.0,638.7 L1727.0,643.1 L1729.0,647.7 L1730.0,650.0" fill="none" stroke="#10e010" stroke-width="1.2" stroke-linejoin="round"/>
<path d="M1195.0,536.0 L1545.0,536.0" fill="none" stroke="#c8782c" stroke-width="2.0" stroke-linejoin="round"/>
<g><rect x="1023.0" y="535.2" width="1.5" height="1.6" fill="#ee2a10"/><rect x="1028.6" y="535.2" width="1.5" height="1.6" fill="#ee2a10"/><rect x="1034.2" y="535.2" width="1.5" height="1.6" fill="#ee2a10"/><rect x="1039.8" y="535.2" width="1.5" height="1.6" fill="#ee2a10"/><rect x="1045.4" y="535.2" width="1.5" height="1.6" fill="#ee2a10"/><rect x="1051.0" y="535.2" width="1.5" height="1.6" fill="#ee2a10"/><rect x="1056.6" y="535.2" width="1.5" height="1.6" fill="#ee2a10"/><rect x="1062.2" y="535.2" width="1.5" height="1.6" fill="#ee2a10"/><rect x="1067.8" y="535.2" width="1.5" height="1.6" fill="#ee2a10"/><rect x="1073.4" y="535.2" width="1.5" height="1.6" fill="#ee2a10"/><rect x="1079.0" y="535.2" width="1.5" height="1.6" fill="#ee2a10"/><rect x="1084.6" y="535.2" width="1.5" height="1.6" fill="#ee2a10"/><rect x="1090.2" y="535.2" width="1.5" height="1.6" fill="#ee2a10"/><rect x="1095.8" y="535.2" width="1.5" height="1.6" fill="#ee2a10"/><rect x="1101.4" y="535.2" width="1.5" height="1.6" fill="#ee2a10"/><rect x="1107.0" y="535.2" width="1.5" height="1.6" fill="#ee2a10"/><rect x="1112.6" y="535.2" width="1.5" height="1.6" fill="#ee2a10"/><rect x="1118.2" y="535.2" width="1.5" height="1.6" fill="#ee2a10"/><rect x="1123.8" y="535.2" width="1.5" height="1.6" fill="#ee2a10"/><rect x="1129.4" y="535.2" width="1.5" height="1.6" fill="#ee2a10"/><rect x="1135.0" y="535.2" width="1.5" height="1.6" fill="#ee2a10"/><rect x="1140.6" y="535.2" width="1.5" height="1.6" fill="#ee2a10"/><rect x="1146.2" y="535.2" width="1.5" height="1.6" fill="#ee2a10"/><rect x="1151.8" y="535.2" width="1.5" height="1.6" fill="#ee2a10"/><rect x="1157.4" y="535.2" width="1.5" height="1.6" fill="#ee2a10"/><rect x="1163.0" y="535.2" width="1.5" height="1.6" fill="#ee2a10"/><rect x="1168.6" y="535.2" width="1.5" height="1.6" fill="#ee2a10"/><rect x="1174.2" y="535.2" width="1.5" height="1.6" fill="#ee2a10"/><rect x="1179.8" y="535.2" width="1.5" height="1.6" fill="#ee2a10"/><rect x="1185.4" y="535.2" width="1.5" height="1.6" fill="#ee2a10"/><rect x="1191.0" y="535.2" width="1.5" height="1.6" fill="#ee2a10"/><rect x="1196.6" y="535.2" width="1.5" height="1.6" fill="#ee2a10"/><rect x="1202.2" y="535.2" width="1.5" height="1.6" fill="#ee2a10"/><rect x="1207.8" y="535.2" width="1.5" height="1.6" fill="#ee2a10"/><rect x="1213.4" y="535.2" width="1.5" height="1.6" fill="#ee2a10"/><rect x="1219.0" y="535.2" width="1.5" height="1.6" fill="#ee2a10"/><rect x="1224.6" y="535.2" width="1.5" height="1.6" fill="#ee2a10"/><rect x="1230.2" y="535.2" width="1.5" height="1.6" fill="#ee2a10"/><rect x="1235.8" y="535.2" width="1.5" height="1.6" fill="#ee2a10"/><rect x="1241.4" y="535.2" width="1.5" height="1.6" fill="#ee2a10"/><rect x="1247.0" y="535.2" width="1.5" height="1.6" fill="#ee2a10"/><rect x="1252.6" y="535.2" width="1.5" height="1.6" fill="#ee2a10"/><rect x="1258.2" y="535.2" width="1.5" height="1.6" fill="#ee2a10"/><rect x="1263.8" y="535.2" width="1.5" height="1.6" fill="#ee2a10"/><rect x="1269.4" y="535.2" width="1.5" height="1.6" fill="#ee2a10"/><rect x="1275.0" y="535.2" width="1.5" height="1.6" fill="#ee2a10"/><rect x="1280.6" y="535.2" width="1.5" height="1.6" fill="#ee2a10"/><rect x="1286.2" y="535.2" width="1.5" height="1.6" fill="#ee2a10"/><rect x="1291.8" y="535.2" width="1.5" height="1.6" fill="#ee2a10"/><rect x="1297.4" y="535.2" width="1.5" height="1.6" fill="#ee2a10"/><rect x="1303.0" y="535.2" width="1.5" height="1.6" fill="#ee2a10"/><rect x="1308.6" y="535.2" width="1.5" height="1.6" fill="#ee2a10"/><rect x="1314.2" y="535.2" width="1.5" height="1.6" fill="#ee2a10"/><rect x="1319.8" y="535.2" width="1.5" height="1.6" fill="#ee2a10"/><rect x="1325.4" y="535.2" width="1.5" height="1.6" fill="#ee2a10"/><rect x="1331.0" y="535.2" width="1.5" height="1.6" fill="#ee2a10"/><rect x="1336.6" y="535.2" width="1.5" height="1.6" fill="#ee2a10"/><rect x="1342.2" y="535.2" width="1.5" height="1.6" fill="#ee2a10"/><rect x="1347.8" y="535.2" width="1.5" height="1.6" fill="#ee2a10"/><rect x="1353.4" y="535.2" width="1.5" height="1.6" fill="#ee2a10"/><rect x="1359.0" y="535.2" width="1.5" height="1.6" fill="#ee2a10"/><rect x="1364.6" y="535.2" width="1.5" height="1.6" fill="#ee2a10"/><rect x="1370.2" y="535.2" width="1.5" height="1.6" fill="#ee2a10"/><rect x="1375.8" y="535.2" width="1.5" height="1.6" fill="#ee2a10"/><rect x="1381.4" y="535.2" width="1.5" height="1.6" fill="#ee2a10"/><rect x="1387.0" y="535.2" width="1.5" height="1.6" fill="#ee2a10"/><rect x="1392.6" y="535.2" width="1.5" height="1.6" fill="#ee2a10"/><rect x="1398.2" y="535.2" width="1.5" height="1.6" fill="#ee2a10"/><rect x="1403.8" y="535.2" width="1.5" height="1.6" fill="#ee2a10"/><rect x="1409.4" y="535.2" width="1.5" height="1.6" fill="#ee2a10"/><rect x="1415.0" y="535.2" width="1.5" height="1.6" fill="#ee2a10"/><rect x="1420.6" y="535.2" width="1.5" height="1.6" fill="#ee2a10"/><rect x="1426.2" y="535.2" width="1.5" height="1.6" fill="#ee2a10"/><rect x="1431.8" y="535.2" width="1.5" height="1.6" fill="#ee2a10"/><rect x="1437.4" y="535.2" width="1.5" height="1.6" fill="#ee2a10"/><rect x="1443.0" y="535.2" width="1.5" height="1.6" fill="#ee2a10"/><rect x="1448.6" y="535.2" width="1.5" height="1.6" fill="#ee2a10"/><rect x="1454.2" y="535.2" width="1.5" height="1.6" fill="#ee2a10"/><rect x="1459.8" y="535.2" width="1.5" height="1.6" fill="#ee2a10"/><rect x="1465.4" y="535.2" width="1.5" height="1.6" fill="#ee2a10"/><rect x="1471.0" y="535.2" width="1.5" height="1.6" fill="#ee2a10"/><rect x="1476.6" y="535.2" width="1.5" height="1.6" fill="#ee2a10"/><rect x="1482.2" y="535.2" width="1.5" height="1.6" fill="#ee2a10"/><rect x="1487.8" y="535.2" width="1.5" height="1.6" fill="#ee2a10"/><rect x="1493.4" y="535.2" width="1.5" height="1.6" fill="#ee2a10"/><rect x="1499.0" y="535.2" width="1.5" height="1.6" fill="#ee2a10"/><rect x="1504.6" y="535.2" width="1.5" height="1.6" fill="#ee2a10"/><rect x="1510.2" y="535.2" width="1.5" height="1.6" fill="#ee2a10"/><rect x="1515.8" y="535.2" width="1.5" height="1.6" fill="#ee2a10"/><rect x="1521.4" y="535.2" width="1.5" height="1.6" fill="#ee2a10"/><rect x="1527.0" y="535.2" width="1.5" height="1.6" fill="#ee2a10"/><rect x="1532.6" y="535.2" width="1.5" height="1.6" fill="#ee2a10"/><rect x="1538.2" y="535.2" width="1.5" height="1.6" fill="#ee2a10"/><rect x="1543.8" y="535.2" width="1.5" height="1.6" fill="#ee2a10"/><rect x="1549.4" y="535.2" width="1.5" height="1.6" fill="#ee2a10"/><rect x="1555.0" y="535.2" width="1.5" height="1.6" fill="#ee2a10"/><rect x="1560.6" y="535.2" width="1.5" height="1.6" fill="#ee2a10"/><rect x="1566.2" y="535.2" width="1.5" height="1.6" fill="#ee2a10"/><rect x="1571.8" y="535.2" width="1.5" height="1.6" fill="#ee2a10"/><rect x="1577.4" y="535.2" width="1.5" height="1.6" fill="#ee2a10"/><rect x="1583.0" y="535.2" width="1.5" height="1.6" fill="#ee2a10"/><rect x="1588.6" y="535.2" width="1.5" height="1.6" fill="#ee2a10"/><rect x="1594.2" y="535.2" width="1.5" height="1.6" fill="#ee2a10"/><rect x="1599.8" y="535.2" width="1.5" height="1.6" fill="#ee2a10"/><rect x="1605.4" y="535.2" width="1.5" height="1.6" fill="#ee2a10"/><rect x="1611.0" y="535.2" width="1.5" height="1.6" fill="#ee2a10"/><rect x="1616.6" y="535.2" width="1.5" height="1.6" fill="#ee2a10"/><rect x="1622.2" y="535.2" width="1.5" height="1.6" fill="#ee2a10"/><rect x="1627.8" y="535.2" width="1.5" height="1.6" fill="#ee2a10"/><rect x="1633.4" y="535.2" width="1.5" height="1.6" fill="#ee2a10"/><rect x="1639.0" y="535.2" width="1.5" height="1.6" fill="#ee2a10"/><rect x="1644.6" y="535.2" width="1.5" height="1.6" fill="#ee2a10"/><rect x="1650.2" y="535.2" width="1.5" height="1.6" fill="#ee2a10"/><rect x="1655.8" y="535.2" width="1.5" height="1.6" fill="#ee2a10"/><rect x="1661.4" y="535.2" width="1.5" height="1.6" fill="#ee2a10"/><rect x="1667.0" y="535.2" width="1.5" height="1.6" fill="#ee2a10"/><rect x="1672.6" y="535.2" width="1.5" height="1.6" fill="#ee2a10"/><rect x="1678.2" y="535.2" width="1.5" height="1.6" fill="#ee2a10"/><rect x="1683.8" y="535.2" width="1.5" height="1.6" fill="#ee2a10"/><rect x="1689.4" y="535.2" width="1.5" height="1.6" fill="#ee2a10"/><rect x="1695.0" y="535.2" width="1.5" height="1.6" fill="#ee2a10"/><rect x="1700.6" y="535.2" width="1.5" height="1.6" fill="#ee2a10"/><rect x="1706.2" y="535.2" width="1.5" height="1.6" fill="#ee2a10"/><rect x="1711.8" y="535.2" width="1.5" height="1.6" fill="#ee2a10"/><rect x="1717.4" y="535.2" width="1.5" height="1.6" fill="#ee2a10"/><rect x="1723.0" y="535.2" width="1.5" height="1.6" fill="#ee2a10"/><rect x="1728.6" y="535.2" width="1.5" height="1.6" fill="#ee2a10"/></g>
<path d="M1023.0,659.5 L1280.0,658.3 L1280.0,658.3 L1281.5,658.1 L1283.0,657.9 L1284.5,657.7 L1285.9,657.5 L1287.4,657.3 L1288.9,657.1 L1290.4,657.0 L1291.9,656.8 L1293.4,656.6 L1294.9,656.3 L1296.3,656.1 L1297.8,655.8 L1299.3,655.5 L1300.8,655.2 L1302.3,654.8 L1303.8,654.4 L1305.3,653.8 L1306.8,653.2 L1308.3,652.6 L1309.8,651.8 L1311.3,651.0 L1312.8,650.0 L1314.3,648.8 L1315.8,647.4 L1317.2,645.8 L1318.7,644.1 L1320.2,642.4 L1321.7,640.6 L1323.2,638.8 L1324.7,636.8 L1326.2,634.8 L1327.6,632.6 L1329.1,630.2 L1330.6,627.7 L1332.1,625.0 L1333.5,622.2 L1334.9,619.0 L1336.2,615.6 L1337.6,612.0 L1339.0,608.1 L1340.4,604.2 L1341.7,600.4 L1342.9,596.4 L1344.2,592.2 L1345.4,587.8 L1346.7,583.3 L1348.0,578.5 L1349.3,573.5 L1350.6,568.1 L1351.9,562.5 L1353.3,555.9 L1354.6,548.8 L1356.0,541.7 L1357.4,534.7 L1358.8,527.7 L1360.2,520.8 L1361.6,514.0 L1363.0,507.2 L1364.4,500.0 L1365.4,493.5 L1366.5,486.7 L1367.5,481.3 L1368.8,477.0 L1370.0,473.5 L1371.3,470.6 L1372.5,467.7 L1373.8,464.6 L1373.8,464.6 L1379.0,461.5 L1379.0,461.5 L1380.2,463.8 L1381.5,466.0 L1382.7,468.3 L1384.0,470.9 L1385.2,474.0 L1386.6,478.9 L1388.0,485.1 L1389.4,491.7 L1390.8,498.2 L1392.1,505.2 L1393.5,512.5 L1394.9,520.5 L1396.3,529.0 L1397.7,537.5 L1399.1,546.0 L1400.5,554.5 L1401.9,562.5 L1403.2,569.2 L1404.5,575.4 L1405.8,581.4 L1407.1,587.5 L1408.3,593.6 L1409.6,599.8 L1410.8,606.0 L1412.1,611.7 L1413.3,616.7 L1414.7,621.8 L1416.1,626.6 L1417.5,631.1 L1418.9,635.2 L1420.3,638.7 L1421.7,641.7 L1423.1,644.2 L1424.5,646.6 L1425.8,648.7 L1427.2,650.5 L1428.6,652.0 L1430.0,653.1 L1431.4,654.0 L1432.8,654.8 L1434.2,655.6 L1435.6,656.3 L1436.9,656.9 L1438.3,657.4 L1439.7,657.9 L1441.1,658.1 L1442.5,658.3 L1444.0,658.4 L1445.5,658.5 L1447.0,658.6 L1448.5,658.6 L1450.0,658.7 L1451.5,658.8 L1453.0,658.9 L1454.5,658.9 L1456.0,659.0 L1457.5,659.0 L1459.0,659.1 L1460.5,659.1 L1462.0,659.2 L1463.5,659.2 L1465.0,659.2 L1466.5,659.3 L1468.0,659.3 L1469.5,659.3 L1471.0,659.3 L1472.5,659.4 L1474.0,659.4 L1475.5,659.4 L1477.0,659.4 L1478.5,659.4 L1480.0,659.4 L1481.5,659.4 L1483.0,659.4 L1484.5,659.4 L1486.0,659.4 L1487.5,659.4 L1489.0,659.4 L1490.5,659.4 L1492.0,659.4 L1493.5,659.4 L1495.0,659.4 L1496.5,659.4 L1498.0,659.4 L1499.5,659.4 L1501.0,659.4 L1502.5,659.4 L1504.0,659.4 L1505.4,659.4 L1506.9,659.4 L1508.4,659.4 L1509.9,659.4 L1511.4,659.4 L1512.9,659.4 L1514.4,659.4 L1515.9,659.4 L1517.4,659.4 L1518.9,659.4 L1520.4,659.4 L1521.9,659.4 L1523.4,659.4 L1524.9,659.4 L1526.4,659.4 L1527.9,659.4 L1529.4,659.4 L1530.9,659.4 L1532.4,659.4 L1533.9,659.4 L1535.4,659.4 L1536.9,659.4 L1538.4,659.4 L1539.9,659.4 L1541.4,659.4 L1542.9,659.4 L1544.4,659.4 L1545.9,659.4 L1547.4,659.4 L1548.9,659.5 L1550.4,659.5 L1551.9,659.5 L1553.4,659.5 L1554.9,659.5 L1556.3,659.5 L1557.8,659.5 L1559.3,659.5 L1560.8,659.5 L1562.3,659.5 L1563.8,659.5 L1565.3,659.5 L1566.8,659.5 L1568.3,659.5 L1569.8,659.5 L1571.3,659.5 L1572.8,659.5 L1574.3,659.5 L1575.8,659.5 L1577.3,659.5 L1578.8,659.5 L1580.3,659.5 L1581.8,659.5 L1583.3,659.5 L1584.8,659.5 L1586.3,659.5 L1587.8,659.5 L1589.3,659.5 L1590.8,659.5 L1592.3,659.5 L1593.8,659.5 L1595.3,659.5 L1596.8,659.5 L1598.3,659.5 L1599.8,659.5 L1601.3,659.5 L1602.8,659.5 L1604.3,659.5 L1605.7,659.5 L1607.2,659.5 L1608.7,659.5 L1610.2,659.5 L1611.7,659.5 L1613.2,659.5 L1614.7,659.5 L1616.2,659.5 L1617.7,659.5 L1619.2,659.5 L1620.7,659.5 L1622.2,659.5 L1623.7,659.5 L1625.2,659.5 L1626.7,659.5 L1628.2,659.5 L1629.7,659.5 L1631.2,659.5 L1632.7,659.5 L1634.2,659.5 L1635.7,659.5 L1637.2,659.5 L1638.7,659.5 L1640.2,659.5 L1641.7,659.5 L1643.2,659.5 L1644.7,659.5 L1646.2,659.5 L1647.7,659.5 L1649.2,659.5 L1650.7,659.5 L1652.2,659.5 L1653.7,659.5 L1655.1,659.5 L1656.6,659.5 L1658.1,659.5 L1659.6,659.5 L1661.1,659.5 L1662.6,659.5 L1664.1,659.5 L1665.6,659.5 L1667.1,659.5 L1668.6,659.5 L1670.1,659.5 L1671.6,659.5 L1673.1,659.5 L1674.6,659.5 L1676.1,659.5 L1677.6,659.5 L1679.1,659.5 L1680.6,659.5 L1682.1,659.5 L1683.6,659.5 L1685.1,659.5 L1686.6,659.5 L1688.1,659.5 L1689.6,659.5 L1691.1,659.5 L1692.6,659.5 L1694.1,659.5 L1695.6,659.5 L1697.1,659.5 L1698.6,659.5 L1700.1,659.5 L1701.6,659.5 L1703.1,659.5 L1704.6,659.5 L1706.0,659.5 L1707.5,659.5 L1709.0,659.5 L1710.5,659.5 L1712.0,659.5 L1713.5,659.5 L1715.0,659.5 L1716.5,659.5 L1718.0,659.5 L1719.5,659.5 L1721.0,659.5 L1722.5,659.5 L1724.0,659.5 L1725.5,659.5 L1727.0,659.5 L1728.5,659.5 L1730.0,659.5" fill="none" stroke="#0000ff" stroke-width="1.1" stroke-linejoin="round"/>
<rect x="1544.0" y="453.5" width="220.0" height="21.30000000000001" fill="#ffffff" stroke="#000" stroke-width="1.3"/>
<line x1="1546.7" y1="464.15" x2="1561.2" y2="464.15" stroke="#6464ff" stroke-width="2"/>
<text x="1563.45" y="468.20" font-size="13.25" fill="#444444" textLength="54.48" lengthAdjust="spacingAndGlyphs">Intensity</text>
<line x1="1624" y1="464.15" x2="1638.8" y2="464.15" stroke="#ff6464" stroke-width="2"/>
<text x="1640.95" y="468.20" font-size="13.25" fill="#444444" textLength="39.67" lengthAdjust="spacingAndGlyphs">Phase</text>
<line x1="1687.6" y1="464.15" x2="1701.2" y2="464.15" stroke="#64ff64" stroke-width="2"/>
<text x="1703.63" y="468.20" font-size="13.25" fill="#444444" textLength="55.27" lengthAdjust="spacingAndGlyphs">Phase fit</text>
<rect x="69.5" y="757.5" width="840" height="208" fill="#ffffff" stroke="#7c7c7c" stroke-width="1"/>
<line x1="70" y1="965.5" x2="909" y2="965.5" stroke="#b4b4b4" stroke-width="1" stroke-dasharray="2.5,1.5"/>
<line x1="70" y1="945.5" x2="909" y2="945.5" stroke="#b4b4b4" stroke-width="1" stroke-dasharray="2.5,1.5"/>
<line x1="70" y1="925.5" x2="909" y2="925.5" stroke="#b4b4b4" stroke-width="1" stroke-dasharray="2.5,1.5"/>
<line x1="70" y1="905.5" x2="909" y2="905.5" stroke="#b4b4b4" stroke-width="1" stroke-dasharray="2.5,1.5"/>
<line x1="70" y1="885.5" x2="909" y2="885.5" stroke="#b4b4b4" stroke-width="1" stroke-dasharray="2.5,1.5"/>
<line x1="70" y1="865.5" x2="909" y2="865.5" stroke="#b4b4b4" stroke-width="1" stroke-dasharray="2.5,1.5"/>
<line x1="70" y1="845.5" x2="909" y2="845.5" stroke="#b4b4b4" stroke-width="1" stroke-dasharray="2.5,1.5"/>
<line x1="70" y1="825.5" x2="909" y2="825.5" stroke="#b4b4b4" stroke-width="1" stroke-dasharray="2.5,1.5"/>
<line x1="70" y1="806.5" x2="909" y2="806.5" stroke="#b4b4b4" stroke-width="1" stroke-dasharray="2.5,1.5"/>
<line x1="70" y1="786.5" x2="909" y2="786.5" stroke="#b4b4b4" stroke-width="1" stroke-dasharray="2.5,1.5"/>
<line x1="70" y1="766.5" x2="909" y2="766.5" stroke="#b4b4b4" stroke-width="1" stroke-dasharray="2.5,1.5"/>
<line x1="65.5" y1="757" x2="65.5" y2="966" stroke="#c8c8c8" stroke-width="1"/>
<line x1="63.5" y1="965.2" x2="65.5" y2="965.2" stroke="#c8c8c8" stroke-width="1"/>
<text x="40.92" y="969.57" font-size="12.72" fill="#444444" textLength="19.12" lengthAdjust="spacingAndGlyphs">0,0</text>
<line x1="63.5" y1="945.3" x2="65.5" y2="945.3" stroke="#c8c8c8" stroke-width="1"/>
<text x="41.23" y="949.68" font-size="12.72" fill="#444444" textLength="18.93" lengthAdjust="spacingAndGlyphs">0,1</text>
<line x1="63.5" y1="925.4" x2="65.5" y2="925.4" stroke="#c8c8c8" stroke-width="1"/>
<text x="41.33" y="929.79" font-size="12.72" fill="#444444" textLength="18.85" lengthAdjust="spacingAndGlyphs">0,2</text>
<line x1="63.5" y1="905.5" x2="65.5" y2="905.5" stroke="#c8c8c8" stroke-width="1"/>
<text x="41.08" y="909.90" font-size="12.72" fill="#444444" textLength="19.02" lengthAdjust="spacingAndGlyphs">0,3</text>
<line x1="63.5" y1="885.6" x2="65.5" y2="885.6" stroke="#c8c8c8" stroke-width="1"/>
<text x="40.79" y="890.01" font-size="12.72" fill="#444444" textLength="19.11" lengthAdjust="spacingAndGlyphs">0,4</text>
<line x1="63.5" y1="865.8" x2="65.5" y2="865.8" stroke="#c8c8c8" stroke-width="1"/>
<text x="41.17" y="870.12" font-size="12.72" fill="#444444" textLength="18.90" lengthAdjust="spacingAndGlyphs">0,5</text>
<line x1="63.5" y1="845.9" x2="65.5" y2="845.9" stroke="#c8c8c8" stroke-width="1"/>
<text x="40.87" y="850.23" font-size="12.72" fill="#444444" textLength="19.24" lengthAdjust="spacingAndGlyphs">0,6</text>
<line x1="63.5" y1="826.0" x2="65.5" y2="826.0" stroke="#c8c8c8" stroke-width="1"/>
<text x="41.15" y="830.34" font-size="12.72" fill="#444444" textLength="19.04" lengthAdjust="spacingAndGlyphs">0,7</text>
<line x1="63.5" y1="806.1" x2="65.5" y2="806.1" stroke="#c8c8c8" stroke-width="1"/>
<text x="40.94" y="810.45" font-size="12.72" fill="#444444" textLength="19.16" lengthAdjust="spacingAndGlyphs">0,8</text>
<line x1="63.5" y1="786.2" x2="65.5" y2="786.2" stroke="#c8c8c8" stroke-width="1"/>
<text x="40.96" y="790.56" font-size="12.72" fill="#444444" textLength="19.19" lengthAdjust="spacingAndGlyphs">0,9</text>
<line x1="63.5" y1="766.3" x2="65.5" y2="766.3" stroke="#c8c8c8" stroke-width="1"/>
<text x="40.93" y="770.67" font-size="12.72" fill="#444444" textLength="19.10" lengthAdjust="spacingAndGlyphs">1,0</text>
<line x1="69" y1="969.5" x2="910" y2="969.5" stroke="#c8c8c8" stroke-width="1"/>
<line x1="126.9" y1="969.5" x2="126.9" y2="972.0" stroke="#c8c8c8" stroke-width="1"/>
<text x="107.21" y="983.50" font-size="12.72" fill="#444444" textLength="39.41" lengthAdjust="spacingAndGlyphs">-3 000</text>
<line x1="187.2" y1="969.5" x2="187.2" y2="972.0" stroke="#c8c8c8" stroke-width="1"/>
<text x="167.51" y="983.50" font-size="12.72" fill="#444444" textLength="39.41" lengthAdjust="spacingAndGlyphs">-2 500</text>
<line x1="247.6" y1="969.5" x2="247.6" y2="972.0" stroke="#c8c8c8" stroke-width="1"/>
<text x="227.81" y="983.50" font-size="12.72" fill="#444444" textLength="39.41" lengthAdjust="spacingAndGlyphs">-2 000</text>
<line x1="307.9" y1="969.5" x2="307.9" y2="972.0" stroke="#c8c8c8" stroke-width="1"/>
<text x="288.11" y="983.50" font-size="12.72" fill="#444444" textLength="39.41" lengthAdjust="spacingAndGlyphs">-1 500</text>
<line x1="368.1" y1="969.5" x2="368.1" y2="972.0" stroke="#c8c8c8" stroke-width="1"/>
<text x="348.41" y="983.50" font-size="12.72" fill="#444444" textLength="39.41" lengthAdjust="spacingAndGlyphs">-1 000</text>
<line x1="428.4" y1="969.5" x2="428.4" y2="972.0" stroke="#c8c8c8" stroke-width="1"/>
<text x="414.72" y="983.50" font-size="12.72" fill="#444444" textLength="27.39" lengthAdjust="spacingAndGlyphs">-500</text>
<line x1="488.8" y1="969.5" x2="488.8" y2="972.0" stroke="#c8c8c8" stroke-width="1"/>
<text x="485.23" y="983.50" font-size="12.72" fill="#444444" textLength="7.04" lengthAdjust="spacingAndGlyphs">0</text>
<line x1="549.0" y1="969.5" x2="549.0" y2="972.0" stroke="#c8c8c8" stroke-width="1"/>
<text x="537.54" y="983.50" font-size="12.72" fill="#444444" textLength="23.00" lengthAdjust="spacingAndGlyphs">500</text>
<line x1="609.4" y1="969.5" x2="609.4" y2="972.0" stroke="#c8c8c8" stroke-width="1"/>
<text x="591.52" y="983.50" font-size="12.72" fill="#444444" textLength="35.14" lengthAdjust="spacingAndGlyphs">1 000</text>
<line x1="669.6" y1="969.5" x2="669.6" y2="972.0" stroke="#c8c8c8" stroke-width="1"/>
<text x="651.82" y="983.50" font-size="12.72" fill="#444444" textLength="35.14" lengthAdjust="spacingAndGlyphs">1 500</text>
<line x1="730.0" y1="969.5" x2="730.0" y2="972.0" stroke="#c8c8c8" stroke-width="1"/>
<text x="712.26" y="983.50" font-size="12.72" fill="#444444" textLength="35.22" lengthAdjust="spacingAndGlyphs">2 000</text>
<line x1="790.2" y1="969.5" x2="790.2" y2="972.0" stroke="#c8c8c8" stroke-width="1"/>
<text x="772.56" y="983.50" font-size="12.72" fill="#444444" textLength="35.22" lengthAdjust="spacingAndGlyphs">2 500</text>
<line x1="850.5" y1="969.5" x2="850.5" y2="972.0" stroke="#c8c8c8" stroke-width="1"/>
<text x="833.06" y="983.50" font-size="12.72" fill="#444444" textLength="35.00" lengthAdjust="spacingAndGlyphs">3 000</text>
<g transform="translate(27.00,861.50) rotate(-90)"><text x="-68.29" y="5.65" font-size="16.64" fill="#3a3a3a" textLength="136.03" lengthAdjust="spacingAndGlyphs">Intensity (arb. u.)</text></g>
<text x="455.09" y="1001.60" font-size="14.31" font-weight="bold" fill="#333333" textLength="67.94" lengthAdjust="spacingAndGlyphs">Time (fs)</text>
<path d="M107.0,964.5 L400.0,964.5 L426.5,962.3 L443.8,948.5 L450.9,936.3 L457.0,917.9 L463.1,893.5 L468.2,869.1 L474.3,832.4 L480.4,797.8 L485.5,777.4 L491.6,766.8 L498.8,775.4 L504.9,795.7 L510.0,820.2 L516.1,865.0 L522.2,895.5 L528.3,917.9 L534.4,936.3 L540.5,949.5 L546.6,957.2 L562.9,963.7 L590.0,964.5 L871.0,964.5" fill="none" stroke="#ff0000" stroke-width="1.1" stroke-linejoin="round"/>
<path d="M107.0,964.5 L400.0,964.5 L424.4,962.3 L432.6,958.7 L442.8,945.4 L449.9,932.2 L456.0,909.8 L462.1,887.4 L467.2,862.9 L473.3,822.2 L479.4,792.7 L485.5,775.4 L491.6,766.8 L498.8,779.4 L504.9,801.8 L510.0,826.3 L515.1,875.2 L522.2,899.6 L528.3,920.0 L534.4,938.3 L540.5,950.5 L546.6,957.6 L560.9,964.2 L590.0,964.5 L871.0,964.5" fill="none" stroke="#0000ff" stroke-width="1.1" stroke-linejoin="round"/>
<rect x="718.5" y="758.5" width="189.5" height="21.399999999999977" fill="#ffffff" stroke="#000" stroke-width="1.3"/>
<line x1="722" y1="769.2" x2="736.4" y2="769.2" stroke="#6464ff" stroke-width="2"/>
<text x="738.84" y="772.60" font-size="13.25" fill="#444444" textLength="82.51" lengthAdjust="spacingAndGlyphs">Experimental</text>
<line x1="826.7" y1="769.2" x2="841.2" y2="769.2" stroke="#ff6464" stroke-width="2"/>
<text x="843.84" y="772.60" font-size="13.25" fill="#444444" textLength="60.26" lengthAdjust="spacingAndGlyphs">Retrieved</text>
<rect x="996.5" y="757.5" width="840" height="208" fill="#ffffff" stroke="#7c7c7c" stroke-width="1"/>
<line x1="997" y1="965.5" x2="1836" y2="965.5" stroke="#b4b4b4" stroke-width="1" stroke-dasharray="2.5,1.5"/>
<line x1="997" y1="945.5" x2="1836" y2="945.5" stroke="#b4b4b4" stroke-width="1" stroke-dasharray="2.5,1.5"/>
<line x1="997" y1="925.5" x2="1836" y2="925.5" stroke="#b4b4b4" stroke-width="1" stroke-dasharray="2.5,1.5"/>
<line x1="997" y1="905.5" x2="1836" y2="905.5" stroke="#b4b4b4" stroke-width="1" stroke-dasharray="2.5,1.5"/>
<line x1="997" y1="885.5" x2="1836" y2="885.5" stroke="#b4b4b4" stroke-width="1" stroke-dasharray="2.5,1.5"/>
<line x1="997" y1="865.5" x2="1836" y2="865.5" stroke="#b4b4b4" stroke-width="1" stroke-dasharray="2.5,1.5"/>
<line x1="997" y1="845.5" x2="1836" y2="845.5" stroke="#b4b4b4" stroke-width="1" stroke-dasharray="2.5,1.5"/>
<line x1="997" y1="825.5" x2="1836" y2="825.5" stroke="#b4b4b4" stroke-width="1" stroke-dasharray="2.5,1.5"/>
<line x1="997" y1="806.5" x2="1836" y2="806.5" stroke="#b4b4b4" stroke-width="1" stroke-dasharray="2.5,1.5"/>
<line x1="997" y1="786.5" x2="1836" y2="786.5" stroke="#b4b4b4" stroke-width="1" stroke-dasharray="2.5,1.5"/>
<line x1="997" y1="766.5" x2="1836" y2="766.5" stroke="#b4b4b4" stroke-width="1" stroke-dasharray="2.5,1.5"/>
<line x1="992.5" y1="757" x2="992.5" y2="966" stroke="#c8c8c8" stroke-width="1"/>
<line x1="990.5" y1="965.2" x2="992.5" y2="965.2" stroke="#c8c8c8" stroke-width="1"/>
<text x="967.92" y="969.57" font-size="12.72" fill="#444444" textLength="19.12" lengthAdjust="spacingAndGlyphs">0,0</text>
<line x1="990.5" y1="945.3" x2="992.5" y2="945.3" stroke="#c8c8c8" stroke-width="1"/>
<text x="968.23" y="949.68" font-size="12.72" fill="#444444" textLength="18.93" lengthAdjust="spacingAndGlyphs">0,1</text>
<line x1="990.5" y1="925.4" x2="992.5" y2="925.4" stroke="#c8c8c8" stroke-width="1"/>
<text x="968.33" y="929.79" font-size="12.72" fill="#444444" textLength="18.85" lengthAdjust="spacingAndGlyphs">0,2</text>
<line x1="990.5" y1="905.5" x2="992.5" y2="905.5" stroke="#c8c8c8" stroke-width="1"/>
<text x="968.08" y="909.90" font-size="12.72" fill="#444444" textLength="19.02" lengthAdjust="spacingAndGlyphs">0,3</text>
<line x1="990.5" y1="885.6" x2="992.5" y2="885.6" stroke="#c8c8c8" stroke-width="1"/>
<text x="967.79" y="890.01" font-size="12.72" fill="#444444" textLength="19.11" lengthAdjust="spacingAndGlyphs">0,4</text>
<line x1="990.5" y1="865.8" x2="992.5" y2="865.8" stroke="#c8c8c8" stroke-width="1"/>
<text x="968.17" y="870.12" font-size="12.72" fill="#444444" textLength="18.90" lengthAdjust="spacingAndGlyphs">0,5</text>
<line x1="990.5" y1="845.9" x2="992.5" y2="845.9" stroke="#c8c8c8" stroke-width="1"/>
<text x="967.87" y="850.23" font-size="12.72" fill="#444444" textLength="19.24" lengthAdjust="spacingAndGlyphs">0,6</text>
<line x1="990.5" y1="826.0" x2="992.5" y2="826.0" stroke="#c8c8c8" stroke-width="1"/>
<text x="968.15" y="830.34" font-size="12.72" fill="#444444" textLength="19.04" lengthAdjust="spacingAndGlyphs">0,7</text>
<line x1="990.5" y1="806.1" x2="992.5" y2="806.1" stroke="#c8c8c8" stroke-width="1"/>
<text x="967.94" y="810.45" font-size="12.72" fill="#444444" textLength="19.16" lengthAdjust="spacingAndGlyphs">0,8</text>
<line x1="990.5" y1="786.2" x2="992.5" y2="786.2" stroke="#c8c8c8" stroke-width="1"/>
<text x="967.96" y="790.56" font-size="12.72" fill="#444444" textLength="19.19" lengthAdjust="spacingAndGlyphs">0,9</text>
<line x1="990.5" y1="766.3" x2="992.5" y2="766.3" stroke="#c8c8c8" stroke-width="1"/>
<text x="967.93" y="770.67" font-size="12.72" fill="#444444" textLength="19.10" lengthAdjust="spacingAndGlyphs">1,0</text>
<line x1="996" y1="969.5" x2="1837" y2="969.5" stroke="#c8c8c8" stroke-width="1"/>
<line x1="1026.6" y1="969.5" x2="1026.6" y2="972.0" stroke="#c8c8c8" stroke-width="1"/>
<text x="1015.30" y="983.50" font-size="12.72" fill="#444444" textLength="22.74" lengthAdjust="spacingAndGlyphs">572</text>
<line x1="1065.0" y1="969.5" x2="1065.0" y2="972.0" stroke="#c8c8c8" stroke-width="1"/>
<text x="1053.60" y="983.50" font-size="12.72" fill="#444444" textLength="22.90" lengthAdjust="spacingAndGlyphs">573</text>
<line x1="1103.4" y1="969.5" x2="1103.4" y2="972.0" stroke="#c8c8c8" stroke-width="1"/>
<text x="1091.87" y="983.50" font-size="12.72" fill="#444444" textLength="22.99" lengthAdjust="spacingAndGlyphs">574</text>
<line x1="1141.9" y1="969.5" x2="1141.9" y2="972.0" stroke="#c8c8c8" stroke-width="1"/>
<text x="1130.48" y="983.50" font-size="12.72" fill="#444444" textLength="22.78" lengthAdjust="spacingAndGlyphs">575</text>
<line x1="1180.3" y1="969.5" x2="1180.3" y2="972.0" stroke="#c8c8c8" stroke-width="1"/>
<text x="1168.75" y="983.50" font-size="12.72" fill="#444444" textLength="23.12" lengthAdjust="spacingAndGlyphs">576</text>
<line x1="1218.7" y1="969.5" x2="1218.7" y2="972.0" stroke="#c8c8c8" stroke-width="1"/>
<text x="1207.31" y="983.50" font-size="12.72" fill="#444444" textLength="22.92" lengthAdjust="spacingAndGlyphs">577</text>
<line x1="1257.1" y1="969.5" x2="1257.1" y2="972.0" stroke="#c8c8c8" stroke-width="1"/>
<text x="1245.62" y="983.50" font-size="12.72" fill="#444444" textLength="23.04" lengthAdjust="spacingAndGlyphs">578</text>
<line x1="1295.5" y1="969.5" x2="1295.5" y2="972.0" stroke="#c8c8c8" stroke-width="1"/>
<text x="1284.05" y="983.50" font-size="12.72" fill="#444444" textLength="23.07" lengthAdjust="spacingAndGlyphs">579</text>
<line x1="1334.0" y1="969.5" x2="1334.0" y2="972.0" stroke="#c8c8c8" stroke-width="1"/>
<text x="1322.45" y="983.50" font-size="12.72" fill="#444444" textLength="23.00" lengthAdjust="spacingAndGlyphs">580</text>
<line x1="1372.4" y1="969.5" x2="1372.4" y2="972.0" stroke="#c8c8c8" stroke-width="1"/>
<text x="1361.03" y="983.50" font-size="12.72" fill="#444444" textLength="22.82" lengthAdjust="spacingAndGlyphs">581</text>
<line x1="1410.8" y1="969.5" x2="1410.8" y2="972.0" stroke="#c8c8c8" stroke-width="1"/>
<text x="1399.50" y="983.50" font-size="12.72" fill="#444444" textLength="22.74" lengthAdjust="spacingAndGlyphs">582</text>
<line x1="1449.2" y1="969.5" x2="1449.2" y2="972.0" stroke="#c8c8c8" stroke-width="1"/>
<text x="1437.80" y="983.50" font-size="12.72" fill="#444444" textLength="22.90" lengthAdjust="spacingAndGlyphs">583</text>
<line x1="1487.6" y1="969.5" x2="1487.6" y2="972.0" stroke="#c8c8c8" stroke-width="1"/>
<text x="1476.07" y="983.50" font-size="12.72" fill="#444444" textLength="22.99" lengthAdjust="spacingAndGlyphs">584</text>
<line x1="1526.1" y1="969.5" x2="1526.1" y2="972.0" stroke="#c8c8c8" stroke-width="1"/>
<text x="1514.68" y="983.50" font-size="12.72" fill="#444444" textLength="22.78" lengthAdjust="spacingAndGlyphs">585</text>
<line x1="1564.5" y1="969.5" x2="1564.5" y2="972.0" stroke="#c8c8c8" stroke-width="1"/>
<text x="1552.95" y="983.50" font-size="12.72" fill="#444444" textLength="23.12" lengthAdjust="spacingAndGlyphs">586</text>
<line x1="1602.9" y1="969.5" x2="1602.9" y2="972.0" stroke="#c8c8c8" stroke-width="1"/>
<text x="1591.51" y="983.50" font-size="12.72" fill="#444444" textLength="22.92" lengthAdjust="spacingAndGlyphs">587</text>
<line x1="1641.3" y1="969.5" x2="1641.3" y2="972.0" stroke="#c8c8c8" stroke-width="1"/>
<text x="1629.82" y="983.50" font-size="12.72" fill="#444444" textLength="23.04" lengthAdjust="spacingAndGlyphs">588</text>
<line x1="1679.7" y1="969.5" x2="1679.7" y2="972.0" stroke="#c8c8c8" stroke-width="1"/>
<text x="1668.25" y="983.50" font-size="12.72" fill="#444444" textLength="23.07" lengthAdjust="spacingAndGlyphs">589</text>
<line x1="1718.2" y1="969.5" x2="1718.2" y2="972.0" stroke="#c8c8c8" stroke-width="1"/>
<text x="1706.65" y="983.50" font-size="12.72" fill="#444444" textLength="23.00" lengthAdjust="spacingAndGlyphs">590</text>
<line x1="1756.6" y1="969.5" x2="1756.6" y2="972.0" stroke="#c8c8c8" stroke-width="1"/>
<text x="1745.23" y="983.50" font-size="12.72" fill="#444444" textLength="22.82" lengthAdjust="spacingAndGlyphs">591</text>
<line x1="1795.0" y1="969.5" x2="1795.0" y2="972.0" stroke="#c8c8c8" stroke-width="1"/>
<text x="1783.70" y="983.50" font-size="12.72" fill="#444444" textLength="22.74" lengthAdjust="spacingAndGlyphs">592</text>
<line x1="1833.4" y1="969.5" x2="1833.4" y2="972.0" stroke="#c8c8c8" stroke-width="1"/>
<text x="1822.00" y="983.50" font-size="12.72" fill="#444444" textLength="22.90" lengthAdjust="spacingAndGlyphs">593</text>
<g transform="translate(954.00,861.50) rotate(-90)"><text x="-68.29" y="5.65" font-size="16.64" fill="#3a3a3a" textLength="136.03" lengthAdjust="spacingAndGlyphs">Intensity (arb. u.)</text></g>
<text x="1350.40" y="1001.60" font-size="15.05" font-weight="bold" fill="#333333" textLength="130.92" lengthAdjust="spacingAndGlyphs">Frequency (THz)</text>
<path d="M1033.0,964.5 L1290.0,964.5 L1291.5,964.5 L1292.9,964.4 L1294.4,964.3 L1295.8,964.1 L1297.3,963.9 L1298.7,963.6 L1300.2,963.3 L1301.7,963.0 L1303.1,962.7 L1304.6,962.3 L1306.0,961.9 L1307.5,961.5 L1308.9,961.1 L1310.4,960.7 L1311.8,960.3 L1313.1,959.8 L1314.5,959.2 L1315.8,958.5 L1317.2,957.8 L1318.5,957.0 L1319.9,956.1 L1321.2,955.2 L1322.6,954.2 L1324.0,953.0 L1325.3,951.7 L1326.7,950.1 L1328.0,948.3 L1329.4,946.5 L1330.7,944.5 L1332.1,942.4 L1333.4,940.4 L1334.8,938.3 L1336.3,936.1 L1337.7,933.7 L1339.2,931.3 L1340.6,928.7 L1342.1,926.0 L1343.5,923.1 L1345.0,920.0 L1346.3,916.9 L1347.7,913.4 L1349.0,909.7 L1350.4,905.8 L1351.8,901.7 L1353.1,897.6 L1354.5,893.3 L1355.8,888.7 L1357.2,883.9 L1358.6,879.0 L1359.9,874.1 L1361.3,869.1 L1362.7,864.1 L1364.0,859.1 L1365.3,853.9 L1366.7,848.8 L1368.1,843.6 L1369.4,838.5 L1370.8,833.3 L1372.1,828.0 L1373.5,822.7 L1374.9,817.5 L1376.2,812.6 L1377.6,808.0 L1378.9,803.8 L1380.3,799.7 L1381.7,795.8 L1383.0,792.1 L1384.3,788.7 L1385.7,785.5 L1387.1,782.4 L1388.4,779.3 L1389.8,776.4 L1391.2,773.8 L1392.5,771.7 L1393.9,770.3 L1395.1,769.4 L1396.3,768.5 L1397.6,767.8 L1398.8,767.4 L1400.0,767.2 L1401.4,767.4 L1402.8,768.1 L1404.3,769.0 L1405.7,770.1 L1407.1,771.3 L1408.5,772.7 L1409.9,774.5 L1411.4,776.6 L1412.8,779.0 L1414.2,781.5 L1415.7,784.5 L1417.1,788.0 L1418.6,792.0 L1420.0,796.2 L1421.5,800.5 L1422.9,804.8 L1424.4,809.0 L1425.9,813.1 L1427.3,817.3 L1428.8,821.5 L1430.2,825.7 L1431.7,830.0 L1433.1,834.3 L1434.6,838.5 L1436.1,842.7 L1437.5,846.9 L1439.0,851.1 L1440.4,855.4 L1441.9,859.6 L1443.3,863.8 L1444.8,868.0 L1446.2,871.9 L1447.5,875.9 L1448.8,879.8 L1450.2,883.8 L1451.6,887.7 L1452.9,891.5 L1454.3,895.4 L1455.6,899.5 L1457.0,903.5 L1458.4,907.3 L1459.7,910.8 L1461.1,913.9 L1462.6,916.7 L1464.0,919.4 L1465.5,921.8 L1466.9,924.0 L1468.4,926.2 L1469.8,928.2 L1471.3,930.2 L1472.7,932.0 L1474.0,933.8 L1475.4,935.5 L1476.7,937.1 L1478.1,938.7 L1479.4,940.2 L1480.8,941.7 L1482.1,943.1 L1483.5,944.4 L1485.0,945.8 L1486.4,947.1 L1487.9,948.4 L1489.3,949.6 L1490.8,950.7 L1492.2,951.7 L1493.7,952.6 L1495.1,953.4 L1496.5,954.1 L1498.0,954.7 L1499.4,955.3 L1500.8,955.9 L1502.2,956.5 L1503.6,957.0 L1505.1,957.4 L1506.5,957.9 L1507.9,958.3 L1509.3,958.7 L1510.7,959.1 L1512.1,959.5 L1513.6,959.9 L1515.0,960.2 L1516.4,960.5 L1517.8,960.9 L1519.2,961.2 L1520.6,961.5 L1522.1,961.7 L1523.5,961.9 L1524.9,962.1 L1526.3,962.3 L1527.8,962.5 L1529.2,962.6 L1530.7,962.8 L1532.2,962.9 L1533.6,963.0 L1535.1,963.2 L1536.6,963.3 L1538.1,963.4 L1539.5,963.6 L1541.0,963.7 L1542.5,963.8 L1543.9,963.9 L1545.4,964.0 L1546.9,964.1 L1548.3,964.2 L1549.8,964.2 L1551.3,964.3 L1552.8,964.4 L1554.2,964.4 L1555.7,964.5 L1557.2,964.5 L1558.6,964.5 L1560.1,964.5 L1798.0,964.5" fill="none" stroke="#ff0000" stroke-width="1.1" stroke-linejoin="round"/>
<path d="M1033.0,964.5 L1290.0,964.5 L1291.5,964.5 L1292.9,964.4 L1294.4,964.3 L1295.8,964.1 L1297.3,963.9 L1298.7,963.6 L1300.2,963.3 L1301.7,963.0 L1303.1,962.7 L1304.6,962.3 L1306.0,961.9 L1307.5,961.5 L1308.9,961.1 L1310.4,960.7 L1311.8,960.3 L1313.1,959.8 L1314.5,959.2 L1315.8,958.5 L1317.2,957.8 L1318.5,957.0 L1319.9,956.1 L1321.2,955.2 L1322.6,954.2 L1324.1,953.0 L1325.5,951.6 L1327.0,949.9 L1328.4,948.2 L1329.9,946.3 L1331.3,944.4 L1332.8,942.4 L1334.3,940.4 L1335.7,938.4 L1337.2,936.3 L1338.6,934.1 L1340.1,931.7 L1341.5,929.0 L1343.0,926.1 L1344.3,922.9 L1345.7,919.2 L1347.0,915.0 L1348.4,910.6 L1349.8,906.1 L1351.1,901.6 L1352.4,897.1 L1353.8,892.5 L1355.2,887.7 L1356.5,882.9 L1357.8,878.0 L1359.2,873.1 L1360.6,868.1 L1361.9,863.1 L1363.3,858.1 L1364.7,853.0 L1366.0,847.8 L1367.4,842.6 L1368.8,837.2 L1370.1,831.6 L1371.5,825.8 L1372.8,820.2 L1374.2,814.9 L1375.5,810.0 L1376.7,806.0 L1377.9,802.1 L1379.2,798.5 L1380.4,795.0 L1381.6,791.7 L1383.0,787.8 L1384.5,783.8 L1385.9,780.1 L1387.4,776.9 L1388.8,774.3 L1390.0,772.5 L1391.2,770.8 L1392.5,769.3 L1393.7,768.2 L1394.9,767.6 L1396.1,767.3 L1397.3,767.1 L1398.6,766.9 L1399.8,766.8 L1401.0,766.8 L1402.2,767.0 L1403.4,767.7 L1404.7,768.6 L1405.9,769.7 L1407.1,770.9 L1408.3,772.3 L1409.5,774.0 L1410.8,776.0 L1412.0,778.2 L1413.2,780.5 L1414.5,783.2 L1415.8,786.2 L1417.1,789.5 L1418.5,793.0 L1419.8,796.6 L1421.1,800.3 L1422.4,803.9 L1423.9,808.0 L1425.3,812.3 L1426.8,816.7 L1428.2,821.2 L1429.7,825.6 L1431.1,830.1 L1432.6,834.4 L1434.0,838.3 L1435.3,842.3 L1436.7,846.1 L1438.0,850.0 L1439.4,853.8 L1440.7,857.7 L1442.1,861.5 L1443.4,865.3 L1444.8,869.1 L1446.2,872.9 L1447.5,876.7 L1448.8,880.4 L1450.2,884.2 L1451.6,887.9 L1452.9,891.5 L1454.3,895.3 L1455.6,899.1 L1457.0,902.9 L1458.4,906.6 L1459.7,909.9 L1461.1,912.8 L1462.6,915.5 L1464.0,917.9 L1465.5,920.1 L1466.9,922.2 L1468.4,924.2 L1469.8,926.2 L1471.3,928.1 L1472.7,930.0 L1474.2,931.9 L1475.6,933.7 L1477.1,935.5 L1478.5,937.1 L1480.0,938.8 L1481.4,940.3 L1482.9,941.8 L1484.3,943.3 L1485.8,944.7 L1487.2,946.1 L1488.7,947.3 L1490.1,948.5 L1491.6,949.5 L1493.0,950.4 L1494.5,951.3 L1495.9,952.1 L1497.3,952.8 L1498.8,953.6 L1500.2,954.3 L1501.6,954.9 L1503.0,955.5 L1504.5,956.1 L1505.9,956.6 L1507.3,957.1 L1508.7,957.6 L1510.1,958.1 L1511.5,958.6 L1512.9,959.0 L1514.3,959.5 L1515.8,959.9 L1517.2,960.3 L1518.6,960.6 L1520.0,961.0 L1521.4,961.2 L1522.8,961.5 L1524.2,961.7 L1525.7,961.9 L1527.2,962.1 L1528.7,962.3 L1530.2,962.4 L1531.7,962.6 L1533.2,962.8 L1534.7,963.0 L1536.2,963.1 L1537.7,963.3 L1539.2,963.4 L1540.7,963.6 L1542.2,963.7 L1543.6,963.8 L1545.1,963.9 L1546.6,964.0 L1548.1,964.1 L1549.6,964.2 L1551.1,964.3 L1552.6,964.3 L1554.1,964.4 L1555.6,964.4 L1557.1,964.5 L1558.6,964.5 L1560.1,964.5 L1798.0,964.5" fill="none" stroke="#0000ff" stroke-width="1.1" stroke-linejoin="round"/>
<rect x="1645.5" y="758.5" width="189.70000000000005" height="21.399999999999977" fill="#ffffff" stroke="#000" stroke-width="1.3"/>
<line x1="1649" y1="769.2" x2="1663.5" y2="769.2" stroke="#6464ff" stroke-width="2"/>
<text x="1665.84" y="772.60" font-size="13.25" fill="#444444" textLength="82.51" lengthAdjust="spacingAndGlyphs">Experimental</text>
<line x1="1753.7" y1="769.2" x2="1768.2" y2="769.2" stroke="#ff6464" stroke-width="2"/>
<text x="1770.84" y="772.60" font-size="13.25" fill="#444444" textLength="60.26" lengthAdjust="spacingAndGlyphs">Retrieved</text>
<rect x="0" y="107" width="1217" height="290" fill="#15181f" rx="2"/>
<rect x="1" y="108" width="1215" height="288" fill="#e9ebee" rx="1"/>
<rect x="2" y="109" width="1213" height="287" fill="#b9bdc5"/>
<rect x="2" y="109" width="1213" height="22" fill="url(#tAct)"/>
<rect x="5" y="131" width="1207" height="261" fill="#6b707d"/>
<rect x="6" y="132" width="1205" height="6" fill="#d6d9e1"/>
<rect x="6" y="138" width="1205" height="253" fill="#ffffff"/>
<text x="518.87" y="128.80" font-size="19.08" font-weight="bold" fill="#000000" textLength="179.51" lengthAdjust="spacingAndGlyphs">Numerical results</text>
<rect x="1153.5" y="114.5" width="17" height="16" rx="4" fill="url(#bOr)" stroke="#7a1800" stroke-width="1"/>
<rect x="1158" y="125.5" width="8" height="2" fill="#ffffff"/>
<rect x="1173.5" y="114.5" width="17" height="16" rx="4" fill="url(#bGr)" stroke="#0e2a00" stroke-width="1"/>
<rect x="1177.5" y="118.5" width="9" height="8" fill="none" stroke="#ffffff" stroke-width="1.3"/>
<rect x="1177" y="117.5" width="10" height="2" fill="#ffffff"/>
<rect x="1193.5" y="114.5" width="17" height="16" rx="4" fill="url(#bRd)" stroke="#6a0000" stroke-width="1"/>
<path d="M1198,118.5 L1206,126.5 M1206,118.5 L1198,126.5" stroke="#ffffff" stroke-width="1.8" fill="none"/>
<text x="452.12" y="194.80" font-size="66.00" font-weight="bold" fill="#0000ff" textLength="314.43" lengthAdjust="spacingAndGlyphs">263,78 fs</text>
<path d="M16.3,233 L23.6,227 L30.9,233" stroke="#000" stroke-width="2.3" fill="none"/>
<text x="36.79" y="239.00" font-size="22.26" font-weight="bold" fill="#000" textLength="91.96" lengthAdjust="spacingAndGlyphs">General</text>
<text x="43.73" y="263.90" font-size="22.26" fill="#000" textLength="200.52" lengthAdjust="spacingAndGlyphs">FROG error: 2,2E-2</text>
<text x="43.74" y="288.70" font-size="22.26" fill="#000" textLength="246.65" lengthAdjust="spacingAndGlyphs">FE FROG error: 2,31E-3</text>
<text x="43.77" y="313.90" font-size="22.26" fill="#000" textLength="414.28" lengthAdjust="spacingAndGlyphs">Time bandwidth product (TBWP): 0,371</text>
<path d="M476.3,233 L483.6,227 L490.90000000000003,233" stroke="#000" stroke-width="2.3" fill="none"/>
<text x="497.32" y="239.00" font-size="22.26" font-weight="bold" fill="#000" textLength="111.43" lengthAdjust="spacingAndGlyphs">Temporal</text>
<text x="503.47" y="263.90" font-size="22.26" fill="#000" textLength="355.38" lengthAdjust="spacingAndGlyphs">Pulse duration (FWHM): 263,78 fs</text>
<text x="503.40" y="288.70" font-size="22.26" fill="#000" textLength="336.48" lengthAdjust="spacingAndGlyphs">Fourier limit duration: 256,31 fs</text>
<text x="504.25" y="313.90" font-size="22.26" fill="#000" textLength="365.60" lengthAdjust="spacingAndGlyphs">Autocorrelation (FWHM): 397,18 fs</text>
<path d="M880.3,233 L887.5999999999999,227 L894.9,233" stroke="#000" stroke-width="2.3" fill="none"/>
<text x="902.29" y="239.00" font-size="22.26" font-weight="bold" fill="#000" textLength="97.36" lengthAdjust="spacingAndGlyphs">Spectral</text>
<text x="907.63" y="263.90" font-size="22.26" fill="#000" textLength="301.31" lengthAdjust="spacingAndGlyphs">Spectral bandwidth (FWHM):</text>
<text x="907.49" y="288.70" font-size="22.26" fill="#000" textLength="344.28" lengthAdjust="spacingAndGlyphs" clip-path="url(#numclip)">Central wavelength: 1030,70 nm</text>
<text x="907.40" y="313.90" font-size="22.26" fill="#000" textLength="215.72" lengthAdjust="spacingAndGlyphs">Phi 2: -5584,85 fs^2</text>
<text x="907.41" y="338.90" font-size="22.26" fill="#000" textLength="255.15" lengthAdjust="spacingAndGlyphs">Phi 3: -2389810,00 fs^3</text>
<text x="907.43" y="363.90" font-size="22.26" fill="#000" textLength="284.97" lengthAdjust="spacingAndGlyphs">Phi 4: 5447810000,00 fs^4</text>
<rect x="0.5" y="1030.5" width="1853" height="24" fill="#d6d9e1" stroke="#8c9098" stroke-width="1"/>
<rect x="1" y="1031" width="1852" height="1" fill="#ffffff"/>
<rect x="1" y="1031" width="1" height="23" fill="#ffffff"/>
<text x="2.31" y="1048.90" font-size="18.55" fill="#000" textLength="55.92" lengthAdjust="spacingAndGlyphs">Ready</text></svg></body></html>
